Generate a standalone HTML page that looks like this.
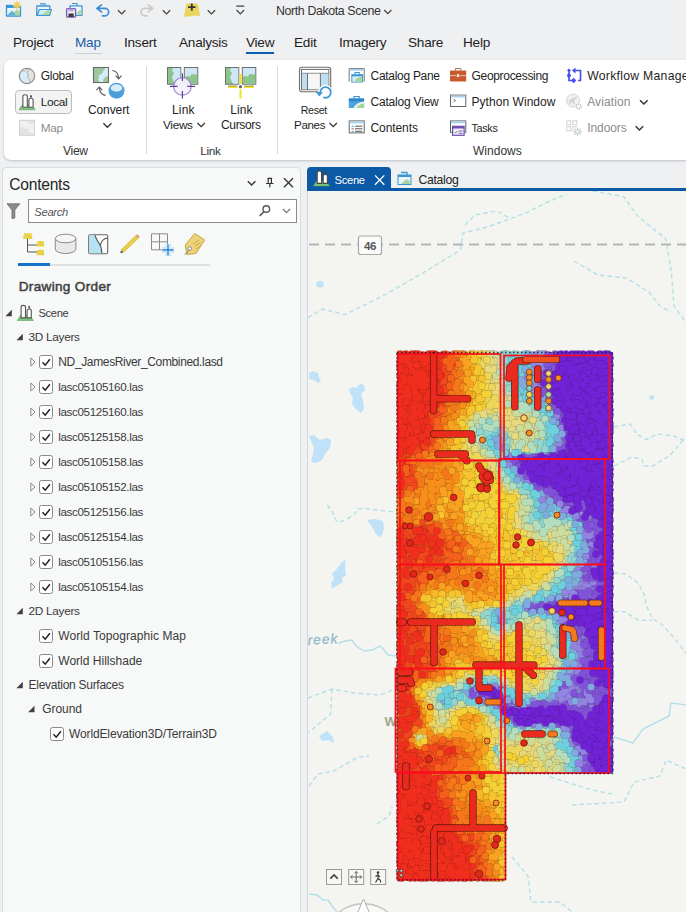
<!DOCTYPE html>
<html><head><meta charset="utf-8">
<style>
*{box-sizing:border-box;margin:0;padding:0}
html,body{width:686px;height:912px;overflow:hidden;background:#eff0f2;font-family:"Liberation Sans",sans-serif;color:#1e1e1e}
.a{position:absolute}
.t{position:absolute;white-space:nowrap;line-height:16px;font-size:12.5px;letter-spacing:-0.2px;transform-origin:0 50%}
.tab{font-size:13.6px;letter-spacing:-0.25px}
svg{position:absolute;overflow:visible}
</style></head><body>
<!-- TITLEBAR -->

<div class="t" style="left:276.0px;top:3.3px;font-size:12.4px;letter-spacing:-0.39px;color:#333;">North Dakota Scene</div>
<!--TITLEICONS-->
<svg style="left:0;top:0" width="260" height="24" viewBox="0 0 260 24">
<!-- new project -->
<g>
<path d="M6.5 5.5h5l1 1.5h8v9h-14z" fill="#e9f4fb" stroke="#3b97d3" stroke-width="1.3" stroke-linejoin="round"/>
<rect x="6" y="5" width="7" height="3" fill="#3b97d3"/>
<path d="M10 15.5l7-6 3 2.5v3.5z" fill="#a8d5a0"/>
<path d="M7 15.5l5-5 4 5z" fill="#5fb0e0"/>
<circle cx="17" cy="5.2" r="2.6" fill="#f2cf4a"/>
<g stroke="#e8b93a" stroke-width="1"><path d="M17 1v1.2M17 8.2v1.2M12.9 5.2h1.2M19.9 5.2h1.2M14.1 2.3l.9.9M19 7.2l.9.9M19.9 2.3l-.9.9M15 7.2l-.9.9"/></g>
</g>
<!-- open -->
<g>
<path d="M40 3.8h5v2" fill="none" stroke="#3b97d3" stroke-width="1.2"/>
<path d="M36.8 6h13v9.3h-13z" fill="#eef6fc" stroke="#3b97d3" stroke-width="1.3" stroke-linejoin="round"/>
<path d="M39.5 9.5h12l-2.2 5.8h-12.3z" fill="#d5ebf8" stroke="#3b97d3" stroke-width="1.2" stroke-linejoin="round"/>
<path d="M42 15l6-5 2.5 1-1.3 4z" fill="#a8d5a0"/>
</g>
<!-- save -->
<g>
<path d="M72 3.5h5v2" fill="none" stroke="#3b97d3" stroke-width="1.2"/>
<path d="M70 5.8h12v9.5h-12z" fill="#eef6fc" stroke="#3b97d3" stroke-width="1.3" stroke-linejoin="round"/>
<path d="M76 14l4-4 2 1.5v3.5z" fill="#a8d5a0"/>
<rect x="66.6" y="8.6" width="9" height="8.6" rx="1" fill="#efe9f7" stroke="#7a5bb0" stroke-width="1.3"/>
<rect x="68.5" y="13.5" width="5.2" height="3.5" fill="#3a3a3a"/>
<rect x="68.5" y="8.8" width="5" height="2.4" fill="#b9a5dc"/>
</g>
<!-- undo -->
<path d="M101.5 4.9l-4.6 3.500 4.600 3.500M97 8.400h8a3.700 3.700 0 0 1 0 7.400h-2.500" fill="none" stroke="#3a8fd8" stroke-width="1.7" stroke-linecap="round" stroke-linejoin="round"/>
<path d="M118 10.3l3.7 3.6 3.7-3.6" fill="none" stroke="#444" stroke-width="1.3"/>
<!-- redo -->
<path d="M148.200 4.900l4.600 3.500-4.600 3.500M152.700 8.400h-8a3.700 3.700 0 0 0 0 7.400h2.500" fill="none" stroke="#c9c9c9" stroke-width="1.700" stroke-linecap="round" stroke-linejoin="round"/>
<path d="M162.800 10.300l3.700 3.600 3.700-3.600" fill="none" stroke="#444" stroke-width="1.300"/>
<!-- yellow add -->
<path d="M186.300 3.600h11.600l2.100 12.400q-4-1-8 0t-8 .5z" fill="#e9d45f"/>
<path d="M191.800 3.400v7.400M188.100 7.100h7.400" stroke="#333" stroke-width="1.800"/>
<path d="M207.700 10.300l3.700 3.600 3.700-3.600" fill="none" stroke="#444" stroke-width="1.300"/>
<!-- customize -->
<path d="M236.300 6.200h8M236.500 10l3.800 3.800 3.800-3.800" fill="none" stroke="#444" stroke-width="1.200"/>
</svg>
<svg style="left:383px;top:8px" width="10" height="8" viewBox="0 0 10 8"><path d="M1.200 2l3.600 3.600 3.600-3.600" fill="none" stroke="#444" stroke-width="1.300"/></svg>

<!--/TITLEICONS-->
<!-- MENU TABS -->
<div class="t tab" style="left:13px;top:34.5px">Project</div>
<div class="t tab" style="left:75px;top:34.5px;color:#1b5fa8">Map</div>
<div class="a" style="left:75px;top:52.5px;width:27px;height:1px;background:#cfd0d4"></div>
<div class="t tab" style="left:124px;top:34.5px">Insert</div>
<div class="t tab" style="left:179px;top:34.5px">Analysis</div>
<div class="t tab" style="left:246px;top:34.5px">View</div>
<div class="a" style="left:246px;top:52px;width:28px;height:2px;background:#0b5cab"></div>
<div class="t tab" style="left:294px;top:34.5px">Edit</div>
<div class="t tab" style="left:339px;top:34.5px">Imagery</div>
<div class="t tab" style="left:408px;top:34.5px">Share</div>
<div class="t tab" style="left:463px;top:34.5px">Help</div>
<!-- RIBBON -->
<div class="a" id="ribbon" style="left:4px;top:59.5px;width:700px;height:100px;background:#fff;border-radius:7px 0 0 7px;box-shadow:0 1px 2.5px rgba(0,0,20,.2)"></div>
<div class="a" style="left:146px;top:66px;width:1px;height:88px;background:#dcdcdc"></div>
<div class="a" style="left:277px;top:66px;width:1px;height:88px;background:#dcdcdc"></div>
<!--RIBBONCONTENT-->
<!-- local button bg -->
<div class="a" style="left:15px;top:90px;width:57px;height:24px;background:#f3f3f3;border:1px solid #bcbcbc;border-radius:4px"></div>
<svg style="left:0;top:60px" width="686" height="100" viewBox="0 60 686 100">
<!-- globe -->
<g>
<circle cx="27" cy="76" r="7.700" fill="#d8ebf8" stroke="#8a8a8a" stroke-width="1.200"/>
<path d="M29.500 68.800l-2.500 4 1.500 2-1 2.500 2 2 .5 3.500 3-2.500 1.600-4-1-4.500z" fill="#e3e3e3" stroke="#9a9a9a" stroke-width=".8"/>
<path d="M22 70.500l2.500-1.800 2 .3-2 2.500z" fill="#e3e3e3" stroke="#9a9a9a" stroke-width=".6"/>
</g>
<!-- local -->
<g>
<path d="M19 109.800l3.300-5h9.600l3.300 5z" fill="#7cc47f" stroke="#58a35c" stroke-width=".6"/>
<path d="M22.900 107.200v-10.700q0-1.800 2.200-1.800t2.200 1.800v10.700z" fill="#fff" stroke="#555" stroke-width="1.100"/>
<path d="M28.900 107.200v-7.600q0-1.300 2.100-1.300t2.100 1.300v7.600zM31 98.300v-3.200M30 96.400h2" fill="#fff" stroke="#555" stroke-width="1.100"/>
</g>
<!-- map disabled -->
<g>
<rect x="19.500" y="120.300" width="15" height="15" fill="#f1f1f1" stroke="#cfcfcf" stroke-width="1"/>
<path d="M20 135v-7l3-2 2 3 3-1 1 4 4 1v2z" fill="#e2e2e2"/>
<path d="M27 121l3 3 4-1v-2z" fill="#e2e2e2"/>
</g>
<!-- convert -->
<g>
<rect x="93.500" y="67.500" width="15" height="15" fill="#9cc79a" stroke="#6a6a6a" stroke-width="1.100"/>
<path d="M108 68h-2.500l-2 2.500-1.500 3-3.500 2 .5 2.500-1 1 1.500 3h3.500l.5-3 2.500-2.500 2-.5z" fill="#d5ebf8"/>
<ellipse cx="116.500" cy="90.700" rx="8" ry="8" fill="#4c9fda"/>
<ellipse cx="116.500" cy="88" rx="5.800" ry="3.700" fill="#d9ecfa"/>
<path d="M112.300 70.500q6 .5 6.300 8m-3-2.800l3 3.200 2.900-3.200" fill="none" stroke="#5a5a5a" stroke-width="1.100"/>
<path d="M105.600 95.400q-5.800-.8-6.300-8m-2.900 2.800l2.900-3.200 3 3.200" fill="none" stroke="#5a5a5a" stroke-width="1.100"/>
<path d="M103.400 123.300l4 3.900 4-3.900" fill="none" stroke="#333" stroke-width="1.400"/>
</g>
<!-- link views -->
<g>
<rect x="167.500" y="67.500" width="13.300" height="16.700" fill="#8cc58a" stroke="#6e6e6e" stroke-width="1"/>
<path d="M173 68l-1 3 2 2-2 4 1 3 2 3.700h5.300v-15.700z" fill="#cfe6f6"/>
<rect x="184.300" y="67.500" width="13.500" height="16.700" fill="#cfe6f6" stroke="#6e6e6e" stroke-width="1"/>
<path d="M184.800 83.700v-6l2-2 3 1 2-3 3 1 2.500-1v10z" fill="#8cc58a"/>
<circle cx="182.400" cy="86.400" r="8.800" fill="#f5f3fb" fill-opacity=".92" stroke="#9f8ccd" stroke-width="1.300"/>
<path d="M182.400 73.500v7.500M182.400 91v7.600M170 86.400h7.600M187.300 86.400h7.700" stroke="#5b3fa0" stroke-width="1.200"/>
<path d="M197.500 123l3.700 3.700 3.700-3.700" fill="none" stroke="#333" stroke-width="1.300"/>
</g>
<!-- link cursors -->
<g>
<rect x="225.500" y="67.500" width="13.300" height="16.700" fill="#8cc58a" stroke="#6e6e6e" stroke-width="1"/>
<path d="M231 68l-1 3 2 2-2 4 1 3 2 3.700h5.300v-15.700z" fill="#cfe6f6"/>
<rect x="242.300" y="67.500" width="13.500" height="16.700" fill="#cfe6f6" stroke="#6e6e6e" stroke-width="1"/>
<path d="M242.800 83.700v-6l2-2 3 1 2-3 3 1 2.500-1v10z" fill="#8cc58a"/>
<path d="M240.500 74v10M240.500 89.500v9M228 87h9.300M244 87h9.800" stroke="#f2e21e" stroke-width="2"/>
<path d="M228 86h9.300M244 86h9.800" stroke="#555" stroke-width=".6"/>
<circle cx="240.500" cy="86.700" r="1.600" fill="#666"/>
</g>
<!-- reset panes -->
<g>
<rect x="299.500" y="67.300" width="31.200" height="24.500" rx="2.500" fill="#fff" stroke="#6e6e6e" stroke-width="1.100"/>
<rect x="301.500" y="69.400" width="27.300" height="20.300" fill="#fff" stroke="#6e6e6e" stroke-width="1"/>
<path d="M301.500 73.300h27.300" stroke="#6e6e6e" stroke-width=".9"/>
<rect x="302" y="73.800" width="5" height="15.400" fill="#bfddf3"/>
<rect x="320.800" y="73.800" width="7.500" height="15.400" fill="#bfddf3"/>
<rect x="308" y="73.800" width="12" height="15.400" fill="#f6f6f6"/>
<path d="M307.500 73.300v16.400M320.400 73.300v16.400" stroke="#6e6e6e" stroke-width="1"/>
<circle cx="325.300" cy="92.400" r="7.300" fill="#fff"/>
<path d="M320.200 92.600a5.300 5.300 0 1 1 3.800 4.900" fill="none" stroke="#3d9ad6" stroke-width="1.800" stroke-linecap="round"/>
<path d="M315.800 92h7.200l-3.700 4.500z" fill="#3d9ad6"/>
<path d="M329.500 123l3.700 3.700 3.700-3.700" fill="none" stroke="#333" stroke-width="1.300"/>
</g>
<!-- catalog pane -->
<g>
<path d="M349.200 81.500v-13h15v13" fill="#fff" stroke="#777" stroke-width="1"/>
<rect x="349.700" y="68.800" width="14" height="2" fill="#a9d3f0"/>
<path d="M355 74.200v-1.700h4.200v1.700" fill="none" stroke="#3b97d3" stroke-width="1.100"/>
<rect x="351.300" y="74.200" width="11.800" height="8.300" fill="#3b97d3"/>
<rect x="352.300" y="76.300" width="9.800" height="5.400" fill="#d9edf9"/>
<path d="M354.500 81.700q1.500-4.500 7.600-5v5z" fill="#a5d49c"/>
</g>
<!-- catalog view -->
<g>
<path d="M354 98.700v-2.200h5.200v2.200" fill="none" stroke="#3b97d3" stroke-width="1.200"/>
<rect x="348.800" y="98.500" width="15.300" height="9.500" fill="#4aa3df"/>
<rect x="348.800" y="98.500" width="15.300" height="2.800" fill="#2f86c6"/>
<path d="M353.500 108q2-5.500 10.600-6.500v6.500z" fill="#e6f3e2"/>
<path d="M356.500 108q2-4 7.600-4.500v4.500z" fill="#a5d49c"/>
</g>
<!-- contents -->
<g>
<rect x="349.200" y="120.900" width="15" height="12" fill="#fff" stroke="#666" stroke-width="1"/>
<rect x="349.700" y="121.400" width="14" height="2" fill="#a9d3f0"/>
<path d="M355 126.200h7.300M355 128.800h7.300M355 131.300h7.300" stroke="#555" stroke-width="1"/>
<path d="M351.600 126.200h2M351.600 131.300h2" stroke="#3b97d3" stroke-width="1.100"/>
<path d="M351.600 128.800h2" stroke="#d05a3a" stroke-width="1.100"/>
</g>
<!-- geoprocessing -->
<g>
<path d="M455.300 70.700v-2.200h5.600v2.200" fill="#fff" stroke="#9a7a70" stroke-width="1"/>
<rect x="450" y="70.500" width="16.200" height="11" rx=".8" fill="#c8592f"/>
<path d="M450 75.600h16.200" stroke="#f3cfc0" stroke-width=".9"/>
<rect x="456.700" y="73.800" width="2.800" height="3.600" fill="#fbeee8" stroke="#c8592f" stroke-width=".7"/>
</g>
<!-- python window -->
<g>
<rect x="450.500" y="95.100" width="15.300" height="11.400" fill="#fff" stroke="#666" stroke-width="1"/>
<rect x="451" y="95.600" width="14.300" height="1.900" fill="#a9d3f0"/>
<path d="M453.700 99.200l1.800 1.300-1.800 1.300" fill="none" stroke="#555" stroke-width=".9"/>
</g>
<!-- tasks -->
<g>
<rect x="450.500" y="120.900" width="15.300" height="11.400" fill="#fff" stroke="#666" stroke-width="1"/>
<rect x="451" y="121.400" width="14.300" height="1.900" fill="#a9d3f0"/>
<rect x="452.600" y="126.300" width="11.500" height="9" fill="#f5f1fb" stroke="#6a4fb0" stroke-width="1.200"/>
<rect x="452.600" y="126.300" width="11.500" height="2.200" fill="#6a4fb0"/>
<path d="M458.500 131h4M458.500 133.300h4" stroke="#6a4fb0" stroke-width=".9"/>
<path d="M454.600 132l1.100 1.100 1.800-2.200" fill="none" stroke="#3f9f4a" stroke-width="1"/>
</g>
<!-- workflow manager -->
<g fill="none" stroke="#4b4ff0" stroke-width="1.700">
<path d="M569 70.500v10h3M574.500 70.500h6v10h-2.500"/>
<g fill="#4b4ff0" stroke="none"><circle cx="569" cy="70.300" r="1.500"/><circle cx="569" cy="75.500" r="1.900"/><path d="M573.600 77.700l2.700 2.800-2.700 2.800-2.700-2.800zM575.500 67.600v5.800l-3.600-2.900z"/></g>
</g>
<!-- aviation -->
<g>
<circle cx="573" cy="100.600" r="6.500" fill="#f1f1f1" stroke="#d6d6d6" stroke-width="1"/>
<path d="M569.300 103.700l7-6.400M572.300 98.300l1.800 5.800M569.300 100.200l4.200 1.500" stroke="#cdcdcd" stroke-width="1.400" fill="none" stroke-linecap="round"/>
<circle cx="578.600" cy="106.400" r="3.300" fill="#fff"/>
<circle cx="578.600" cy="106.400" r="2.300" fill="#fff" stroke="#bdbdbd" stroke-width="1.500" stroke-dasharray="1.100 .700"/>
<path d="M640 100.300l3.800 3.800 3.800-3.800" fill="none" stroke="#333" stroke-width="1.400"/>
</g>
<!-- indoors -->
<g>
<g fill="#fff" stroke="#d2d2d2" stroke-width="1"><rect x="566.700" y="120.800" width="4" height="4"/><rect x="572.800" y="120.800" width="4" height="4"/><rect x="566.700" y="126.800" width="4" height="4"/><path d="M572.800 130.800v-4h4"/></g>
<circle cx="577.600" cy="131.600" r="3.600" fill="#fff"/>
<path d="M577.600 127.400v8.400M573.400 131.600h8.400M574.600 128.600l6 6M580.600 128.600l-6 6" stroke="#c2c2c2" stroke-width="1.100"/>
<circle cx="577.600" cy="131.600" r="1.300" fill="#fff"/>
<path d="M635.600 126.300l3.800 3.800 3.800-3.800" fill="none" stroke="#333" stroke-width="1.400"/>
</g>
</svg>
<div class="t" style="left:40.8px;top:68.0px;font-size:12.0px;letter-spacing:-0.30px;">Global</div>
<div class="t" style="left:40.8px;top:94.0px;font-size:11.8px;letter-spacing:-0.35px;">Local</div>
<div class="t" style="left:40.8px;top:120.0px;font-size:11.8px;letter-spacing:-0.38px;color:#8c8c8c;">Map</div>
<div class="t" style="left:88.0px;top:101.8px;font-size:12.0px;letter-spacing:-0.11px;">Convert</div>
<div class="t" style="left:63.0px;top:143.0px;font-size:12.0px;letter-spacing:-0.27px;color:#333;">View</div>
<div class="t" style="left:172.0px;top:102.0px;font-size:12.0px;letter-spacing:0.16px;">Link</div>
<div class="t" style="left:163.0px;top:116.8px;font-size:11.8px;letter-spacing:-0.32px;">Views</div>
<div class="t" style="left:230.3px;top:102.0px;font-size:12.0px;letter-spacing:0.06px;">Link</div>
<div class="t" style="left:221.0px;top:116.8px;font-size:12.0px;letter-spacing:-0.34px;">Cursors</div>
<div class="t" style="left:200.3px;top:142.8px;font-size:11.8px;letter-spacing:-0.32px;color:#333;">Link</div>
<div class="t" style="left:300.7px;top:102.0px;font-size:10.6px;letter-spacing:-0.27px;">Reset</div>
<div class="t" style="left:294.0px;top:116.8px;font-size:11.6px;letter-spacing:-0.34px;">Panes</div>
<div class="t" style="left:370.5px;top:67.8px;font-size:12.0px;letter-spacing:-0.29px;">Catalog Pane</div>
<div class="t" style="left:370.5px;top:94.0px;font-size:12.0px;letter-spacing:-0.20px;">Catalog View</div>
<div class="t" style="left:370.5px;top:119.8px;font-size:12.0px;letter-spacing:-0.08px;">Contents</div>
<div class="t" style="left:471.5px;top:67.8px;font-size:12.0px;letter-spacing:-0.31px;">Geoprocessing</div>
<div class="t" style="left:471.5px;top:94.0px;font-size:12.0px;letter-spacing:0.05px;">Python Window</div>
<div class="t" style="left:471.5px;top:119.8px;font-size:10.8px;letter-spacing:-0.33px;">Tasks</div>
<div class="t" style="left:473.0px;top:142.6px;font-size:12.0px;letter-spacing:0.02px;color:#333;">Windows</div>
<div class="t" style="left:587.2px;top:67.8px;font-size:12.2px;letter-spacing:0.29px;">Workflow Manager</div>
<div class="t" style="left:587.2px;top:94.0px;font-size:12.0px;letter-spacing:0.10px;color:#8c8c8c;">Aviation</div>
<div class="t" style="left:587.2px;top:119.8px;font-size:12.0px;letter-spacing:-0.07px;color:#8c8c8c;">Indoors</div>
<!--/RIBBONCONTENT-->
<!-- CONTENTS PANE -->
<div class="a" id="pane" style="left:2px;top:167px;width:299px;height:750px;background:#f7f8f8;border:1px solid #d9dbe0;border-radius:4px 4px 0 0"></div>
<!--PANECONTENT-->
<div class="a" style="left:28px;top:199px;width:269px;height:24px;background:#fff;border:1px solid #8c8c8c"></div>
<div class="a" style="left:50px;top:263.500px;width:160px;height:2px;background:#dfe0e1"></div>
<div class="a" style="left:18px;top:262.500px;width:32px;height:3px;background:#1473c8"></div>
<svg style="left:0;top:170px" width="300" height="100" viewBox="0 170 300 100">
<!-- header buttons -->
<path d="M247.800 181.200l3.800 3.800 3.800-3.800" fill="none" stroke="#333" stroke-width="1.300"/>
<path d="M267.500 178.300h4.600M268.200 178.300v5M271.400 178.300v5M266 183.500h7.500M269.800 183.500v3.800" fill="none" stroke="#333" stroke-width="1.200"/>
<path d="M284 178.300l9 9M293 178.300l-9 9" stroke="#333" stroke-width="1.300"/>
<!-- filter -->
<path d="M7 203.800h12.800l-5 6.200v8l-2.800.6v-8.600z" fill="#8a8a8a" stroke="#6a6a6a" stroke-width=".8" stroke-linejoin="round"/>
<!-- magnifier -->
<circle cx="266.300" cy="209" r="3.300" fill="none" stroke="#555" stroke-width="1.400"/><path d="M264 211.500l-4.300 4.500" stroke="#555" stroke-width="1.700"/>
<path d="M282.900 209l3.600 3.600 3.600-3.600" fill="none" stroke="#777" stroke-width="1.200"/>
<!-- tree icon -->
<g>
<path d="M27.500 239v13h10M27.500 245h10" fill="none" stroke="#555" stroke-width="1"/>
<path d="M24 233.300h7.500l1 5.700h-9.500z" fill="#e8d24a"/>
<path d="M37.500 241h6l1 5.500h-8z" fill="#e8d24a"/>
<path d="M37.500 249.800h6l1 5.500h-8z" fill="#e8d24a"/>
</g>
<!-- cylinder -->
<g>
<path d="M55.300 238.500v10.500a10.300 4.500 0 0 0 20.600 0v-10.500" fill="#e9e9e9" stroke="#8a8a8a" stroke-width="1"/>
<ellipse cx="65.600" cy="238.500" rx="10.300" ry="4.300" fill="#f6f6f6" stroke="#8a8a8a" stroke-width="1"/>
</g>
<!-- blue map -->
<g>
<rect x="88.700" y="234.800" width="19" height="19" rx="1.500" fill="#fafafa" stroke="#666" stroke-width="1.100"/>
<path d="M89.300 235.300h5.500q2 5 4.500 8.500t2.500 9.500h-12.500z" fill="#b5e3f3"/>
<path d="M94.800 235.300q2 5 4.500 8.500t2.500 9.500M107.500 238q-6 1-7 7" fill="none" stroke="#555" stroke-width="1.100"/>
</g>
<!-- pencil -->
<g>
<path d="M121 252.500l1-3.500 14-13.500 2.500 2.500-14 13.500z" fill="#e9cf45" stroke="#c9a92a" stroke-width=".6"/>
<path d="M136 235.500l1.200-1.200 2.500 2.500-1.200 1.200z" fill="#e58a7a"/>
<path d="M120.300 253.300l.8-3 2.200 2.200z" fill="#555"/>
</g>
<!-- grid plus -->
<g>
<path d="M151.500 233.800h16v16h-16zM159.500 233.800v16M151.500 241.800h16" fill="none" stroke="#8a8a8a" stroke-width="1"/>
<rect x="162" y="247" width="12" height="6" fill="#cfe8fa"/><rect x="165" y="244" width="6" height="12" fill="#cfe8fa"/>
<path d="M168 244.500v11M162.500 250h11" stroke="#2f86d0" stroke-width="1.300"/>
</g>
<!-- tag -->
<g>
<path d="M185.300 245l9.500-11.500 10 6.500-9 13.500-9 1z" fill="#ecd27a" stroke="#c9a43c" stroke-width="1" stroke-linejoin="round"/>
<path d="M193 244l6-4M194.500 246.500l6-4M196 249l5-3.300" stroke="#c9a43c" stroke-width=".9"/>
<circle cx="189.700" cy="248.500" r="1.800" fill="#fff" stroke="#8a8a8a" stroke-width="1"/>
<path d="M188.600 250.200q-1.500 4-4 4" fill="none" stroke="#8a8a8a" stroke-width="1"/>
</g>
</svg>
<div class="t" style="left:9.3px;top:176.5px;font-size:15.6px;letter-spacing:-0.25px;color:#262626;">Contents</div>
<div class="t" style="left:34.3px;top:204.0px;font-size:11.2px;letter-spacing:-0.29px;color:#555;font-style:italic;">Search</div>
<div class="t" style="left:18.7px;top:278.8px;font-size:13.6px;letter-spacing:0.31px;color:#404040;-webkit-text-stroke:.5px #404040;">Drawing Order</div>
<div class="t" style="left:38.5px;top:305.0px;font-size:11.2px;letter-spacing:-0.36px;color:#3a3a3a;">Scene</div>
<div class="t" style="left:28.5px;top:329.0px;font-size:11.8px;letter-spacing:-0.29px;color:#3a3a3a;">3D Layers</div>
<div class="t" style="left:58.3px;top:354.0px;font-size:12.0px;letter-spacing:-0.36px;color:#3a3a3a;">ND_JamesRiver_Combined.lasd</div>
<div class="t" style="left:58.3px;top:379.0px;font-size:11.6px;letter-spacing:-0.35px;color:#3a3a3a;">lasc05105160.las</div>
<div class="t" style="left:58.3px;top:404.0px;font-size:11.6px;letter-spacing:-0.35px;color:#3a3a3a;">lasc05125160.las</div>
<div class="t" style="left:58.3px;top:429.0px;font-size:11.6px;letter-spacing:-0.35px;color:#3a3a3a;">lasc05125158.las</div>
<div class="t" style="left:58.3px;top:454.0px;font-size:11.6px;letter-spacing:-0.35px;color:#3a3a3a;">lasc05105158.las</div>
<div class="t" style="left:58.3px;top:479.0px;font-size:11.6px;letter-spacing:-0.35px;color:#3a3a3a;">lasc05105152.las</div>
<div class="t" style="left:58.3px;top:504.0px;font-size:11.6px;letter-spacing:-0.35px;color:#3a3a3a;">lasc05125156.las</div>
<div class="t" style="left:58.3px;top:529.0px;font-size:11.6px;letter-spacing:-0.35px;color:#3a3a3a;">lasc05125154.las</div>
<div class="t" style="left:58.3px;top:554.0px;font-size:11.6px;letter-spacing:-0.35px;color:#3a3a3a;">lasc05105156.las</div>
<div class="t" style="left:58.3px;top:579.0px;font-size:11.6px;letter-spacing:-0.35px;color:#3a3a3a;">lasc05105154.las</div>
<div class="t" style="left:28.5px;top:603.0px;font-size:11.8px;letter-spacing:-0.29px;color:#3a3a3a;">2D Layers</div>
<div class="t" style="left:58.3px;top:628.0px;font-size:12.0px;letter-spacing:0.07px;color:#3a3a3a;">World Topographic Map</div>
<div class="t" style="left:58.3px;top:653.0px;font-size:12.0px;letter-spacing:0.01px;color:#3a3a3a;">World Hillshade</div>
<div class="t" style="left:28.5px;top:677.0px;font-size:12.0px;letter-spacing:-0.27px;color:#3a3a3a;">Elevation Surfaces</div>
<div class="t" style="left:42.3px;top:701.0px;font-size:12.0px;letter-spacing:-0.07px;color:#3a3a3a;">Ground</div>
<div class="t" style="left:69.0px;top:726.0px;font-size:12.0px;letter-spacing:-0.13px;color:#3a3a3a;">WorldElevation3D/Terrain3D</div>
<svg style="left:0;top:300px" width="300" height="450" viewBox="0 300 300 450">
<path d="M11.8 309.8v6.400h-6.400z" fill="#404040"/>
<path d="M22.8 333.8v6.400h-6.400z" fill="#404040"/>
<path d="M22.8 607.8v6.400h-6.400z" fill="#404040"/>
<path d="M22.8 681.8v6.400h-6.400z" fill="#404040"/>
<path d="M34.5 705.8v6.400h-6.400z" fill="#404040"/>
<path d="M30.8 358l4.200 4-4.200 4z" fill="none" stroke="#8a8a8a" stroke-width="1"/>
<rect x="39.5" y="355.5" width="13" height="13" rx="2" fill="#fff" stroke="#8a8a8a" stroke-width="1"/><path d="M42.5 362.3l2.700 2.900 4.700-6" fill="none" stroke="#222" stroke-width="1.500"/>
<path d="M30.8 383l4.200 4-4.200 4z" fill="none" stroke="#8a8a8a" stroke-width="1"/>
<rect x="39.5" y="380.5" width="13" height="13" rx="2" fill="#fff" stroke="#8a8a8a" stroke-width="1"/><path d="M42.5 387.3l2.700 2.900 4.700-6" fill="none" stroke="#222" stroke-width="1.500"/>
<path d="M30.8 408l4.200 4-4.200 4z" fill="none" stroke="#8a8a8a" stroke-width="1"/>
<rect x="39.5" y="405.5" width="13" height="13" rx="2" fill="#fff" stroke="#8a8a8a" stroke-width="1"/><path d="M42.5 412.3l2.700 2.900 4.700-6" fill="none" stroke="#222" stroke-width="1.500"/>
<path d="M30.8 433l4.200 4-4.200 4z" fill="none" stroke="#8a8a8a" stroke-width="1"/>
<rect x="39.5" y="430.5" width="13" height="13" rx="2" fill="#fff" stroke="#8a8a8a" stroke-width="1"/><path d="M42.5 437.3l2.700 2.900 4.700-6" fill="none" stroke="#222" stroke-width="1.500"/>
<path d="M30.8 458l4.200 4-4.200 4z" fill="none" stroke="#8a8a8a" stroke-width="1"/>
<rect x="39.5" y="455.5" width="13" height="13" rx="2" fill="#fff" stroke="#8a8a8a" stroke-width="1"/><path d="M42.5 462.3l2.700 2.900 4.700-6" fill="none" stroke="#222" stroke-width="1.500"/>
<path d="M30.8 483l4.200 4-4.200 4z" fill="none" stroke="#8a8a8a" stroke-width="1"/>
<rect x="39.5" y="480.5" width="13" height="13" rx="2" fill="#fff" stroke="#8a8a8a" stroke-width="1"/><path d="M42.5 487.3l2.700 2.900 4.700-6" fill="none" stroke="#222" stroke-width="1.500"/>
<path d="M30.8 508l4.200 4-4.200 4z" fill="none" stroke="#8a8a8a" stroke-width="1"/>
<rect x="39.5" y="505.5" width="13" height="13" rx="2" fill="#fff" stroke="#8a8a8a" stroke-width="1"/><path d="M42.5 512.3l2.700 2.900 4.700-6" fill="none" stroke="#222" stroke-width="1.500"/>
<path d="M30.8 533l4.200 4-4.200 4z" fill="none" stroke="#8a8a8a" stroke-width="1"/>
<rect x="39.5" y="530.5" width="13" height="13" rx="2" fill="#fff" stroke="#8a8a8a" stroke-width="1"/><path d="M42.5 537.3l2.700 2.900 4.700-6" fill="none" stroke="#222" stroke-width="1.500"/>
<path d="M30.8 558l4.200 4-4.200 4z" fill="none" stroke="#8a8a8a" stroke-width="1"/>
<rect x="39.5" y="555.5" width="13" height="13" rx="2" fill="#fff" stroke="#8a8a8a" stroke-width="1"/><path d="M42.5 562.3l2.700 2.900 4.700-6" fill="none" stroke="#222" stroke-width="1.500"/>
<path d="M30.8 583l4.200 4-4.200 4z" fill="none" stroke="#8a8a8a" stroke-width="1"/>
<rect x="39.5" y="580.5" width="13" height="13" rx="2" fill="#fff" stroke="#8a8a8a" stroke-width="1"/><path d="M42.5 587.3l2.700 2.900 4.700-6" fill="none" stroke="#222" stroke-width="1.500"/>
<rect x="39.5" y="629.5" width="13" height="13" rx="2" fill="#fff" stroke="#8a8a8a" stroke-width="1"/><path d="M42.5 636.3l2.700 2.900 4.700-6" fill="none" stroke="#222" stroke-width="1.500"/>
<rect x="39.5" y="654.5" width="13" height="13" rx="2" fill="#fff" stroke="#8a8a8a" stroke-width="1"/><path d="M42.5 661.3l2.700 2.900 4.700-6" fill="none" stroke="#222" stroke-width="1.500"/>
<rect x="50.5" y="727.5" width="13" height="13" rx="2" fill="#fff" stroke="#8a8a8a" stroke-width="1"/><path d="M53.5 734.3l2.700 2.900 4.700-6" fill="none" stroke="#222" stroke-width="1.500"/>
<g transform="translate(-1.800,210.700)"><path d="M19 109.800l3.300-5h9.600l3.300 5z" fill="#7cc47f" stroke="#58a35c" stroke-width=".6"/><path d="M22.900 107.200v-10.700q0-1.800 2.200-1.800t2.200 1.800v10.700z" fill="#fff" stroke="#555" stroke-width="1.100"/><path d="M28.900 107.200v-7.600q0-1.300 2.100-1.300t2.100 1.300v7.600zM31 98.300v-3.200M30 96.400h2" fill="#fff" stroke="#555" stroke-width="1.100"/></g>
</svg>
<!--/PANECONTENT-->
<!-- MAP VIEW -->
<div class="a" id="mapwrap" style="left:307px;top:190px;width:380px;height:730px;background:#d3d6dd"></div>
<div class="a" id="map" style="left:308px;top:191px;width:378px;height:721px;background:#f4f5f0;overflow:hidden">
<!--MAPCONTENT-->
<svg style="left:-308px;top:-191px" width="686" height="912" viewBox="0 0 686 912">
<g id="basemap">
<!-- lakes -->
<g fill="#bfe2f8">
<path d="M309 373l4-2 5 2 1 5 2 3-3 2-4-3-5-1z"/>
<path d="M349 389l4-2 3 1 4-4 4 1 1 5-4 4 2 6 1 9-3 4-5-4-4-5 1-6-3-5z"/>
<path d="M309 436l5-1 6 5 7-2 4 2-1 8-5 6-3 6-6 3-5-1 2-8 1-6z"/>
<path d="M367 520l8-1 8 2 1 8-3 9-5-4-4-7z"/>
<path d="M343 561l3-1-1 8 1 7-4 3 1 4-5 3-6 4-1-6 3-4-2-6 4-3z"/>
<path d="M319 736l8-5 6 6 1 6-6-3-6 1z"/>
<ellipse cx="320" cy="284.500" rx="3.800" ry="3.200"/>
<path d="M650 395l5 1-2 4-4-1z"/>
</g>
<!-- streams dashed -->
<g fill="none" stroke="#b4dfe9" stroke-width="1.400" stroke-dasharray="4.500 3">
<path d="M327 505q6 6 8 13t12 1 10-9 20 0 18 0"/>
<path d="M308 698l24-9 22 4 26 2 15-6M332 689l-1.500 25-22.500 19"/>
<path d="M309 786l9-12 16-3 24-14 11-1"/>
<path d="M377 824l12-8 3-9"/>
<path d="M308 317.600l14.500-8.600 22.500 5.700 39.400-19.700 39.400-22.500 36.600-22.500 2.600-17 22.700-5.500 39.300-14 22.600-11.500 19.400-8"/>
<path d="M465 225l10-10 22-4 14 8"/>
<path d="M592.600 191l31 5.600 14 19.400 28.200 22.800 5.600 33.700 2.600 33.500 12 17"/>
<path d="M574 261l24 14 28 3 23 14 11 14 11 6"/>
<path d="M614 427l16-3 7 10 8.600 5.600 12.400-5.600 15.700 2 12.300 5"/>
<path d="M614 466l17.600-9 10.400 2 2 7 8.600 0 17.400-10.600 9-10.400 5-7"/>
<path d="M614 573l12 1 12.600 9.500 7 14 0 7 7 14 10.400 7 12.400 14 10.600 14"/>
<path d="M614 611.600l10.600 0 14 8.800 14 0"/>
<path d="M572 805l52-3 10-20 26-6 6-16 20 9"/>
<path d="M550 777l42 13 20 4"/>
<path d="M512 857l16 19 3 26 29 0 12 10"/>
</g>
<g fill="none" stroke="#b4dfe9" stroke-width="1.400">
<path d="M338 643.500l7-2.500 7-1 4 6 8 5 8-1 8-4 4 4 4 5 8 1"/>
<path d="M614 737l19 6 10-14 26-13 2-13 16 2"/>
<path d="M309 894l8 1 6 5 5 0 4 6 5 6"/>
</g>
<!-- road -->
<path d="M309 244.500h378" stroke="#b4b4b4" stroke-width="1.800" stroke-dasharray="10 6" fill="none"/>
<rect x="358.500" y="236" width="23" height="18.500" rx="2" fill="#fbfbfb" stroke="#a8a8a8" stroke-width="1.200"/>
<text x="370" y="250" font-family="Liberation Sans, sans-serif" font-size="11.500" font-weight="bold" fill="#555" text-anchor="middle" letter-spacing="-.5">46</text>
<text x="308" y="645" font-family="Liberation Sans, sans-serif" font-size="13.500" font-style="italic" fill="#8fb7ca" stroke="#8fb7ca" stroke-width=".3" letter-spacing="1.100" transform="rotate(-4 308 645)">reek</text>
<text x="384.500" y="726" font-family="Liberation Sans, sans-serif" font-size="13" font-weight="bold" fill="#9aa58e">W</text>
</g>

<g shape-rendering="crispEdges" fill="none" stroke-width="4.4">
<path stroke="#f02e1e" d="M397 354h4M405 354h32M397 358h4M405 358h32M397 362h40M397 366h4M405 366h40M397 370h44M397 374h48M397 378h8M409 378h20M437 378h8M397 382h8M409 382h20M437 382h8M397 386h8M413 386h20M437 386h8M397 390h8M409 390h20M437 390h4M397 394h8M413 394h16M437 394h4M397 398h8M413 398h16M437 398h4M397 402h32M397 406h36M397 410h40M401 414h36M397 418h40M397 422h36M401 426h32M397 430h36M397 434h36M401 438h16M421 438h8M397 442h24M397 446h16M421 446h4M397 450h16M397 454h8M397 458h4M397 462h4M397 474h4M429 530h8M405 534h4M429 534h8M405 538h8M421 538h4M429 538h8M405 542h8M417 542h4M429 542h8M405 546h16M425 546h12M397 550h4M405 550h8M421 550h16M413 554h8M397 558h8M421 558h4M397 562h8M397 566h8M397 570h8M401 574h4M397 578h8M397 582h8M397 590h8M405 598h4M405 602h4M405 606h4M405 610h8M405 614h8M405 618h8M405 622h12M405 626h4M397 630h8M413 630h4M397 634h8M397 638h8M397 642h8M397 646h8M397 650h8M397 654h8M397 658h8M397 662h8M409 662h12M405 666h4M405 670h16M405 674h8M405 678h4M405 682h4M405 686h4M401 690h8M401 694h8M401 698h4M397 702h4M397 706h4M397 710h4M405 710h4M397 714h4M405 714h4M397 718h4M405 718h4M397 722h4M405 722h4M397 726h4M405 726h4M397 730h4M405 730h4M397 734h4M397 742h4M397 746h8M397 750h8M397 754h8M413 754h8M397 758h8M421 758h4M397 762h8M413 762h8M397 766h8M413 766h12M397 770h8M409 770h8M421 770h4M397 774h24M425 774h8M397 778h40M397 782h4M405 782h32M397 786h4M405 786h32M397 790h40M397 794h4M405 794h32M397 798h40M397 802h4M405 802h32M397 806h4M405 806h40M397 810h44M397 814h52M397 818h8M409 818h20M433 818h12M397 822h8M409 822h20M437 822h12M397 826h8M413 826h20M437 826h12M397 830h8M409 830h20M437 830h12M397 834h8M413 834h20M437 834h16M457 834h4M397 838h8M413 838h16M437 838h28M397 842h28M433 842h32M397 846h16M417 846h52M397 850h44M445 850h16M401 854h56M461 854h4M397 858h60M397 862h64M401 866h56M461 866h8M397 870h64M397 874h60M461 874h8M401 878h56M461 878h8"/>
<path stroke="#f2471c" d="M401 354h4M437 354h12M401 358h4M437 358h12M437 362h12M401 366h4M445 366h4M441 370h8M445 374h8M405 378h4M429 378h8M445 378h4M405 382h4M429 382h8M445 382h4M405 386h8M433 386h4M445 386h4M405 390h4M429 390h8M441 390h4M405 394h8M429 394h8M441 394h4M405 398h8M429 398h8M441 398h4M429 402h12M433 406h12M397 414h4M433 422h4M397 426h4M433 426h4M433 430h4M433 434h4M397 438h4M417 438h4M429 438h4M421 442h8M413 446h8M425 446h4M413 450h8M405 454h12M401 458h8M401 462h4M397 466h8M397 470h8M401 474h8M397 478h12M397 482h20M397 486h16M401 490h4M397 526h4M405 526h4M421 526h16M397 530h32M397 534h8M409 534h20M437 534h4M397 538h8M413 538h8M425 538h4M437 538h4M397 542h8M413 542h4M421 542h8M437 542h8M397 546h8M421 546h4M437 546h8M453 546h4M401 550h4M413 550h8M437 550h8M397 554h16M421 554h24M405 558h16M425 558h16M405 562h28M437 562h4M405 566h28M437 566h4M405 570h24M437 570h4M397 574h4M405 574h16M405 578h12M405 582h8M397 586h12M405 590h8M397 594h16M397 598h8M409 598h4M397 602h8M409 602h4M397 606h8M409 606h4M397 610h8M413 610h4M397 614h8M413 614h8M397 618h8M413 618h8M397 622h8M417 622h8M397 626h8M409 626h20M405 630h8M417 630h8M405 634h20M405 638h20M405 642h20M405 646h24M405 650h20M405 654h20M405 658h24M405 662h4M421 662h4M397 666h8M409 666h24M397 670h8M421 670h8M397 674h8M413 674h20M397 678h8M409 678h8M397 682h8M409 682h4M397 686h8M409 686h4M397 690h4M397 694h4M409 694h4M397 698h4M405 698h8M401 702h20M401 706h16M401 710h4M409 710h12M401 714h4M409 714h12M401 718h4M409 718h8M401 722h4M409 722h12M401 726h4M409 726h8M401 730h4M409 730h4M401 734h8M397 738h12M401 742h8M405 746h8M437 746h16M405 750h24M437 750h16M405 754h8M421 754h12M437 754h16M405 758h16M425 758h4M437 758h12M405 762h8M421 762h12M437 762h4M405 766h8M425 766h8M437 766h4M405 770h4M417 770h4M425 770h12M421 774h4M433 774h8M401 782h4M437 782h4M401 786h4M437 786h8M437 790h4M401 794h4M437 794h8M437 798h8M401 802h4M437 802h12M401 806h4M445 806h4M441 810h8M449 814h4M405 818h4M429 818h4M445 818h8M405 822h4M429 822h8M449 822h4M405 826h8M433 826h4M449 826h8M405 830h4M429 830h8M449 830h12M405 834h8M433 834h4M453 834h4M461 834h4M405 838h8M429 838h8M465 838h4M425 842h8M465 842h12M413 846h4M469 846h4M441 850h4M461 850h20M397 854h4M457 854h4M465 854h8M457 858h20M461 862h16M397 866h4M457 866h4M469 866h8M461 870h16M457 874h4M469 874h8M397 878h4M457 878h4M469 878h8"/>
<path stroke="#f5601a" d="M449 354h8M449 358h8M449 362h8M449 366h8M449 370h4M453 374h4M449 378h4M449 382h4M449 386h4M445 390h8M445 394h8M445 398h4M441 402h8M445 406h4M437 410h4M437 414h8M437 418h4M437 422h4M437 426h4M437 430h4M437 434h4M433 438h4M429 442h8M429 446h4M421 450h4M417 454h8M409 458h4M405 462h8M405 466h8M405 470h8M409 474h8M409 478h4M413 486h4M397 490h4M405 490h12M397 494h8M409 494h4M397 518h4M397 522h4M405 522h8M417 522h4M425 522h8M401 526h4M409 526h12M437 530h4M441 534h4M453 534h4M441 538h16M445 542h12M445 546h8M457 546h4M445 550h16M445 554h20M441 558h12M457 558h8M433 562h4M441 562h12M457 562h8M433 566h4M441 566h8M429 570h8M441 570h8M421 574h12M437 574h8M417 578h8M437 578h4M413 582h12M409 586h12M413 590h4M413 594h4M413 598h4M413 602h4M413 606h4M417 610h4M421 614h4M421 618h8M425 622h12M429 626h8M425 630h8M425 634h8M437 634h8M425 638h8M425 642h8M429 646h4M441 646h4M425 650h8M425 654h8M429 658h4M425 662h12M433 666h4M429 670h8M433 674h4M417 678h8M413 682h4M409 690h4M417 706h4M417 718h8M417 726h4M409 734h4M409 742h4M437 742h20M425 746h12M453 746h8M429 750h8M453 750h12M433 754h4M453 754h12M429 758h8M449 758h4M457 758h4M433 762h4M441 762h12M433 766h4M441 766h12M437 770h16M441 774h12M437 778h16M441 782h16M445 786h4M441 790h8M445 794h4M445 798h4M449 802h4M449 806h8M449 810h4M453 814h4M453 818h8M453 822h8M457 826h8M461 830h8M465 834h12M469 838h16M477 842h8M473 846h8M481 850h4M473 854h8M477 858h4M477 862h4M477 866h4M477 870h4M477 874h4M477 878h4"/>
<path stroke="#f88e1a" d="M457 354h4M457 358h4M457 362h4M457 366h8M461 370h4M461 374h4M461 378h4M461 382h4M461 386h4M461 390h4M461 394h8M465 398h4M453 402h4M461 402h8M457 406h12M449 410h8M453 414h4M449 418h4M445 422h8M449 426h4M445 430h8M445 434h8M445 438h8M441 442h4M441 446h4M433 450h8M433 454h12M429 458h20M421 462h28M425 466h16M445 466h12M421 470h40M421 474h40M417 478h4M429 478h12M449 478h4M421 482h32M417 486h4M429 486h24M421 490h4M429 490h12M445 490h8M421 494h20M449 494h4M417 498h4M429 498h12M449 498h4M405 502h8M417 502h24M449 502h12M405 506h32M449 506h4M457 506h4M405 510h16M425 510h12M449 510h4M457 510h4M405 514h8M421 514h12M449 514h12M413 518h8M433 518h4M445 518h16M437 522h16M457 522h4M449 526h4M457 526h4M457 530h8M461 534h4M465 538h4M465 542h12M469 546h12M473 550h8M469 554h12M469 558h16M469 562h16M469 566h20M453 570h4M469 570h12M485 570h4M453 574h4M469 574h16M453 578h4M469 578h12M429 582h8M449 582h8M469 582h12M489 582h4M425 586h4M441 586h20M469 586h16M489 586h4M421 590h4M469 590h28M489 594h4M417 598h4M489 598h4M417 602h4M421 606h4M425 610h4M429 614h4M441 622h12M453 626h4M445 630h20M453 634h4M465 634h4M449 638h8M465 638h4M449 642h8M465 642h4M453 646h4M465 646h8M449 650h8M461 650h16M445 654h4M457 654h20M465 658h8M441 662h4M469 662h20M441 670h4M445 674h8M433 678h8M417 682h4M413 686h4M413 690h4M417 698h4M421 706h4M421 710h4M425 726h4M417 730h12M425 734h4M453 734h12M425 738h8M461 738h4M465 742h4M473 742h4M413 746h12M469 746h12M477 750h4M477 754h4M477 758h4M477 762h4M469 766h8M453 770h4M465 770h12M457 774h20M461 778h12M461 782h12M457 786h16M457 790h16M457 794h16M457 798h16M457 802h20M457 806h20M461 810h8M473 810h20M469 814h20M473 822h4M489 822h4M489 826h4M489 830h4M489 834h4M489 842h4M489 846h4M489 850h8M485 854h4M493 854h4M485 858h4M493 858h4M485 862h4M493 862h4M493 866h4M493 870h4M493 874h4M493 878h4"/>
<path stroke="#f8a220" d="M461 354h8M461 358h8M461 362h8M465 366h4M465 370h4M465 374h4M465 378h4M465 382h4M465 386h4M465 390h4M469 402h4M457 410h8M457 414h4M453 418h4M453 422h4M453 426h4M453 430h4M453 434h4M445 442h4M445 446h4M441 450h4M445 454h4M449 458h4M449 462h12M457 466h4M453 478h8M453 482h4M453 486h4M441 490h4M453 490h4M441 494h8M453 494h8M445 498h4M453 498h8M445 502h4M461 502h4M437 506h4M445 506h4M453 506h4M461 506h4M437 510h4M445 510h4M453 510h4M461 510h4M433 514h4M445 514h4M461 514h4M437 518h8M461 518h4M461 522h4M461 526h4M465 530h4M465 534h4M469 538h12M477 542h8M481 546h4M481 550h8M481 554h4M485 558h4M485 562h4M489 570h8M489 574h12M489 578h12M493 582h8M429 586h8M493 586h8M425 590h24M457 590h12M497 590h4M421 594h8M465 594h24M493 594h8M469 598h20M493 598h8M425 606h4M433 614h4M437 618h8M453 622h8M457 626h12M465 630h4M469 634h4M469 638h8M469 642h12M473 646h8M477 650h4M449 654h8M477 654h8M445 658h20M473 658h16M461 662h8M489 662h12M445 666h8M445 670h8M453 674h4M441 678h8M421 682h8M417 694h4M425 714h4M465 714h4M473 714h4M425 718h4M461 718h16M425 722h4M461 722h16M461 726h12M457 730h16M429 734h4M449 734h4M465 734h4M473 734h4M465 738h8M469 742h4M477 742h4M481 746h4M481 750h4M481 754h4M481 758h4M481 762h4M477 766h8M477 770h4M477 774h4M473 778h8M473 782h8M473 786h4M473 790h4M473 794h4M473 798h4M477 802h4M489 802h4M477 806h16M489 814h4M489 818h8M493 822h8M493 826h8M493 830h8M493 834h4M489 838h8M493 842h4M493 846h4M497 870h4"/>
<path stroke="#f9b626" d="M469 354h4M469 358h4M469 362h4M469 366h4M469 370h4M469 374h4M469 378h4M469 382h4M469 386h4M469 390h4M469 394h4M469 398h4M473 402h4M469 406h4M465 410h4M461 414h4M457 418h4M457 422h4M453 438h4M449 442h8M449 446h4M445 450h4M449 454h4M453 458h8M461 462h4M461 466h4M461 470h4M461 474h4M461 478h4M457 482h4M457 486h4M457 490h4M461 494h4M441 498h4M461 498h4M441 502h4M441 506h4M441 510h4M437 514h8M465 522h4M465 526h4M469 530h4M469 534h16M481 538h12M485 542h8M485 546h8M489 550h4M485 554h4M489 566h12M497 570h4M501 578h4M501 582h4M501 586h4M449 590h8M501 590h4M429 594h20M421 598h4M421 602h4M469 602h16M489 602h4M429 606h4M429 610h4M445 618h8M461 622h4M469 626h4M469 630h8M473 634h8M477 638h4M481 642h4M481 646h4M481 650h8M485 654h4M489 658h12M453 662h8M501 662h4M453 666h4M465 666h8M481 666h12M453 670h4M449 678h4M429 682h8M417 686h4M421 698h4M421 702h4M425 710h4M461 714h4M469 714h4M457 718h4M457 722h4M477 722h4M457 726h4M473 726h4M453 730h4M473 730h4M433 734h16M469 734h4M477 734h4M473 738h8M481 742h4M485 746h4M485 750h4M485 754h4M485 758h4M485 762h4M485 766h4M481 770h8M481 774h4M481 778h4M481 782h4M477 786h4M477 790h4M477 794h4M477 798h4M489 798h4M481 802h8M493 802h4M493 806h4M493 810h8M493 814h8M497 818h8M501 822h4M501 826h4M501 830h4M497 834h8M497 838h8M497 842h8M497 850h8M497 854h4M497 858h4M497 862h4M497 866h4M497 874h4M497 878h4"/>
<path stroke="#f6c42e" d="M473 354h4M473 358h4M473 362h4M473 366h4M473 370h8M473 374h4M473 378h8M473 382h8M473 386h4M473 390h8M473 394h8M473 398h8M477 402h8M473 406h4M469 410h4M465 414h4M461 418h4M457 426h4M457 430h4M457 434h4M457 438h4M457 442h4M453 446h4M449 450h4M453 454h8M461 458h4M465 462h4M465 466h8M465 470h8M465 474h4M465 478h8M461 482h4M473 482h4M461 486h12M461 490h4M473 494h4M469 498h4M473 502h4M505 506h4M465 510h4M505 510h4M497 514h8M465 518h8M469 522h8M497 522h4M469 526h16M489 526h8M473 530h28M485 534h20M493 538h20M493 542h24M493 546h24M493 550h28M489 554h16M509 554h8M521 554h4M533 554h16M489 558h12M505 558h4M541 558h8M489 562h20M521 562h4M541 562h8M501 566h8M521 566h4M541 566h4M501 570h12M521 570h12M541 570h4M501 574h12M521 574h4M505 578h8M521 578h4M505 582h8M505 586h8M505 590h4M449 594h8M461 594h4M501 594h4M425 598h12M465 598h4M501 598h4M425 602h12M485 602h4M493 602h8M433 606h4M433 610h4M437 614h8M453 618h4M465 622h8M473 626h4M477 630h4M481 634h4M481 638h4M485 642h4M485 646h4M501 650h8M489 654h20M501 658h12M525 658h4M445 662h8M505 662h4M513 662h12M457 666h8M473 666h8M493 666h28M525 666h8M457 670h4M501 670h20M457 674h4M505 674h16M437 682h4M421 686h4M457 714h4M477 714h4M477 718h4M453 722h4M453 726h4M477 726h8M477 730h8M413 734h8M481 734h4M481 738h4M413 742h8M485 742h4M485 774h8M485 778h12M489 782h8M481 786h4M489 786h8M481 790h4M489 790h8M481 794h4M489 794h8M481 798h8M493 798h8M497 802h8M497 806h8M501 810h4M501 814h4M497 846h8M501 854h4M501 858h4M501 862h4M501 866h4M501 870h4M501 874h4M501 878h4"/>
<path stroke="#f4d236" d="M477 354h4M477 358h4M477 362h4M477 366h4M481 370h4M477 374h8M481 378h8M481 382h8M477 386h12M481 390h8M481 394h8M481 398h8M485 402h4M477 406h12M473 410h4M461 422h4M461 426h4M461 430h4M461 434h4M461 438h4M457 446h8M453 450h8M461 454h8M465 458h8M469 462h16M473 466h12M473 470h12M469 474h16M473 478h16M465 482h8M477 482h12M473 486h24M465 490h36M465 494h8M477 494h32M465 498h4M473 498h40M465 502h8M477 502h36M465 506h40M509 506h4M469 510h8M485 510h20M509 510h4M465 514h12M485 514h12M505 514h8M485 518h28M477 522h20M501 522h4M485 526h4M497 526h8M501 530h12M505 534h12M513 538h8M517 542h12M537 542h4M517 546h24M521 550h28M505 554h4M517 554h4M525 554h8M549 554h4M501 558h4M509 558h32M549 558h8M509 562h12M525 562h16M549 562h4M509 566h12M525 566h16M545 566h8M513 570h8M533 570h8M545 570h4M513 574h8M525 574h12M541 574h8M513 578h8M525 578h8M513 582h16M513 586h12M509 590h8M457 594h4M505 594h8M437 598h12M465 602h4M437 606h8M469 606h8M437 610h4M445 614h8M457 618h8M473 622h4M481 630h4M485 634h4M485 638h4M505 642h4M489 646h4M501 646h16M521 646h12M489 650h12M509 650h24M509 654h24M513 658h12M529 658h8M541 658h4M509 662h4M525 662h8M537 662h8M521 666h4M533 666h8M461 670h8M473 670h28M521 670h16M501 674h4M521 674h16M453 678h4M505 678h20M441 682h4M425 686h8M417 690h4M421 694h4M425 706h4M461 710h8M429 714h4M453 714h4M429 718h4M453 718h4M481 718h4M429 722h4M481 722h4M429 730h4M449 730h4M485 730h8M485 734h8M485 738h8M421 742h4M489 746h4M489 750h4M521 754h4M505 758h4M521 758h4M489 770h4M493 774h12M497 778h8M485 782h4M497 782h8M485 786h4M497 786h8M485 790h4M497 790h8M485 794h4M497 794h8M501 798h4"/>
<path stroke="#edd659" d="M481 354h4M489 354h4M481 358h4M489 358h4M481 362h4M489 362h4M481 366h4M489 366h4M485 370h8M485 374h4M489 398h4M489 402h12M489 406h4M477 410h8M489 410h12M469 414h4M509 414h4M465 418h4M509 418h8M513 422h8M465 426h4M461 442h4M465 446h4M461 450h8M469 454h4M473 458h12M485 462h4M485 466h4M485 470h8M485 474h8M489 478h4M489 482h12M497 486h4M501 490h4M509 494h8M513 498h4M513 502h4M513 506h4M477 510h8M513 510h4M477 514h8M513 514h4M473 518h12M513 518h4M505 522h8M505 526h8M513 530h4M517 534h8M521 538h20M529 542h8M541 546h12M549 550h8M553 554h8M553 562h4M553 566h4M549 570h4M537 574h4M533 578h16M529 582h8M541 582h4M525 586h8M517 590h4M513 594h4M449 598h16M505 598h8M437 602h16M501 602h4M445 606h8M465 606h4M477 606h8M489 606h4M441 610h12M453 614h4M465 618h12M477 622h4M477 626h4M529 626h4M505 634h12M521 634h8M501 638h32M489 642h4M501 642h4M509 642h24M541 642h4M493 646h8M517 646h4M533 646h16M533 650h16M533 654h16M537 658h4M545 658h8M533 662h4M545 662h8M541 666h12M469 670h4M537 670h8M461 674h8M489 674h12M537 674h4M457 678h4M525 678h16M445 682h8M509 682h28M433 686h4M529 686h8M421 690h4M425 698h4M425 702h4M429 710h4M453 710h8M469 710h8M481 714h4M449 718h4M485 718h4M449 722h4M485 722h4M429 726h4M449 726h4M485 726h8M433 730h16M493 730h4M421 734h4M493 734h8M493 738h4M489 742h4M505 750h8M521 750h4M489 754h4M505 754h16M525 754h8M489 758h4M509 758h12M525 758h12M489 762h4M505 762h28M489 766h4M521 766h12M493 770h8"/>
<path stroke="#e6da7c" d="M485 354h4M485 358h4M493 358h4M485 362h4M493 362h4M485 366h4M493 366h4M493 370h4M489 374h4M489 378h8M489 382h8M489 386h8M489 390h12M489 394h12M493 398h8M501 402h4M493 406h20M485 410h4M501 410h16M473 414h8M489 414h20M513 414h8M469 418h4M497 418h12M517 418h8M533 418h4M465 422h4M501 422h12M521 422h4M529 422h8M509 426h28M465 430h4M509 430h12M533 430h4M465 434h4M513 434h8M533 434h8M465 438h4M533 438h4M465 442h4M469 446h4M469 450h12M473 454h12M485 458h4M489 462h4M489 466h4M493 470h4M493 474h4M493 478h4M501 482h4M501 486h8M505 490h8M517 494h4M517 498h4M517 502h4M517 506h4M517 510h4M517 514h4M513 522h4M513 526h8M517 530h4M525 530h4M525 534h16M541 542h16M553 546h8M557 550h8M561 554h4M557 558h8M557 562h4M557 566h4M553 570h4M549 574h4M549 578h4M537 582h4M545 582h4M533 586h12M521 590h8M517 594h8M513 598h4M453 602h12M505 602h8M453 606h12M485 606h4M493 606h4M453 610h4M469 610h8M457 614h20M477 618h4M481 622h4M529 622h12M481 626h4M521 626h8M533 626h8M485 630h4M513 630h20M537 630h8M489 634h4M501 634h4M517 634h4M529 634h20M489 638h4M497 638h4M533 638h20M493 642h8M533 642h8M545 642h4M549 646h4M549 650h4M549 654h4M553 658h4M553 662h8M553 666h4M545 670h4M469 674h20M541 674h8M461 678h4M501 678h4M541 678h4M453 682h4M505 682h4M537 682h8M437 686h4M513 686h16M537 686h4M425 690h4M521 690h16M425 694h4M429 706h4M457 706h12M477 710h4M433 714h4M449 714h4M485 714h4M433 718h4M441 718h8M489 718h4M433 722h12M489 722h4M433 726h4M441 726h8M493 726h4M497 730h4M421 738h4M497 738h4M525 738h8M493 742h12M517 742h8M541 742h4M501 746h36M541 746h8M501 750h4M513 750h8M525 750h12M541 750h8M501 754h4M533 754h16M501 758h4M537 758h12M533 762h20M493 766h8M505 766h16M533 766h20M505 770h52"/>
<path stroke="#ccdc9d" d="M493 354h4M497 366h4M497 370h4M493 374h8M497 378h4M497 382h4M497 386h8M501 390h4M501 394h4M501 398h8M505 402h4M513 406h4M517 410h4M481 414h8M521 414h16M473 418h8M489 418h8M525 418h8M537 418h4M469 422h8M493 422h8M525 422h4M537 422h4M469 426h4M505 426h4M537 426h4M469 430h4M505 430h4M521 430h12M537 430h4M469 434h4M509 434h4M521 434h12M469 438h4M509 438h24M537 438h4M469 442h12M517 442h8M537 442h4M473 446h4M525 446h12M481 450h4M485 454h4M489 458h4M493 462h4M493 466h4M497 474h4M497 478h4M509 486h4M513 490h4M521 494h4M521 498h4M521 502h4M521 506h4M521 510h4M521 514h4M517 518h4M525 518h4M517 522h12M521 526h12M549 526h8M521 530h4M529 530h12M545 530h12M541 534h24M541 538h28M557 542h12M561 546h8M565 550h4M565 554h4M565 558h4M561 562h8M561 566h4M557 570h4M553 574h4M553 578h4M549 582h4M545 586h4M529 590h8M525 594h8M517 598h4M513 602h4M497 606h12M457 610h12M477 610h8M477 614h4M529 618h12M517 622h12M541 622h4M485 626h4M509 626h12M541 626h8M489 630h4M501 630h12M533 630h4M545 630h4M549 634h4M493 638h4M549 642h4M553 646h4M553 650h4M553 654h4M557 658h4M549 670h4M549 674h4M465 678h4M489 678h12M545 678h4M457 682h4M545 682h4M441 686h8M509 686h4M541 686h8M429 690h8M517 690h4M537 690h8M429 694h8M429 698h4M429 702h4M433 706h4M453 706h4M469 706h4M433 710h4M449 710h4M481 710h4M437 714h12M437 718h4M445 722h4M493 722h4M437 726h4M497 726h4M501 734h4M513 734h36M413 738h8M501 738h24M533 738h24M505 742h12M525 742h16M545 742h8M537 746h4M549 746h4M537 750h4M549 750h4M549 754h12M549 758h16M493 762h4M501 762h4M553 762h12M501 766h4M553 766h12M501 770h4M557 770h4"/>
<path stroke="#b2debe" d="M497 354h4M497 358h4M497 362h4M501 366h4M501 370h4M501 374h4M501 378h4M501 382h8M505 386h4M505 390h4M505 394h4M509 398h4M509 402h8M517 406h12M521 410h8M537 414h4M481 418h8M477 422h8M489 422h4M473 426h4M493 426h4M501 426h4M541 426h4M473 430h4M541 430h4M473 434h4M505 434h4M541 434h4M473 438h4M541 438h4M481 442h4M509 442h8M525 442h12M541 442h4M477 446h8M509 446h16M537 446h8M485 450h4M517 450h16M537 450h4M489 454h4M493 458h4M497 462h4M497 466h4M497 470h4M501 474h4M501 478h4M505 482h4M513 486h4M517 490h8M525 498h8M525 502h4M525 506h4M525 510h8M525 514h4M521 518h4M529 518h4M549 518h8M529 522h12M545 522h20M533 526h16M557 526h12M541 530h4M557 530h12M565 534h8M569 538h4M569 542h4M569 546h4M569 550h4M569 554h4M569 558h4M569 562h4M565 566h4M561 570h4M557 574h4M557 578h4M553 582h4M549 586h4M537 590h8M533 594h8M521 598h4M517 602h4M509 606h4M485 610h12M505 610h4M481 614h4M481 618h4M513 618h16M541 618h4M485 622h4M513 622h4M545 622h4M489 626h4M505 626h4M549 626h4M493 630h8M549 630h4M493 634h8M553 634h4M553 638h4M553 642h4M557 650h4M557 654h8M561 658h4M561 662h4M557 666h4M553 670h8M553 674h4M469 678h20M549 678h4M461 682h4M501 682h4M449 686h4M505 686h4M437 690h4M509 690h8M545 690h4M437 694h4M517 694h24M433 698h4M433 702h4M453 702h12M441 706h4M449 706h4M473 706h4M437 710h12M485 710h4M489 714h4M493 718h4M497 722h8M501 726h4M501 730h4M509 734h4M549 734h12M553 742h4M493 746h8M553 746h4M553 750h8M493 754h8M561 754h4M493 758h8M565 758h4M497 762h4M565 762h4M565 766h4M561 770h8"/>
<path stroke="#8fd7ce" d="M501 354h16M501 358h16M501 362h16M505 366h12M505 370h4M505 374h8M505 378h4M509 386h4M509 394h4M513 398h4M521 398h4M517 402h12M529 406h8M529 410h12M541 418h4M485 422h4M541 422h4M477 426h16M497 426h4M545 426h4M477 430h8M489 430h16M545 430h4M477 434h4M545 434h4M477 438h4M505 438h4M545 438h4M485 442h4M505 442h4M485 446h4M505 446h4M545 446h4M509 450h8M533 450h4M541 450h4M493 454h4M497 458h4M505 478h4M509 482h4M517 486h4M525 494h8M533 498h4M529 502h4M529 506h8M533 510h4M549 510h4M529 514h8M549 514h4M533 518h4M545 518h4M541 522h4M565 522h4M569 526h4M569 530h8M573 534h4M573 538h4M573 542h4M573 546h4M573 550h4M569 566h4M565 570h4M561 574h8M561 578h8M557 582h8M553 586h4M545 590h8M541 594h4M525 598h12M513 606h4M497 610h8M509 610h8M485 614h8M505 614h28M485 618h8M509 618h4M545 618h4M489 622h4M505 622h8M549 622h4M553 626h4M553 630h4M557 634h4M557 638h4M557 642h8M557 646h8M561 650h4M565 654h4M565 662h4M561 666h4M553 678h4M465 682h4M473 682h4M493 682h8M549 682h4M453 686h8M549 686h4M441 690h4M505 690h4M513 694h4M541 694h4M437 698h8M449 698h4M457 698h4M521 698h12M437 702h4M465 702h4M437 706h4M445 706h4M477 706h8M489 710h4M493 714h4M505 726h4M505 730h52M505 734h4M557 742h4M557 746h4M493 750h8M561 750h4M565 754h4M569 758h4M569 762h4M569 766h4"/>
<path stroke="#6cd0de" d="M517 354h8M517 358h4M517 362h4M517 366h8M509 370h12M513 374h4M521 374h4M509 378h8M521 378h4M509 382h8M521 382h4M513 386h4M521 386h4M509 390h4M513 394h16M517 398h4M525 398h8M529 402h4M537 406h4M541 410h4M541 414h8M545 418h4M545 422h8M549 426h4M485 430h4M549 430h4M481 434h16M501 434h4M549 434h4M481 438h16M549 438h8M489 442h16M545 442h4M489 446h4M549 446h4M489 450h8M505 450h4M545 450h8M497 454h4M525 454h4M501 462h4M501 466h4M501 470h8M505 474h4M509 478h4M513 482h8M521 486h4M525 490h8M533 494h4M533 502h4M549 506h4M553 510h4M537 514h12M553 514h12M537 518h8M557 518h12M569 522h8M573 526h4M577 538h4M577 542h4M577 546h4M577 550h4M573 554h4M573 558h8M573 562h4M569 570h4M569 574h4M569 578h4M565 582h8M557 586h12M553 590h8M545 594h8M537 598h4M521 602h8M517 606h4M517 610h4M493 614h4M501 614h4M533 614h8M493 618h4M505 618h4M549 618h4M493 622h4M553 622h4M493 626h4M501 626h4M557 630h8M561 634h4M561 638h8M565 642h4M565 646h8M565 650h8M569 654h4M565 658h8M569 662h4M561 670h4M557 674h4M557 678h4M469 682h4M477 682h16M553 682h8M461 686h4M501 686h4M553 686h4M445 690h8M549 690h4M441 694h20M505 694h8M545 694h4M445 698h4M453 698h4M461 698h8M513 698h8M533 698h12M441 702h4M449 702h4M469 702h8M485 706h4M497 718h4M505 722h4M509 726h4M557 730h4M561 734h4M557 738h8M561 742h4M561 746h8M565 750h8M569 754h4M569 770h4"/>
<path stroke="#7faae0" d="M525 354h16M521 358h20M521 362h20M525 366h16M521 370h8M517 374h4M525 374h4M517 378h4M525 378h4M517 382h4M525 382h4M517 386h4M525 386h8M513 390h16M529 394h4M533 398h4M541 398h4M533 402h12M541 406h8M545 410h4M549 414h4M549 418h8M553 422h4M553 426h4M553 430h4M497 434h4M553 434h8M497 438h8M549 442h12M493 446h4M553 446h4M497 450h8M553 450h4M501 454h4M509 454h16M529 454h20M505 466h4M509 474h4M513 478h4M521 482h4M525 486h8M533 490h4M537 494h8M537 498h8M537 502h16M537 506h12M553 506h4M537 510h12M557 510h4M565 514h4M569 518h8M577 522h4M577 526h4M577 530h4M577 534h8M581 538h4M581 542h4M581 546h4M581 550h4M577 554h8M581 558h4M577 562h8M573 566h8M573 570h8M573 574h4M573 578h8M573 582h8M569 586h4M561 590h8M553 594h8M541 598h8M529 602h12M521 606h4M521 610h4M497 614h4M541 614h8M497 618h8M553 618h4M497 622h8M557 622h4M497 626h4M557 626h4M565 630h4M565 634h8M569 638h4M569 642h4M573 650h4M573 654h4M573 658h4M573 662h4M565 666h8M565 670h4M561 674h4M561 678h4M561 682h4M465 686h12M557 686h4M453 690h8M553 690h4M461 694h4M549 694h4M581 694h4M469 698h4M505 698h8M545 698h12M445 702h4M477 702h4M517 702h12M489 706h4M493 710h4M497 714h4M501 718h8M509 722h4M513 726h8M525 726h4M537 726h4M549 726h8M561 730h4M565 734h4M565 738h4M565 742h8M569 746h4M573 754h4M573 758h8M573 762h8M573 766h8M573 770h8"/>
<path stroke="#9284e2" d="M541 354h4M541 358h4M541 362h4M529 370h16M529 374h16M529 378h8M541 378h4M529 382h8M541 382h4M533 386h4M541 386h4M529 390h8M541 390h4M533 394h16M537 398h4M545 398h4M545 402h4M549 406h4M549 410h4M553 414h4M557 418h4M557 422h4M557 426h4M557 430h4M557 438h4M561 442h4M497 446h8M557 446h4M557 450h8M505 454h4M549 454h8M501 458h4M505 462h4M509 466h4M509 470h8M513 474h8M517 478h12M525 482h4M533 486h4M537 490h8M545 494h4M545 498h12M553 502h8M557 506h4M561 510h8M569 514h16M577 518h4M581 522h8M581 526h8M581 530h8M585 534h4M585 538h4M585 542h4M585 546h4M585 550h8M585 554h4M585 558h8M585 562h8M581 566h12M581 570h4M577 574h12M581 578h12M581 582h12M573 586h20M569 590h24M561 594h4M573 594h4M549 598h12M541 602h4M525 606h12M525 610h16M549 614h8M557 618h4M561 622h4M561 626h8M569 630h4M573 634h4M573 638h4M573 642h12M573 646h8M577 650h12M577 654h12M577 658h4M577 662h12M573 666h8M569 670h16M565 674h16M565 678h16M565 682h20M477 686h24M561 686h8M573 686h12M589 686h8M461 690h4M501 690h4M557 690h8M573 690h24M465 694h12M501 694h4M553 694h28M585 694h12M473 698h8M565 698h20M589 698h8M481 702h8M509 702h8M529 702h16M557 702h32M493 706h4M525 706h8M569 706h8M497 710h4M501 714h4M509 718h4M513 722h4M521 726h4M529 726h8M541 726h8M557 726h8M565 730h4M569 738h4M573 746h4M573 750h8M577 754h8M581 758h4M581 762h4M581 766h4M581 770h4"/>
<path stroke="#8153dc" d="M545 354h16M545 358h16M573 358h4M545 362h12M573 362h4M541 366h16M545 370h4M545 374h8M537 378h4M545 378h4M565 378h8M537 382h4M545 382h4M565 382h8M537 386h4M545 386h8M569 386h4M537 390h4M545 390h4M565 390h8M549 394h4M569 394h4M549 398h8M569 398h4M549 402h8M565 402h4M553 406h4M553 410h12M577 410h4M601 410h4M557 414h4M593 414h8M593 418h8M561 422h4M577 422h4M597 422h8M561 426h4M593 426h4M561 430h4M597 430h8M561 434h4M593 434h12M561 438h4M593 438h4M565 442h4M577 442h12M561 446h8M609 446h4M565 450h8M557 454h12M505 458h8M525 458h4M549 458h4M509 462h8M561 462h4M513 466h8M517 470h12M521 474h8M561 474h4M529 478h4M549 478h8M609 478h4M529 482h4M537 482h4M557 482h4M581 482h4M537 486h20M545 490h8M549 494h4M589 498h4M561 502h12M577 502h8M589 502h4M561 506h32M569 510h24M585 514h8M605 514h4M581 518h16M589 522h12M589 526h12M589 530h12M589 534h12M589 538h12M589 542h12M589 546h12M593 550h12M589 554h12M605 554h4M593 558h4M593 562h4M593 566h4M585 570h8M589 574h4M593 578h4M593 582h4M593 586h8M605 586h4M593 590h12M565 594h8M577 594h28M561 598h8M573 598h32M545 602h20M573 602h12M593 602h12M537 606h4M573 606h4M593 606h8M541 610h8M553 610h4M573 610h4M597 610h8M557 614h4M593 614h8M561 618h4M573 618h4M593 618h8M565 622h4M573 622h8M601 622h4M569 626h8M573 630h16M577 634h12M577 638h16M585 642h8M581 646h12M589 650h4M589 654h4M581 658h12M589 662h4M581 666h16M609 666h4M585 670h20M581 674h24M581 678h24M585 682h24M569 686h4M585 686h4M597 686h12M465 690h12M565 690h8M597 690h12M477 694h12M493 694h8M597 694h12M481 698h12M501 698h4M557 698h8M585 698h4M597 698h8M609 698h4M489 702h20M545 702h12M589 702h20M497 706h28M533 706h36M577 706h24M609 706h4M501 710h4M525 710h4M537 710h4M549 710h4M557 710h40M569 714h20M513 718h4M573 718h4M565 726h4M569 730h8M569 734h4M573 738h4M609 738h4M573 742h12M605 742h4M577 746h4M589 746h4M605 746h8M581 750h4M589 750h4M605 750h8M585 754h8M605 754h4M585 758h8M585 762h8M605 762h4M585 766h8M585 770h8"/>
<path stroke="#7022d6" d="M561 354h52M561 358h12M577 358h36M557 362h16M577 362h36M557 366h56M549 370h64M553 374h60M549 378h16M573 378h40M549 382h16M573 382h40M553 386h16M573 386h40M549 390h16M573 390h40M553 394h16M573 394h40M557 398h12M573 398h40M557 402h8M569 402h44M557 406h56M565 410h12M581 410h20M605 410h8M561 414h32M601 414h12M561 418h32M601 418h12M565 422h12M581 422h16M605 422h8M565 426h28M597 426h16M565 430h32M605 430h8M565 434h28M605 434h8M565 438h28M597 438h16M569 442h8M589 442h24M569 446h40M573 450h40M569 454h44M513 458h12M529 458h20M553 458h60M517 462h44M565 462h48M521 466h92M529 470h84M529 474h32M565 474h48M533 478h16M557 478h52M533 482h4M541 482h16M561 482h20M585 482h28M557 486h56M553 490h60M553 494h60M557 498h32M593 498h20M573 502h4M585 502h4M593 502h20M593 506h20M593 510h20M593 514h12M609 514h4M597 518h16M601 522h12M601 526h12M601 530h12M601 534h12M601 538h12M601 542h12M601 546h12M605 550h8M601 554h4M609 554h4M597 558h16M597 562h16M597 566h16M593 570h20M593 574h20M597 578h16M597 582h16M601 586h4M609 586h4M605 590h8M605 594h8M569 598h4M605 598h8M565 602h8M585 602h8M605 602h8M541 606h32M577 606h16M601 606h12M549 610h4M557 610h16M577 610h20M605 610h8M561 614h32M601 614h12M565 618h8M577 618h16M601 618h12M569 622h4M581 622h20M605 622h8M577 626h36M589 630h24M589 634h24M593 638h20M593 642h20M593 646h20M593 650h20M593 654h20M593 658h20M593 662h20M597 666h12M605 670h8M605 674h8M605 678h8M609 682h4M609 686h4M477 690h24M609 690h4M489 694h4M609 694h4M493 698h8M605 698h4M609 702h4M601 706h8M505 710h20M529 710h8M541 710h8M553 710h4M597 710h16M505 714h64M589 714h24M517 718h56M577 718h36M517 722h96M569 726h44M577 730h36M573 734h40M577 738h32M585 742h20M609 742h4M581 746h8M593 746h12M585 750h4M593 750h12M593 754h12M609 754h4M593 758h20M593 762h12M609 762h4M593 766h20M593 770h20"/>
<path stroke="#f6771a" d="M453 370h8M457 374h4M453 378h8M453 382h8M453 386h8M453 390h8M453 394h8M449 398h16M449 402h4M457 402h4M449 406h8M441 410h8M445 414h8M441 418h8M441 422h4M441 426h8M441 430h4M441 434h4M437 438h8M437 442h4M433 446h8M425 450h8M425 454h8M413 458h16M413 462h8M413 466h12M441 466h4M413 470h8M417 474h4M413 478h4M421 478h8M441 478h8M417 482h4M421 486h8M417 490h4M425 490h4M405 494h4M413 494h8M397 498h20M421 498h8M397 502h8M413 502h4M397 506h8M397 510h8M421 510h4M397 514h8M413 514h8M401 518h12M421 518h12M401 522h4M413 522h4M421 522h4M433 522h4M453 522h4M437 526h12M453 526h4M441 530h16M445 534h8M457 534h4M457 538h8M457 542h8M461 546h8M461 550h12M465 554h4M453 558h4M465 558h4M453 562h4M465 562h4M449 566h20M449 570h4M457 570h12M481 570h4M433 574h4M445 574h8M457 574h12M485 574h4M425 578h12M441 578h12M457 578h12M481 578h8M425 582h4M437 582h12M457 582h12M481 582h8M421 586h4M437 586h4M461 586h8M485 586h4M417 590h4M417 594h4M417 606h4M421 610h4M425 614h4M429 618h8M437 622h4M437 626h16M433 630h12M433 634h4M445 634h8M457 634h8M433 638h16M457 638h8M433 642h16M457 642h8M433 646h8M445 646h8M457 646h8M433 650h16M457 650h4M433 654h12M433 658h12M437 662h4M437 666h8M437 670h4M437 674h8M425 678h8M413 694h4M413 698h4M421 714h4M421 722h4M421 726h4M413 730h4M409 738h4M433 738h28M425 742h12M457 742h8M461 746h8M465 750h12M465 754h12M453 758h4M461 758h16M453 762h24M453 766h16M457 770h8M453 774h4M453 778h8M457 782h4M449 786h8M449 790h8M449 794h8M449 798h8M453 802h4M453 810h8M469 810h4M457 814h12M461 818h28M461 822h12M477 822h12M465 826h24M469 830h20M477 834h12M485 838h4M485 842h4M481 846h8M485 850h4M481 854h4M489 854h4M481 858h4M489 858h4M481 862h4M489 862h4M481 866h12M481 870h12M481 874h12M481 878h12"/>
</g>
<defs>
<path id="d2c" d="M445 354h0m2 2h0m9 2h0m-4 11h0m-1 3h0m2 4h0m-7 11h0m5 13h0m-7 5h0m1 12h0m-10 7h0m3-2h0m3-1h0m-2 11h0m5 1h0m-11 8h0m-10 4h0m1 4h0m10-2h0m-4 5h0m-20 12h0m3 3h0m2-3h0m-1 9h0m0 1h0m-10 17h0m7-5h0m2 5h0m-12 6h0m2-3h0m13 1h0m5 25h0m-9 3h0m20 0h0m-18 5h0m31 11h0m9 1h0m0 5h0m-10 11h0m12-2h0m6-2h0m1 5h0m-22 4h0m12-1h0m9 1h0m4 0h0m-22 8h0m-21 2h0m19 1h0m1 3h0m16-4h0m-47 31h0m10 10h0m3 6h0m2 1h0m5 9h0m-5 13h0m8-4h0m-4 13h0m-2 8h0m4-1h0m2 0h0m-3 7h0m9 0h0m-29 29h0m8 8h0m-1 3h0m1 13h0m1 4h0m2 6h0m24 16h0m3 0h0m-4 2h0m-14 7h0m35 0h0m-22 5h0m20-1h0m-23 9h0m-1 3h0m1 3h0m5 1h0m5-1h0m-6 11h0m1 4h0m3 11h0m-6 1h0m3 10h0m7 1h0m2 7h0m15 15h0m6 3h0m3 2h0m-8 8h0m10-2h0m0 30h0"/>
<path id="d3c" d="M458 360h0m4 0h0m-7 13h0m-1 16h0m-4 17h0m6-4h0m-4 10h0m-10 13h0m6-1h0m0 4h0m-9 11h0m-4 5h0m-18 17h0m4 0h0m2-3h0m4-1h0m7 3h0m2-3h0m-17 8h0m7 11h0m11 2h0m-10 6h0m-6 7h0m-16 6h0m15-3h0m17-1h0m16 0h0m-53 8h0m20 1h0m9 2h0m-29 8h0m4-1h0m-2 6h0m9-1h0m3 4h0m4 1h0m34 7h0m-4 7h0m8 7h0m5 3h0m1-5h0m5 18h0m-29 10h0m28 1h0m13-1h0m-50 7h0m12 0h0m21-1h0m3 0h0m4 1h0m3-3h0m4 0h0m-45 6h0m3 0h0m25 1h0m4 1h0m6-1h0m2 0h0m-43 3h0m33 1h0m-44 5h0m72 0h0m-54 36h0m11 11h0m5-4h0m-11 15h0m2 0h0m4-4h0m-5 7h0m-7 11h0m-12 51h0m2 14h0m0-1h0m-16 14h0m20 1h0m17-1h0m9 0h0m6 3h0m-41 7h0m8-2h0m33-2h0m11 9h0m1 2h0m1-4h0m-14 5h0m2 3h0m14 0h0m-18 7h0m-9 12h0m4-3h0m-2 6h0m18-1h0m-14 9h0m3 0h0m4 1h0m8 5h0m-15 11h0m5-2h0m4 5h0m-6 3h0m6 3h0m4 0h0m24 12h0m-14 1h0m3 3h0m-10 3h0m19 5h0m1 20h0m-2 19h0"/>
<path id="d15c" d="M533 355h0m2 3h0m-1 3h0m-6 12h0m2 22h0m6-4h0m-3 6h0m6 4h0m5 1h0m9 15h0m-52 17h0m57 1h0m-62 8h0m59-1h0m8 1h0m-73 2h0m13 4h0m53-4h0m-22 8h0m-19 22h0m9 3h0m23 21h0m0 2h0m0 4h0m-4 8h0m23 2h0m12 20h0m3 16h0m-13 21h0m5-1h0m8 0h0m-18 15h0m14 1h0m3-5h0m-24 11h0m35-3h0m-66 15h0m17-3h0m-20 8h0m-32 6h0m7-1h0m22-3h0m-17 10h0m57-1h0m0 1h0m9 15h0m3 5h0m-1 22h0m-2 3h0m4 0h0m4 3h0m-10 3h0m-78 10h0m-34 6h0m16-3h0m3 0h0m85 1h0m-99 3h0m94 4h0m-76 7h0m33-3h0m18 5h0m-34 5h0m19 15h0m18 3h0m13 1h0m4 0h0m16 16h0m6-5h0m0 4h0m2 6h0"/>
<path id="d12c" d="M494 354h0m10 37h0m0 4h0m7-4h0m2 10h0m19 9h0m0 3h0m4-4h0m-60 16h0m3-2h0m0 5h0m15-1h0m8 1h0m-31 7h0m3 1h0m1-4h0m4 9h0m4 1h0m27-2h0m4-2h0m26 1h0m-57 10h0m27-3h0m-15 10h0m16 27h0m14 26h0m3-4h0m4 4h0m-2 4h0m-4 4h0m31 3h0m-13 7h0m8 0h0m11-3h0m-21 7h0m13-2h0m13 1h0m-21 4h0m20 4h0m5 5h0m-2 3h0m-2 11h0m-13 25h0m-15 9h0m-19 7h0m8-1h0m-11 5h0m-24 6h0m56 12h0m-60 7h0m12 4h0m47 1h0m7 6h0m8 6h0m-5 4h0m-97 35h0m20-4h0m67 6h0m-108 8h0m83 2h0m13-2h0m10-2h0m-111 9h0m30 4h0m14 3h0m-34 2h0m2 0h0m5 0h0m59 22h0m29 0h0m3 1h0m2 3h0m7 3h0m4 11h0m-57 10h0"/>
<path id="d16a" d="M538 354h0m7 3h0m4 1h0m-9 2h0m-3 7h0m10 2h0m-21 6h0m7 1h0m7-4h0m-14 8h0m14-2h0m-8 10h0m13 2h0m1 4h0m-1 3h0m2 3h0m5 9h0m3 5h0m5 10h0m-1 19h0m2 3h0m-51 8h0m38 0h0m5 0h0m-46 2h0m4 4h0m12 15h0m13 16h0m7-2h0m3 4h0m4 4h0m3 4h0m3-3h0m0 7h0m11-1h0m1 8h0m19 3h0m-5 17h0m6-3h0m5 10h0m-7 24h0m2-5h0m-7 27h0m3-1h0m4 0h0m-13 5h0m3 2h0m-25 7h0m8 0h0m8-4h0m15 0h0m8 5h0m-47 5h0m2-2h0m7 11h0m-57 10h0m68 8h0m10 2h0m-2 5h0m8 0h0m3 1h0m-5 17h0m-1 4h0m4 8h0m-6 6h0m8 5h0m5 4h0m-101 3h0m90 3h0m2 1h0m12 4h0m-106 6h0m18-4h0m41 4h0m20-3h0m21-1h0m10 4h0m-106 5h0m40 0h0m16 1h0m12-4h0m30 0h0m-89 6h0m4 4h0m76-4h0m-76 9h0m34 7h0m44 31h0m6 4h0m-8 9h0"/>
<path id="d10c" d="M488 358h0m4-1h0m8 24h0m-9 3h0m-5 28h0m8-2h0m5 3h0m13-1h0m-41 7h0m8-3h0m19 0h0m8 1h0m5-1h0m0 3h0m3-4h0m11 4h0m-9 1h0m14 1h0m1 2h0m-15 3h0m-49 15h0m4 1h0m9 10h0m12 6h0m21 33h0m4 0h0m2 3h0m-4 26h0m15 11h0m2-1h0m4 0h0m-9 6h0m20 5h0m10 2h0m12-2h0m-8 12h0m2 4h0m-47 40h0m-65 5h0m3-1h0m-2 9h0m3-2h0m19 3h0m-14 2h0m4-1h0m5 4h0m71 9h0m-38 8h0m2-2h0m11-1h0m14 5h0m1-3h0m-28 6h0m37 1h0m2 2h0m-41 1h0m39 2h0m7 6h0m9 13h0m1-3h0m-5 9h0m-78 6h0m73-3h0m-7 17h0m-111 4h0m2-3h0m0 8h0m45 9h0m-23 4h0m2 2h0m10-5h0m-30 11h0m1-4h0m4 4h0m48-3h0m-41 8h0m-12 3h0m64 11h0m39 1h0m10 2h0m-40 3h0m9 1h0m16 2h0m13 0h0m3 2h0m-25 1h0m-14 10h0m31-4h0m10 3h0m-49 5h0m42-1h0m9 0h0m-45 7h0m2 0h0m22 0h0m1-1h0m19-1h0m9 2h0"/>
<path id="d16b" d="M543 363h0m-2 4h0m-13 7h0m8 2h0m6-3h0m-5 10h0m5-1h0m-8 4h0m11 9h0m5 10h0m8 16h0m0 8h0m5 21h0m-57 10h0m6-4h0m3 7h0m-2 8h0m26 20h0m6-4h0m-2 10h0m18 12h0m19 4h0m-2 3h0m0 3h0m13 0h0m-10 9h0m16 2h0m-9 24h0m0 8h0m-6 16h0m3 9h0m4-1h0m1 7h0m-50 8h0m13 3h0m11 13h0m-66 2h0m64 7h0m4 1h0m11 10h0m-1 10h0m3-5h0m1 4h0m-5 3h0m5 4h0m4-5h0m-8 6h0m6 2h0m-9 18h0m-3 4h0m-89 8h0m10-1h0m80 1h0m5 0h0m2-1h0m-111 5h0m3 2h0m7 3h0m27-2h0m62 0h0m2-3h0m2 4h0m28-3h0m-120 7h0m62 3h0m11-1h0m3 0h0m3-4h0m4 0h0m6 5h0m1-3h0m6 0h0m7 0h0m-89 8h0m17-1h0m10-2h0m17-1h0m36 4h0m8-1h0m5 1h0m12-2h0m-72 4h0m29 16h0m2 3h0m15 14h0m3 3h0m10 17h0m1 4h0m-5 5h0"/>
<path id="d12a" d="M501 355h0m1 1h0m4 1h0m0 8h0m-4 3h0m2 8h0m2 10h0m3 5h0m0 3h0m6 4h0m-2 8h0m2 0h0m-23 13h0m33-5h0m13 2h0m-46 9h0m49-5h0m-70 6h0m7 9h0m30-1h0m14 3h0m23-1h0m-34 7h0m19 0h0m-49 4h0m35 2h0m10 0h0m14-4h0m-54 5h0m27 0h0m-8 30h0m8 4h0m17 9h0m-4 18h0m2 11h0m5 0h0m3 6h0m23 4h0m11-1h0m-3 29h0m2 3h0m-7 4h0m3-3h0m-5 16h0m-11 2h0m-13 10h0m-23 9h0m10-1h0m-26 9h0m8-1h0m-25 7h0m51 2h0m-18 2h0m40 16h0m3-3h0m3 22h0m2 6h0m-1 7h0m-93 13h0m6-2h0m4 1h0m23 0h0m53 1h0m-104 7h0m5-1h0m3 1h0m56 2h0m7 4h0m21 0h0m-83 7h0m72-4h0m-19 38h0m44 12h0m-60 7h0m1 3h0m68 9h0"/>
<path id="d11b" d="M496 358h0m2 7h0m0-4h0m2 4h0m-4 18h0m4 5h0m3 9h0m6 2h0m-14 13h0m19-4h0m5 1h0m-18 6h0m2 4h0m16-2h0m-46 4h0m5-1h0m23 3h0m25 2h0m-21 5h0m4 1h0m16-1h0m7-4h0m4 5h0m3 0h0m-9 7h0m4 3h0m9-2h0m-65 9h0m37-2h0m7 0h0m-26 14h0m3 12h0m20 33h0m0 11h0m-2 8h0m3-2h0m5 0h0m25 16h0m7 0h0m6 1h0m1-4h0m-15 10h0m5-5h0m6 3h0m-3 3h0m11 3h0m-13 22h0m-3 8h0m-14 8h0m-84 18h0m58-1h0m-29 5h0m6-2h0m-18 6h0m42 14h0m12-1h0m-35 5h0m10 4h0m45 0h0m7 9h0m2 11h0m-69 21h0m68-4h0m-42 13h0m5 1h0m28 3h0m-90 16h0m-19 4h0m4 2h0m49 2h0m-39 2h0m46 9h0m36 11h0m8 0h0m3 2h0m11-1h0m-51 5h0m7-3h0m16 0h0m-31 10h0m1-3h0m4-1h0m43 2h0m8 2h0m-7 2h0m8 5h0m-39 12h0m49-2h0m-57 3h0m43 2h0m16 0h0"/>
<path id="d8c" d="M480 375h0m2 1h0m1-4h0m-1 17h0m2-3h0m0-2h0m3 7h0m-1 10h0m4-2h0m-3 6h0m-20 12h0m-1 4h0m-3 11h0m-1 16h0m12 10h0m1 10h0m13 0h0m-14 11h0m20 0h0m-15 5h0m5 3h0m3 0h0m11 3h0m5-4h0m-30 11h0m5-4h0m2-1h0m9 7h0m9 2h0m9-3h0m-32 10h0m13-4h0m4 5h0m17 0h0m5-4h0m-41 6h0m3 0h0m11 4h0m9-1h0m2 5h0m6-2h0m-18 7h0m3 2h0m2-2h0m4 0h0m3 2h0m1-2h0m-5 8h0m12-4h0m1 3h0m-11 4h0m18 1h0m7 2h0m-20 11h0m18 1h0m9-1h0m3-1h0m-14 6h0m2 3h0m10-5h0m20 0h0m6 1h0m-22 7h0m12 4h0m1 4h0m-23 4h0m8-2h0m14 6h0m-37 14h0m9 0h0m-86 8h0m74-3h0m2 4h0m-76 3h0m9 2h0m25-2h0m-31 5h0m38 0h0m8 20h0m40 13h0m-33 2h0m5 2h0m8 0h0m-8 5h0m26 4h0m7-4h0m-18 8h0m21-3h0m10 2h0m-14 9h0m16-2h0m-75 7h0m28-1h0m10 1h0m6-3h0m3 4h0m9-1h0m9 4h0m5 1h0m-11 5h0m-101 9h0m12-5h0m-10 16h0m42 11h0m8 1h0m-43 5h0m50-2h0m4 4h0m-5 3h0m4 2h0m-52 7h0m-16 4h0m73-3h0m-3 6h0m2 4h0m-1 6h0m19 8h0m9 4h0m11-4h0m3 4h0m-33 12h0m-7 4h0m6 0h0m1 9h0m2-2h0m-11 3h0m2 5h0m6 5h0"/>
<path id="d2b" d="M457 379h0m-9 15h0m1-3h0m-5 9h0m-7 17h0m5-2h0m-8 24h0m-6 10h0m-7 5h0m-9 4h0m4 0h0m2 11h0m-3 9h0m2 6h0m-17 39h0m5 3h0m14-1h0m8 3h0m11 0h0m15 4h0m-6 9h0m11 0h0m8 4h0m-27 5h0m8 6h0m6-3h0m-18 10h0m3-2h0m-3 14h0m0-2h0m-2 4h0m-17 6h0m0 7h0m2 0h0m-6 7h0m0 7h0m2 2h0m2 1h0m11 17h0m-3 10h0m16 1h0m-10 2h0m8 0h0m3 4h0m-10 2h0m-2 9h0m0 9h0m8 2h0m-4 4h0m-6 5h0m10 1h0m-25 13h0m1-2h0m8 24h0m-4 11h0m1 9h0m22 13h0m-2 7h0m2-2h0m9-1h0m5-1h0m3 8h0m4-1h0m-27 5h0m7 4h0m9 1h0m4-5h0m13 2h0m-20 5h0m4 1h0m3 2h0m-22 2h0m12 7h0m8 4h0m7-1h0m-15 9h0m2 2h0m2-1h0m3 20h0m1 7h0m2-4h0m2 9h0m9 8h0m3 3h0m7 2h0m0 9h0m4 0h0m5 2h0m-7 4h0m-4 8h0m4-4h0m1 3h0m-3 5h0m7 5h0m3 2h0m-7 11h0"/>
<path id="d0a" d="M401 358h0m5-4h0m7 4h0m2-4h0m16 4h0m4-4h0m-35 11h0m11-4h0m7 1h0m14-1h0m3 0h0m-32 5h0m0 2h0m5 3h0m3-4h0m2-1h0m3 2h0m2 0h0m6 1h0m6-3h0m3 5h0m11-4h0m-44 8h0m1-2h0m5 3h0m6-1h0m15-2h0m0 2h0m3-2h0m7 4h0m4-5h0m5 5h0m-44 3h0m2 2h0m25 1h0m4-5h0m6 1h0m0 4h0m-15 1h0m7 0h0m4 1h0m-35 8h0m2-2h0m2 4h0m8 0h0m6-5h0m5 4h0m1-3h0m3 3h0m0-4h0m8 5h0m2-1h0m-26 4h0m1 3h0m4 0h0m16-3h0m5-1h0m-37 5h0m7 2h0m3-2h0m11 0h0m2 3h0m5-1h0m2-2h0m-22 11h0m2-3h0m7-2h0m8 0h0m2 4h0m-9 5h0m7-1h0m-22 5h0m3 2h0m3 1h0m11-4h0m6 3h0m-12 4h0m9 4h0m1-3h0m-24 6h0m9-2h0m3 3h0m11 1h0m-23 2h0m3 5h0m2-4h0m14 4h0m4-1h0m-22 5h0m20 2h0m-15 9h0m23 73h0m-22 7h0m-6 7h0m13 0h0m13 0h0m-23 4h0m-4 5h0m2 2h0m4-2h0m2 3h0m6-4h0m2 7h0m-16 7h0m1-3h0m3 1h0m20 3h0m-22 7h0m-2 16h0m2 2h0m1-2h0m2 11h0m-5 4h0m8 17h0m4 0h0m-12 8h0m12 4h0m6-5h0m-6 16h0m5-4h0m-13 7h0m20 8h0m-10 7h0m-10 7h0m6 3h0m-10 5h0m3 1h0m-3 6h0m2-1h0m7 5h0m7 22h0m-16 12h0m2 3h0m0 3h0m-2 8h0m5 11h0m37 0h0m-35 4h0m4-1h0m43 0h0m-46 8h0m17 0h0m-25 2h0m8 3h0m10-1h0m7-1h0m-13 5h0m1 3h0m5-3h0m4 4h0m-13 7h0m14-3h0m3 1h0m4 2h0m-30 4h0m0-3h0m4 0h0m8 3h0m2 3h0m7 1h0m2 3h0m2-4h0m6 1h0m-31 8h0m2 2h0m2-5h0m16 1h0m16 4h0m-26 3h0m7 1h0m20 0h0m3-3h0m-28 7h0m14 2h0m4 0h0m10 0h0m3 2h0m-36 4h0m8-1h0m8 0h0m6-1h0m2 0h0m4 0h0m4 1h0m-33 7h0m5 1h0m6-3h0m15 2h0m7-3h0m2 2h0m-41 4h0m3 4h0m12 0h0m5 0h0m11 1h0m6-4h0m0 4h0m7-2h0m4 2h0m-47 4h0m10-3h0m26 5h0m8 0h0m-45 1h0m1 5h0m5-1h0m5-4h0m10 4h0m17-2h0m8 2h0m-26 3h0m1 3h0m8-4h0m9 5h0m11-5h0m2 4h0m-39 5h0m4-1h0m6 1h0m20 0h0m7-1h0m5 0h0m6 1h0m3 2h0m-57 6h0m15-5h0m8 0h0m6 0h0m9 4h0m4 1h0m8-1h0m14 1h0m-63 6h0m2-3h0m4-1h0m7 0h0m5 0h0m6 2h0m14 2h0m5-3h0m9-1h0m7 4h0m1-2h0m-66 7h0m9 0h0m5-4h0m4 0h0m5 0h0m4 0h0m2 3h0m3-3h0m2 1h0m21 3h0m8-1h0m-59 7h0m7 1h0m4-5h0m1 5h0m2-5h0m4 1h0m5 0h0m9-1h0m0 5h0m9-3h0m17-2h0m-36 8h0m11 0h0m11 0h0m14 0h0"/>
<path id="d6c" d="M468 356h0m4 0h0m-2 4h0m0 9h0m3 6h0m2 3h0m-5 11h0m-10 34h0m-1 8h0m-6 4h0m2 5h0m-5 10h0m16 80h0m7 2h0m3 4h0m4-2h0m2 3h0m6-3h0m15 3h0m-14 4h0m36 13h0m-36 10h0m11 4h0m1 2h0m5 9h0m4 1h0m-8 7h0m-54 6h0m6-2h0m-10 6h0m54-3h0m3 0h0m-79 7h0m21 15h0m7 1h0m0 2h0m27 27h0m-21 11h0m34 0h0m6 2h0m5 0h0m-52 5h0m3 0h0m7-3h0m16 4h0m4 0h0m-60 28h0m41 26h0m9 5h0m7 3h0m-42 7h0m52 12h0m-3 34h0m4 3h0m-4 3h0m11 22h0m1-3h0m3 3h0m4 13h0m-5 10h0m1 6h0m0-2h0m4 1h0"/>
<path id="d4a" d="M464 354h0m-1 17h0m-3 10h0m1 1h0m5 2h0m-5 6h0m2 4h0m3 4h0m1 3h0m-14 4h0m6-2h0m7 2h0m-16 14h0m2-4h0m-1 16h0m-6 12h0m-3 11h0m-15 18h0m2-4h0m3 4h0m3-3h0m15 2h0m5-2h0m-34 7h0m12 3h0m11 0h0m-2 1h0m4 2h0m-28 9h0m28-2h0m4 0h0m-18 4h0m6 4h0m-4 1h0m1 2h0m-23 4h0m6 2h0m5-1h0m3 1h0m9 0h0m1 2h0m16 0h0m2-4h0m-38 11h0m32 0h0m-40 1h0m12 0h0m26 4h0m5 1h0m5-1h0m-39 3h0m24 1h0m16 0h0m16 26h0m3-1h0m-5 12h0m-3 4h0m1 2h0m-13 7h0m32-2h0m-37 8h0m35-4h0m3 4h0m-59 7h0m16-2h0m4-2h0m15 2h0m15 2h0m2-5h0m4 5h0m2-4h0m-50 7h0m32-1h0m3 4h0m5-4h0m4 2h0m14-1h0m-74 4h0m54 0h0m19 4h0m-62 20h0m8 0h0m5 5h0m-1 4h0m9-1h0m0-1h0m-5 9h0m16 0h0m4 1h0m-13 2h0m-6 5h0m14 5h0m4-2h0m3 1h0m-27 6h0m15 0h0m4 1h0m-17 1h0m23 2h0m4-1h0m12 4h0m-12 1h0m-28 11h0m5 3h0m-35 18h0m6 11h0m42 26h0m-50 4h0m14 1h0m23 3h0m12 1h0m13 7h0m-10 38h0m9-2h0m-15 20h0m9 0h0m5 0h0m7 1h0m-14 2h0m19 3h0m-5 8h0m6-2h0m-21 5h0m29 2h0m-15 3h0m13 6h0m2 4h0m0 27h0m3 0h0m-1 18h0"/>
<path id="d7a" d="M480 356h0m-4 8h0m6 5h0m-9 21h0m1 8h0m4 7h0m-20 31h0m2 3h0m1 3h0m-6 4h0m1 8h0m8 6h0m-2 25h0m9-5h0m0 15h0m6 8h0m7-2h0m16 8h0m-32 4h0m26-3h0m8 3h0m-31 3h0m2 9h0m4 4h0m6 3h0m4-2h0m17 1h0m5 5h0m3 3h0m-13 6h0m6-4h0m5 1h0m5 0h0m-21 9h0m0-4h0m12 2h0m5 0h0m15 7h0m7-2h0m-39 7h0m15 1h0m2 1h0m1-2h0m19-3h0m7 2h0m-35 8h0m36 4h0m-31 10h0m3 0h0m2 5h0m-77 11h0m28-4h0m2 4h0m44-4h0m-83 8h0m2 2h0m7 9h0m38 14h0m6 3h0m2 11h0m23 5h0m4 1h0m-22 2h0m17 3h0m1 5h0m-2 7h0m12-1h0m10-2h0m-10 10h0m8-3h0m-10 7h0m6-1h0m-61 41h0m22 5h0m3 18h0m4 21h0m3 13h0m3-1h0m-3 12h0m6 0h0m-13 7h0m2 2h0m5 2h0m6 0h0m5 3h0m-15 3h0m16 12h0m0 22h0m0 7h0m0 18h0m0 14h0m0-2h0"/>
<path id="d9c" d="M483 354h0m3 0h0m-3 8h0m5 10h0m3 4h0m-6 3h0m1 3h0m2-2h0m6 14h0m-38 56h0m19 10h0m10 2h0m1 11h0m4-2h0m-6 4h0m3 3h0m9-1h0m-6 9h0m4 9h0m15-1h0m6 17h0m-8 9h0m7 7h0m6 5h0m8 7h0m6 0h0m2-1h0m-13 5h0m3 0h0m10-1h0m3 0h0m-17 6h0m23-2h0m3 2h0m-12 9h0m19 3h0m-2 7h0m-21 13h0m5 4h0m-81 13h0m5 0h0m50 0h0m-63 8h0m9-1h0m34 0h0m-48 5h0m2 2h0m26 5h0m11 10h0m31 8h0m-25 4h0m3 3h0m2-2h0m38 0h0m7 2h0m-4 4h0m-38 3h0m43 4h0m1 3h0m4 2h0m-15 6h0m6-3h0m16 3h0m-12 4h0m-56 5h0m7 1h0m8 2h0m43-3h0m-24 9h0m10 1h0m13-2h0m-113 7h0m10-2h0m92 0h0m-96 25h0m49 2h0m-45 19h0m14-3h0m39-1h0m4 10h0m-80 1h0m76 1h0m22 14h0m19 5h0m1 1h0m2-3h0m-23 7h0m7 0h0m3 3h0m1-3h0m16 4h0m-21 2h0m18 1h0"/>
<path id="d11a" d="M510 402h0m-5 8h0m11 3h0m4 0h0m-32 3h0m5-1h0m31 1h0m6 1h0m4 1h0m-36 3h0m38 4h0m1-4h0m-64 7h0m36-2h0m10 5h0m-8 3h0m3-2h0m10 4h0m6-2h0m2 1h0m-57 8h0m42-1h0m3-3h0m6 0h0m9 0h0m-62 7h0m4 1h0m49-2h0m8 1h0m-49 10h0m36 53h0m-2 3h0m3 0h0m6 4h0m-5 10h0m42 1h0m-17 4h0m6-1h0m-1 11h0m14 11h0m4 0h0m-17 23h0m-17 15h0m-54 21h0m-8 4h0m5-2h0m40 7h0m5 1h0m22 0h0m-29 3h0m-9 7h0m34-1h0m4 8h0m-67 37h0m-26 9h0m54 1h0m14 4h0m-91 4h0m4-2h0m83-1h0m-84 7h0m-2 5h0m2 3h0m29-1h0m-17 9h0m44 3h0m-43 4h0m55 8h0m0 7h0m11-1h0m5 0h0m5 0h0m13 1h0m-23 8h0m10-1h0m4 0h0m11 0h0m5-1h0m3-2h0m4-1h0m3 3h0m-8 11h0m5 1h0m-56 3h0m9 4h0m52 0h0m-59 4h0m9-1h0m51 0h0m7 4h0m-16 1h0"/>
<path id="d9b" d="M485 357h0m-5 6h0m4 2h0m7 4h0m-3 18h0m4 5h0m-5 6h0m3 3h0m-13 9h0m8 0h0m6 1h0m18-3h0m-42 16h0m1 6h0m-1 10h0m-1 9h0m-2 3h0m6-1h0m1 3h0m13 14h0m10 3h0m-5 5h0m14 14h0m-30 4h0m40 1h0m2 0h0m3 3h0m-8 6h0m-28 13h0m41 18h0m10 10h0m21 0h0m-3 3h0m1 15h0m-21 1h0m5 0h0m13 5h0m6-4h0m3 2h0m-8 4h0m-31 5h0m19 4h0m-16 6h0m6 0h0m5-2h0m-18 9h0m-67 10h0m0 8h0m39-5h0m-12 14h0m51 9h0m1-5h0m-39 9h0m21 3h0m4 3h0m9-1h0m11 3h0m1-2h0m-40 3h0m30 1h0m6 2h0m0 3h0m6 4h0m6-2h0m5 4h0m1 5h0m-2 4h0m-4 4h0m-78 9h0m74-1h0m-92 8h0m15-4h0m48-1h0m1 4h0m18-2h0m4-1h0m-2 5h0m-105 14h0m37 12h0m-10 9h0m1-4h0m35 5h0m-43 10h0m47 14h0m15 8h0m14 1h0m7 0h0m-8 3h0m1 0h0m6 7h0m4 2h0m10 4h0m1 1h0"/>
<path id="d3b" d="M458 356h0m-10 6h0m10 5h0m-1 8h0m6 4h0m-9 5h0m6 4h0m-9 6h0m4 0h0m-2 4h0m-5 4h0m9 3h0m-14 8h0m4-3h0m1 2h0m-4 25h0m0-5h0m-19 22h0m12-3h0m-12 10h0m-1 25h0m2 3h0m-14 7h0m6 1h0m11 5h0m-25 3h0m14 4h0m9-1h0m-13 5h0m-14 3h0m25 4h0m0-3h0m-19 5h0m36 6h0m3 3h0m12-1h0m-8 7h0m2-2h0m8-1h0m3 2h0m-3 13h0m-16 14h0m14 4h0m2-2h0m2 2h0m-31 5h0m54 0h0m-44 8h0m7-2h0m-2 4h0m29 1h0m-60 11h0m5 11h0m5 11h0m15 11h0m-4 5h0m2-1h0m6 0h0m0 7h0m9 0h0m8 1h0m-13 6h0m10-2h0m3 1h0m-15 5h0m-8 19h0m5 7h0m-22 3h0m-7 11h0m2-3h0m1 14h0m7 9h0m0 8h0m-11 22h0m18 2h0m4 0h0m22-3h0m0 4h0m-32 4h0m7-1h0m28 0h0m4 3h0m13 0h0m-20 13h0m13 0h0m-4 4h0m-9 6h0m7-1h0m-7 15h0m3-3h0m7 7h0m-13 7h0m4 0h0m1-2h0m7 4h0m-4 15h0m8 6h0m-7 3h0m10 0h0m-8 12h0m16 11h0m5-3h0m2 8h0m3-2h0m-4 4h0m1 12h0m-2 10h0m7 1h0m0 3h0"/>
<path id="d1c" d="M442 369h0m5 3h0m-4 11h0m4-5h0m-6 9h0m7-3h0m-4 9h0m0 6h0m-3 5h0m-1 8h0m-9 5h0m3 0h0m1-3h0m-4 26h0m-15 5h0m9 1h0m6 1h0m-26 7h0m4-1h0m-5 8h0m-4 1h0m0 10h0m10 1h0m-10 5h0m8-2h0m-1 4h0m6 3h0m-13 12h0m2 30h0m21-2h0m-21 9h0m4 0h0m-6 7h0m6-5h0m4 2h0m1 3h0m4-4h0m7 1h0m9-2h0m11 3h0m-14 3h0m3 3h0m25 2h0m-31 1h0m23 4h0m2 0h0m-40 2h0m25 1h0m3 4h0m-38 4h0m18 2h0m13-5h0m-23 11h0m4-1h0m7 0h0m9-1h0m5 0h0m-16 3h0m8 2h0m-24 6h0m7 0h0m3-2h0m6 3h0m-17 4h0m12 3h0m-6 5h0m6 0h0m-8 16h0m2 4h0m-6 2h0m11-1h0m7 4h0m4-1h0m-2 3h0m10 5h0m-1 5h0m-22 7h0m14-5h0m12 5h0m-23 3h0m-10 7h0m6-2h0m25 3h0m-15 3h0m7-1h0m-18 11h0m7-3h0m11 9h0m4-1h0m-21 12h0m8-1h0m-10 14h0m1 8h0m7 1h0m1 6h0m-7 7h0m2-3h0m1 5h0m1-4h0m1 15h0m2 2h0m-13 6h0m9 3h0m-8 7h0m21 7h0m14-3h0m-11 8h0m27 1h0m-25 4h0m9 2h0m6-3h0m2 2h0m-5 29h0m7 16h0m2-1h0m14 31h0m5 9h0m2-2h0m4 7h0m-5 4h0m15 3h0m-5 9h0m0 7h0m-7 6h0m13 0h0"/>
<path id="d13b" d="M504 354h0m7 3h0m0-2h0m-7 6h0m3 0h0m6 7h0m5 32h0m4 1h0m6 2h0m0 4h0m12 5h0m-54 7h0m56-3h0m7 5h0m-5 10h0m3-3h0m-66 7h0m56 7h0m-51 4h0m59 1h0m-46 10h0m1 11h0m34 36h0m-4 16h0m2-4h0m2 3h0m6-1h0m9-1h0m11 2h0m-14 4h0m28 8h0m2-3h0m-1 18h0m-3 11h0m2-5h0m-3 8h0m-5 9h0m-9 17h0m1-4h0m-12 8h0m4 1h0m-35 14h0m-24 6h0m9-1h0m11 6h0m3 1h0m8-1h0m-32 3h0m61 4h0m-44 1h0m51 9h0m7 23h0m-93 27h0m32 2h0m-56 8h0m67 2h0m14 0h0m-88 5h0m14-1h0m-12 4h0m28 0h0m27 16h0m5 4h0m58 12h0m0 4h0m2 13h0m7 8h0m-1 5h0"/>
<path id="d15a" d="M530 357h0m-8 15h0m-5 16h0m5 6h0m7-3h0m7 3h0m1 5h0m5-1h0m14 24h0m-65 13h0m68 4h0m-7 8h0m-46 4h0m15 4h0m18-1h0m5 0h0m-38 13h0m3 0h0m11 12h0m2 4h0m12 4h0m8 7h0m4 16h0m15 3h0m9 3h0m3 3h0m10 5h0m-1 12h0m2 6h0m-6 14h0m3 1h0m3 4h0m-9 6h0m3 5h0m-12 18h0m6-2h0m-26 11h0m14-5h0m7 4h0m-29 15h0m-43 6h0m62 4h0m13 12h0m0 17h0m0-2h0m3 2h0m2 4h0m-3 4h0m-7 16h0m-85 7h0m-2 3h0m20-1h0m-34 6h0m2 3h0m112 0h0m-134 7h0m7-4h0m18 0h0m80 1h0m-65 6h0m31 0h0m-6 15h0m4 7h0m4 1h0m9-1h0m10 2h0m25 0h0m1 2h0m16 25h0m2 4h0m-4 7h0"/>
<path id="d10a" d="M489 365h0m3 0h0m2-4h0m5 11h0m-5 8h0m4 3h0m1 8h0m2 4h0m4 6h0m-4 5h0m-27 7h0m14-3h0m9-1h0m11 3h0m-2 7h0m0 4h0m13 0h0m14-3h0m-21 8h0m-41 12h0m-3 5h0m8 8h0m7 4h0m10 4h0m-6 4h0m15 19h0m8 6h0m13 30h0m7 15h0m12 3h0m14 11h0m7 1h0m-12 24h0m-3 4h0m-3 5h0m-86 17h0m6 4h0m-7 5h0m3-3h0m16 2h0m-23 4h0m28 9h0m50-1h0m3 3h0m6-3h0m-12 7h0m5 0h0m6 2h0m-49 6h0m32 0h0m11-5h0m3 5h0m5-2h0m-46 3h0m3 1h0m46 1h0m0 9h0m-66 25h0m10 3h0m5 0h0m54-1h0m3-2h0m-36 11h0m23 0h0m-96 3h0m78-1h0m12 2h0m9 0h0m-114 13h0m32 7h0m11 1h0m16 4h0m-40 4h0m-9 8h0m54-1h0m-52 4h0m4-1h0m-19 11h0m74 3h0m21 1h0m-8 3h0m17 1h0m8 3h0m-13 5h0m8-3h0m3 3h0m19 0h0m-16 8h0m4-1h0m6-4h0m-8 8h0m-43 4h0m2 1h0m21 1h0m4-2h0m7 0h0m8 2h0m13 0h0"/>
<path id="d6b" d="M471 354h0m0 9h0m2 5h0m3 25h0m-22 37h0m0 11h0m-10 9h0m8 3h0m1 3h0m9 8h0m-18 33h0m-5 15h0m24 0h0m1 3h0m-1 4h0m4 4h0m1 5h0m2 3h0m16 8h0m10 0h0m-11 2h0m11 9h0m-6 7h0m2-4h0m21 1h0m-11 24h0m3 7h0m-61 6h0m59 0h0m-74 3h0m56 8h0m9 0h0m2-1h0m-58 15h0m19 4h0m13 7h0m-1 4h0m8 1h0m2 16h0m4 0h0m2 5h0m5-1h0m-2 5h0m-36 3h0m11 1h0m29 2h0m-34 8h0m32-4h0m-69 15h0m-1 3h0m9 38h0m0 4h0m30 3h0m-38 2h0m58 5h0m9 17h0m-7 18h0m1 2h0m0 23h0m17 23h0m1 7h0m2 21h0m-2 20h0"/>
<path id="d14a" d="M518 357h0m-3 4h0m2 3h0m6-3h0m7 2h0m-13 4h0m-1 22h0m9 2h0m2 4h0m-2 3h0m13 7h0m8 0h0m-60 32h0m62 0h0m-56 2h0m13 3h0m-10 6h0m4 0h0m7-1h0m42 0h0m2 2h0m-22 4h0m4 0h0m-17 18h0m-5 4h0m3 3h0m19 12h0m6 8h0m0 10h0m14-2h0m6 3h0m-19 4h0m2 3h0m28 4h0m7 23h0m4 2h0m0-2h0m-15 35h0m7 1h0m-2 3h0m-17 11h0m5-3h0m4 0h0m-21 8h0m-9 3h0m-38 15h0m0 6h0m12-2h0m47 6h0m8 5h0m0 6h0m5 0h0m2 4h0m-3 19h0m-2 11h0m-62 12h0m-49 12h0m8-1h0m59 4h0m5 3h0m-76 4h0m2-1h0m41 4h0m3 4h0m16 15h0m-13 22h0m68 0h0m3 6h0m3 12h0m2 3h0"/>
<path id="d13a" d="M515 354h0m-7 15h0m0 2h0m5 3h0m1-2h0m-7 11h0m3-3h0m2 4h0m3 10h0m-32 31h0m62-1h0m-61 2h0m10 5h0m4-1h0m2-2h0m-15 4h0m2 4h0m3-4h0m15 3h0m2 6h0m34 2h0m1 5h0m-4 3h0m-22 34h0m4 1h0m4 7h0m2 5h0m10 2h0m-1 12h0m17 1h0m3 0h0m2 4h0m0 63h0m-25 19h0m-19 12h0m-29 4h0m4-2h0m18 1h0m1 1h0m27 0h0m5 0h0m-26 7h0m2-1h0m43 20h0m-2 3h0m-70 35h0m5 1h0m3-1h0m4 3h0m60-4h0m-5 9h0m-6 6h0m1 1h0m-109 3h0m21 3h0m2-4h0m4 4h0m59-1h0m14-2h0m-43 18h0m8 5h0m4 9h0m16 1h0m5 0h0m24 0h0m-48 4h0m54 5h0m1 2h0m7 26h0"/>
<path id="d10b" d="M490 354h0m1 7h0m-3 8h0m7 0h0m-3 3h0m4 7h0m1 8h0m-2 4h0m1 2h0m4 4h0m1 4h0m-4 1h0m-14 10h0m18-2h0m3 2h0m-26 2h0m6 2h0m24 8h0m7-1h0m6-3h0m0 4h0m3 4h0m-9 8h0m7-4h0m-47 17h0m52 0h0m-39 12h0m4 2h0m2 3h0m0 2h0m5 12h0m21 22h0m-5 13h0m3 6h0m0 6h0m33 8h0m9 15h0m1-3h0m-2 5h0m3 10h0m-37 27h0m4 0h0m4 2h0m-12 4h0m-18 9h0m3-4h0m4 0h0m-48 9h0m18 0h0m1 13h0m57-2h0m-51 7h0m44-3h0m10 4h0m3 13h0m7 1h0m-1 8h0m0 6h0m3 5h0m-4 7h0m-81 7h0m8-1h0m-24 9h0m85-3h0m6 3h0m2-5h0m4 1h0m-12 6h0m-11 5h0m10 0h0m-107 13h0m6 10h0m5 9h0m58 3h0m-50 1h0m46 1h0m6 3h0m20 7h0m8-1h0m-21 7h0m4-2h0m18-2h0m5 2h0m-31 4h0m2 3h0m15-2h0m5 1h0m3 1h0m10-2h0m-1 8h0m-42 6h0m50-1h0m14 0h0m-66 3h0m22 3h0m38 1h0m-44 2h0m-7 6h0"/>
<path id="d1a" d="M443 358h0m5-3h0m-7 5h0m6 4h0m-4 2h0m5 9h0m-4 6h0m-5 19h0m-7 12h0m0 7h0m-1 5h0m1 3h0m3 7h0m-19 15h0m-4 3h0m6 0h0m-16 4h0m1 7h0m0 15h0m4 7h0m-7 5h0m9 38h0m1 3h0m13-2h0m-20 10h0m11-2h0m19 4h0m9 2h0m-13 7h0m-24 6h0m13 1h0m2-3h0m3-1h0m11 4h0m10-5h0m-42 9h0m10-2h0m0 4h0m32-1h0m-28 7h0m11-5h0m10 1h0m-37 9h0m8-2h0m6 0h0m-12 11h0m0 3h0m4-3h0m4 10h0m-8 9h0m0 1h0m6 6h0m5 0h0m2 2h0m-2 5h0m-13 4h0m16 1h0m-16 7h0m14 0h0m6-4h0m7 6h0m-22 7h0m8 2h0m10 0h0m-19 4h0m1 4h0m11-1h0m4-3h0m2-1h0m5 4h0m-17 7h0m3 0h0m14-5h0m-11 10h0m-15 3h0m11 3h0m-3 3h0m3 4h0m6 0h0m0-5h0m2 1h0m-20 9h0m9 6h0m-8 6h0m-1 6h0m0 7h0m16 7h0m-4 9h0m-4 5h0m-4 5h0m-3 11h0m3 5h0m4-2h0m1 7h0m37 1h0m-28 3h0m8 3h0m2-4h0m17 1h0m-43 7h0m8-3h0m23 5h0m-30 5h0m19-2h0m2 2h0m7-1h0m-13 6h0m12 0h0m4 0h0m6 4h0m-3 6h0m-1 7h0m3 6h0m12 29h0m3 3h0m2 0h0m-2 7h0m0-4h0m4 5h0m1 3h0m12 0h0m-8 4h0m10 11h0m2 11h0m1 4h0m-1 4h0"/>
<path id="d13c" d="M507 354h0m8 4h0m5-3h0m-14 16h0m0 3h0m-1 4h0m5 10h0m9 10h0m14 8h0m11 7h0m-54 9h0m56 8h0m-66 2h0m70 2h0m-63 8h0m60 1h0m-2 6h0m-54 1h0m14 21h0m0 5h0m14 8h0m3 7h0m5 0h0m3 7h0m3 3h0m-3 3h0m14 17h0m10-5h0m10 4h0m-23 5h0m25-1h0m8 9h0m1 27h0m-5 8h0m3-3h0m-11 11h0m-10 10h0m-9 7h0m4 1h0m-28 10h0m-9 3h0m9 8h0m-31 7h0m0-3h0m23 4h0m51 18h0m1 24h0m7-4h0m-12 10h0m-89 11h0m84 1h0m3-1h0m-112 13h0m13-1h0m65 3h0m13 0h0m-81 5h0m-13 6h0m46 2h0m18 16h0m15 3h0m17 1h0m12 1h0m9 0h0m-1 3h0m-58 18h0m67 0h0m3 18h0"/>
<path id="d5a" d="M462 363h0m10 8h0m1 30h0m-4 5h0m-10 6h0m1-4h0m-1 8h0m-7 22h0m-5 7h0m1 11h0m2 5h0m6 0h0m6 6h0m-9 11h0m7-2h0m-4 5h0m-3 5h0m6 4h0m-55 12h0m38 3h0m20 2h0m1-1h0m-16 6h0m21 23h0m12 7h0m2 8h0m2-1h0m6 1h0m-4 4h0m6 10h0m-1 12h0m5 2h0m-44 9h0m44-2h0m4-3h0m-75 11h0m3-2h0m4-1h0m16-1h0m15 2h0m25 3h0m4 2h0m-19 4h0m4 2h0m3-1h0m-26 20h0m5 4h0m1 1h0m5 0h0m6 11h0m2 3h0m4 2h0m3 4h0m-9 6h0m6 1h0m3 0h0m-17 3h0m14 1h0m5 1h0m11 3h0m-46 5h0m-21 16h0m-8 15h0m7 14h0m48 8h0m-9 1h0m-36 11h0m12 4h0m2 0h0m8 0h0m26 6h0m3 0h0m3 18h0m0-3h0m-6 39h0m14 13h0m5 3h0m2 4h0m-5 18h0m10-3h0m-8 22h0m5 26h0"/>
<path id="d4b" d="M462 369h0m3 6h0m-2 12h0m0 11h0m-12 12h0m11-2h0m-10 12h0m-4 10h0m-1 8h0m-9 14h0m-6 5h0m-11 10h0m22-5h0m-18 7h0m0 2h0m12 2h0m1-5h0m3 4h0m7-3h0m-9 8h0m3-1h0m6 3h0m3-3h0m-27 4h0m27 2h0m-31 5h0m7 1h0m6 0h0m4 0h0m3-1h0m6 1h0m-22 5h0m5 2h0m11-2h0m10 4h0m-27 4h0m0-2h0m3-1h0m34 3h0m-50 7h0m7 0h0m6-1h0m0 5h0m7 1h0m2-3h0m18 2h0m11 0h0m-28 6h0m23-2h0m-11 8h0m1 2h0m7-3h0m2 4h0m11 11h0m3 5h0m2 13h0m4 0h0m0 11h0m1-2h0m9-1h0m-17 7h0m-14 9h0m24-4h0m3 3h0m2-3h0m-56 11h0m9-4h0m5 1h0m18 3h0m6-3h0m3 3h0m26-4h0m-27 6h0m7 0h0m20 4h0m-74 6h0m8 13h0m7 6h0m11 2h0m8 14h0m4 1h0m4 6h0m7-2h0m-17 8h0m3-2h0m1 5h0m0 2h0m5-2h0m6 1h0m1 2h0m-27 3h0m9 1h0m-26 23h0m9-2h0m4 0h0m-11 42h0m39 17h0m8 5h0m-58 4h0m65 3h0m-4 9h0m2 1h0m-2 5h0m1 8h0m2-4h0m-20 6h0m19 2h0m-11 10h0m8 0h0m-19 8h0m6 2h0m2-3h0m7-1h0m2 17h0m5-4h0m-1 10h0m7-4h0m-14 14h0m3 2h0m12-5h0m9 2h0m2 2h0m-19 5h0m11 0h0m-1 4h0m4 8h0m3 19h0m-3 9h0m5 3h0"/>
<path id="d9a" d="M487 360h0m1 16h0m4 11h0m3 11h0m-5 8h0m2-3h0m4 2h0m6 0h0m-31 11h0m-7 31h0m4 7h0m3 4h0m6-2h0m4 4h0m-8 4h0m10 15h0m9-3h0m-8 7h0m14-1h0m7 8h0m10 12h0m-29 5h0m30 1h0m-35 4h0m-4 7h0m2-3h0m6 3h0m21-3h0m6 8h0m12 8h0m-6 3h0m27 8h0m11 13h0m4 1h0m-1 3h0m-15 18h0m-14 8h0m5 1h0m5-5h0m-21 11h0m2-2h0m-71 8h0m4-2h0m-11 4h0m55 3h0m-50 4h0m10 3h0m11-2h0m8 10h0m41 13h0m1 1h0m4-1h0m9 1h0m-6 6h0m3 2h0m4 8h0m10 3h0m-15 3h0m8 10h0m-39 4h0m29-2h0m10 3h0m-38 2h0m3 3h0m27 1h0m14 0h0m-99 7h0m15-3h0m62-1h0m3 2h0m-97 8h0m6-2h0m94 0h0m6 3h0m-90 25h0m-10 8h0m17 1h0m-8 6h0m-18 5h0m70-1h0m2-2h0m3 3h0m-81 6h0m75 0h0m18 8h0m9-1h0m-14 5h0m8-3h0m3 3h0m-26 6h0m22 1h0m23 4h0m-8 6h0"/>
<path id="d5c" d="M463 358h0m2 4h0m4 1h0m-3 6h0m3 7h0m-2 13h0m0-1h0m-4 13h0m6-4h0m-13 27h0m2-3h0m-16 24h0m6 8h0m-4 4h0m6 10h0m0-3h0m8 9h0m-11 24h0m2-3h0m-33 7h0m32 2h0m5-1h0m-14 3h0m6 3h0m2-4h0m-2 11h0m11-2h0m-18 6h0m23-3h0m0 15h0m12 5h0m5 1h0m0 8h0m8 0h0m-5 1h0m-2 8h0m1 3h0m6-1h0m-4 5h0m14 13h0m2-2h0m-6 7h0m-53 11h0m17 0h0m16-2h0m2 10h0m4 0h0m6-3h0m-25 35h0m7 13h0m9 7h0m-22 5h0m2 4h0m11-1h0m-22 5h0m51 0h0m-51 15h0m17 38h0m4 0h0m-3 8h0m5-4h0m7 3h0m-50 8h0m45-1h0m4 9h0m9 7h0m3 3h0m-3 4h0m-2 25h0m-6 13h0m2 11h0m-1 2h0m7 1h0m8-1h0m-16 8h0m18 0h0m0 8h0m9 2h0m-8 15h0m1 11h0m5 17h0"/>
<path id="d6a" d="M472 395h0m1 11h0m-5 3h0m-2 5h0m-15 31h0m6 12h0m5 15h0m-2 6h0m4-4h0m-4 8h0m-2 4h0m11 11h0m-29 11h0m2 3h0m31 15h0m19 36h0m4 5h0m-62 26h0m3 1h0m53 8h0m-59 7h0m4 7h0m37 8h0m-1 6h0m6 9h0m19 16h0m-25 10h0m38-5h0m-55 10h0m2-2h0m0 7h0m-3 4h0m-31 18h0m3 8h0m4 14h0m0-4h0m50 2h0m-22 6h0m-3 8h0m4-3h0m5 0h0m2 3h0m6-4h0m-25 7h0m22 0h0m7-2h0m4 4h0m7 22h0m-5 5h0m5 7h0m-3 13h0m-4 6h0m0 7h0m1-3h0m7 5h0m2 2h0m11 8h0m2 7h0m-5 29h0m2-4h0m-1 9h0m3 5h0m-1 17h0"/>
<path id="d8b" d="M477 360h0m3 12h0m2 35h0m-16 20h0m-1 7h0m-3 5h0m-2 15h0m6 4h0m9 14h0m6-1h0m1-3h0m-6 6h0m5 2h0m-13 8h0m25-2h0m-18 4h0m2 0h0m21 1h0m-15 6h0m5 1h0m3 1h0m3 2h0m6-3h0m4 1h0m-37 6h0m8 1h0m30 1h0m3-1h0m-33 2h0m10 1h0m11 0h0m9 3h0m-21 6h0m10 1h0m12-4h0m-25 8h0m8 2h0m3-2h0m19 0h0m-32 3h0m4 2h0m19 2h0m6-1h0m4 7h0m-15 9h0m16 4h0m2-1h0m3-2h0m22 3h0m-10 2h0m13 3h0m-48 4h0m16 3h0m25-4h0m-15 8h0m3 0h0m18 0h0m-24 4h0m2 3h0m2-3h0m15 3h0m-1 5h0m-19 5h0m6 0h0m4 2h0m7-4h0m2 4h0m4-4h0m-15 6h0m-14 8h0m-69 8h0m63-1h0m-71 5h0m3 2h0m9 0h0m32 1h0m18-1h0m-25 2h0m-31 6h0m15 4h0m15 3h0m5 3h0m8 10h0m24 7h0m6 2h0m-24 4h0m15-2h0m9 2h0m-13 5h0m23 3h0m15-3h0m-21 6h0m5-1h0m8-1h0m2 4h0m12 1h0m-32 4h0m5-2h0m-46 10h0m2-2h0m1 2h0m6-2h0m50-2h0m4 2h0m-47 3h0m18 3h0m19-1h0m-84 9h0m71-4h0m-88 15h0m36 19h0m5-2h0m20 17h0m3 2h0m-2 3h0m3 2h0m1 22h0m24 0h0m12 2h0m-35 5h0m10 8h0m0 7h0m1-4h0m1 8h0m-16 7h0m15 1h0m1-3h0m0 6h0"/>
<path id="d17c" d="M553 357h0m2-3h0m-4 7h0m-2 6h0m-7 8h0m3 3h0m6 24h0m3 5h0m2 3h0m7 3h0m-4 4h0m4 6h0m4 11h0m0 16h0m2 2h0m-53 5h0m6 4h0m-2 4h0m6 6h0m11 16h0m17 8h0m3-2h0m0 9h0m3-4h0m2 2h0m2 5h0m16-1h0m4 2h0m3 2h0m-1 13h0m0 3h0m3 14h0m1 3h0m3 1h0m5 15h0m3-3h0m-10 5h0m4-1h0m-2 9h0m5-2h0m-9 10h0m1 0h0m-4 3h0m11 4h0m6 4h0m-27 7h0m21-2h0m6 2h0m-25 4h0m-40 8h0m3 0h0m29-5h0m3 2h0m13-2h0m-47 9h0m4 1h0m8-4h0m10 9h0m1-2h0m4-1h0m-1 10h0m6-2h0m-1 6h0m15 7h0m-7 3h0m13 3h0m-7 3h0m9 10h0m-4 5h0m3-1h0m1 3h0m-10 13h0m5 6h0m8 0h0m4 2h0m1 3h0m-105 6h0m65 0h0m35-3h0m8 1h0m3 2h0m-106 1h0m95 4h0m4 0h0m10-3h0m-105 13h0m56 1h0m8-1h0m24 1h0m-78 4h0m22-1h0m29 0h0m17 0h0m5 1h0m-80 6h0m5 4h0m64 0h0m14-1h0m-20 13h0m8 14h0m6 4h0m-4 1h0m6 2h0m0 15h0m4 0h0m-7 1h0m2 2h0m3 0h0"/>
<path id="d17a" d="M547 364h0m6 1h0m1-5h0m3 5h0m-6 8h0m-9 13h0m7-2h0m1 14h0m4 0h0m7 12h0m3 7h0m-3 15h0m4 0h0m0 6h0m2 3h0m-62 16h0m10 3h0m9-3h0m13 0h0m14-1h0m-38 8h0m10 4h0m4 9h0m2 1h0m1 6h0m5-2h0m7 4h0m7 0h0m7 5h0m10 11h0m13 0h0m5 0h0m-14 6h0m2-3h0m11 3h0m-7 5h0m4 6h0m14 1h0m3-2h0m-10 8h0m7 1h0m1-5h0m-6 9h0m3-1h0m3 9h0m-1 12h0m3-2h0m-2 11h0m-5 4h0m4 0h0m-11 10h0m8-3h0m0 9h0m4 5h0m2 1h0m3-3h0m4-1h0m-5 11h0m-5 1h0m-33 10h0m33-3h0m-35 12h0m17 10h0m3 3h0m3 0h0m0 5h0m5 11h0m2 4h0m-1 5h0m7-3h0m-12 17h0m6 1h0m8 3h0m-12 7h0m8-2h0m-1 6h0m8 5h0m-127 6h0m11 0h0m99 3h0m9-4h0m13 3h0m-124 5h0m2-2h0m14 2h0m5 1h0m74-3h0m18 1h0m3 1h0m5-1h0m8 1h0m-66 6h0m8 2h0m3-2h0m14 3h0m22-2h0m9-3h0m-93 6h0m13 1h0m24 0h0m34 3h0m2 0h0m6-1h0m-2 7h0m-25 6h0m9 4h0m42 13h0m-30 11h0"/>
<path id="d4c" d="M461 354h0m1 23h0m1 28h0m-8 11h0m-9 12h0m3 6h0m-9 8h0m0 6h0m-7 4h0m-4 8h0m11-2h0m7 3h0m-12 4h0m6 0h0m3-2h0m8 2h0m-32 5h0m23-1h0m-8 7h0m21-1h0m-28 5h0m3 3h0m3 0h0m5 1h0m3-2h0m14-2h0m-25 9h0m2 1h0m6 0h0m10-3h0m-40 10h0m2-3h0m20 2h0m24 0h0m-48 4h0m4 2h0m22-1h0m-30 6h0m47 2h0m-25 3h0m10 2h0m7 6h0m17 0h0m1 3h0m4 5h0m10 11h0m0 15h0m-1 9h0m8 1h0m2 3h0m3 0h0m-35 6h0m4-2h0m8 1h0m13 8h0m-44 2h0m3 4h0m18-3h0m3 3h0m15-2h0m8-2h0m11 1h0m4 3h0m-71 3h0m65 2h0m-5 6h0m-62 11h0m3-2h0m3 4h0m25 13h0m-3 5h0m9 0h0m-4 2h0m19 3h0m-19 8h0m7-5h0m10 5h0m-18 8h0m18 0h0m-26 7h0m32 4h0m4 1h0m5 2h0m-38 12h0m-29 8h0m10-4h0m44 38h0m-43 17h0m2 3h0m9 0h0m-29 4h0m57 1h0m-48 4h0m47 3h0m2-3h0m2 2h0m7-3h0m-1 9h0m-20 16h0m10 0h0m3-1h0m1 3h0m3-4h0m-2 7h0m3 3h0m-6 6h0m1 1h0m-6 2h0m5 4h0m9-5h0m-17 15h0m8-3h0m4 0h0m-15 9h0m10-2h0m7 4h0m3-2h0m-8 6h0m7-1h0m8 3h0m-3 5h0m5-4h0m-13 7h0m12 4h0m-1 4h0m3 21h0m2 11h0m3 3h0m2 6h0"/>
<path id="d11c" d="M500 368h0m-4 8h0m4-1h0m11 24h0m17 13h0m-51 5h0m18 2h0m31-4h0m-55 9h0m49 4h0m8-2h0m2 4h0m8-3h0m-16 8h0m16 0h0m-13 6h0m-4 8h0m-37 3h0m15 16h0m7 15h0m3 4h0m15 11h0m-1 8h0m4 2h0m0 19h0m41-1h0m-38 2h0m30 5h0m1-5h0m2 4h0m-28 4h0m4 0h0m6 2h0m10-4h0m14 0h0m-5 8h0m3 5h0m-6 18h0m-16 20h0m2 2h0m-21 8h0m3-1h0m-21 10h0m-24 18h0m37 0h0m7-2h0m-7 6h0m16 1h0m6-3h0m3 2h0m4 9h0m0 3h0m3 3h0m-5 6h0m4 5h0m6 12h0m-7 11h0m-91 6h0m10-3h0m33 1h0m3 3h0m41-1h0m-103 6h0m102 0h0m-111 7h0m99-2h0m-73 12h0m-19 9h0m50 6h0m-49 1h0m60 11h0m-1 6h0m41-2h0m-123 3h0m97 0h0m14 4h0m1-4h0m-31 10h0m50-1h0m-11 3h0m1 4h0m-39 2h0m41 1h0m14-1h0m4 0h0m1 3h0m-13 4h0m-35 7h0m8 0h0m34 0h0m2-2h0"/>
<path id="d1b" d="M455 363h0m-10 26h0m-15 42h0m3 0h0m0 3h0m-33 24h0m0 6h0m9 3h0m-8 1h0m2 3h0m1 4h0m7 4h0m-5 2h0m4 1h0m-6 4h0m11 0h0m15 41h0m-14 1h0m16 2h0m3-2h0m-18 6h0m17 0h0m-34 9h0m8 0h0m2 3h0m11 0h0m5 4h0m13-4h0m5 0h0m-22 10h0m4-1h0m1-2h0m-7 8h0m3 1h0m7 1h0m2-1h0m-29 5h0m38 1h0m-40 4h0m18 3h0m-14 5h0m7 0h0m3-4h0m-9 9h0m5-1h0m10-1h0m-17 10h0m3 12h0m2-3h0m-9 15h0m6 0h0m4-2h0m-8 6h0m5 0h0m3-2h0m2 9h0m7-4h0m2 3h0m3-1h0m-20 6h0m5-2h0m5 1h0m-13 6h0m9 7h0m13 3h0m-13 2h0m9 0h0m-19 5h0m18 3h0m4 2h0m4-5h0m-18 10h0m-2 5h0m20-2h0m4 1h0m2 3h0m-32 1h0m23 0h0m3 3h0m-22 8h0m7-4h0m-4 14h0m0 7h0m4 0h0m-9 2h0m1 8h0m-3 6h0m4-1h0m1 4h0m1-4h0m10 7h0m3 1h0m-9 8h0m-4 4h0m-6 9h0m1 5h0m28-1h0m6 0h0m1 6h0m19-4h0m-54 7h0m16-1h0m4 1h0m18-1h0m-6 7h0m6 1h0m-30 6h0m7-2h0m11 1h0m10 6h0m5 3h0m-5 7h0m4 15h0m6 1h0m4 1h0m-2 9h0m-1 8h0m6 0h0m13 19h0m-2 3h0m12 5h0m3 14h0m-11 12h0m4 5h0m3-1h0"/>
<path id="d14c" d="M524 359h0m4-3h0m-15 8h0m8 1h0m5-2h0m-16 3h0m7 7h0m4 2h0m-3 4h0m3 8h0m-1 4h0m18 17h0m4 1h0m6 6h0m5 9h0m-2 2h0m-61 13h0m10 0h0m49 4h0m2-3h0m-57 7h0m11 6h0m13-1h0m-16 8h0m28 27h0m5 10h0m3 7h0m15 3h0m-4 5h0m24 15h0m2 10h0m2 27h0m-13 6h0m5 6h0m7 4h0m-21 9h0m-15 5h0m-4 6h0m-23 9h0m6 0h0m6 4h0m4 0h0m19 4h0m3 0h0m2 3h0m-59 6h0m8 0h0m61 9h0m-2 11h0m7-2h0m-5 5h0m2 4h0m1-4h0m6 7h0m-96 26h0m18 1h0m-44 6h0m16-2h0m-24 4h0m5-1h0m66 5h0m-67 2h0m14 0h0m68 4h0m-48 3h0m22 14h0m68 35h0m3 3h0m2 3h0m-3 5h0"/>
<path id="d7c" d="M482 379h0m-10 9h0m3-4h0m4 9h0m1 8h0m-4 1h0m-16 19h0m2 6h0m-8 22h0m5-4h0m9 16h0m3 1h0m-5 10h0m4 0h0m3-4h0m-5 9h0m3-2h0m-5 5h0m0 6h0m-1 11h0m-20 3h0m26 2h0m17-2h0m8 1h0m-28 4h0m41 9h0m-7 7h0m-32 2h0m11 4h0m12 0h0m-1 11h0m7 1h0m6-5h0m2 3h0m-7 5h0m14 8h0m25-1h0m-34 7h0m2-3h0m-8 8h0m4 0h0m14 0h0m-19 4h0m14 3h0m1-3h0m13 3h0m1-1h0m-20 6h0m7-1h0m1 3h0m-2 4h0m-9 3h0m15 0h0m-64 11h0m-31 5h0m4 0h0m14-4h0m16 0h0m-25 10h0m34-2h0m36-2h0m-55 17h0m36 17h0m0 10h0m8 8h0m19 0h0m9-4h0m-20 9h0m11 0h0m-53 6h0m4 2h0m46-2h0m-39 4h0m6 1h0m31-1h0m13 1h0m-60 7h0m-30 9h0m-11 7h0m10 17h0m27 20h0m21 5h0m9 30h0m3 4h0m-1 9h0m9 1h0m-3 3h0m7 21h0m2 3h0m0 52h0m0 7h0"/>
<path id="d16c" d="M539 357h0m6-3h0m-11 9h0m2-1h0m4 1h0m5-3h0m-11 8h0m1 4h0m-4 7h0m3 4h0m4 5h0m-4 2h0m23 26h0m4 12h0m-61 19h0m9 18h0m10 12h0m8 6h0m15 17h0m18 4h0m7 5h0m-4 3h0m29 3h0m-16 1h0m6 21h0m2-2h0m5 1h0m5-2h0m-3 11h0m-2 2h0m-6 7h0m3 2h0m-7 13h0m16-2h0m-11 4h0m9 11h0m-28 10h0m6-2h0m11 0h0m-10 7h0m2-3h0m-42 11h0m-4 4h0m17 4h0m16 7h0m6-1h0m2 12h0m5 9h0m0 6h0m5 2h0m0 16h0m6-3h0m-9 7h0m-8 7h0m10-3h0m-14 9h0m9 2h0m-96 6h0m18-3h0m69 0h0m16-2h0m7 2h0m-29 8h0m5-1h0m2-2h0m7-1h0m15 3h0m0-2h0m-115 6h0m10 3h0m51 1h0m29-1h0m17 1h0m10-4h0m2 3h0m-95 5h0m75-3h0m7 2h0m6-2h0m8 6h0m-58 16h0m-11 2h0m41 2h0m4 3h0m3 14h0m7 4h0m6 3h0m-6 11h0m2 1h0"/>
<path id="d0c" d="M403 355h0m15 3h0m0-4h0m5 1h0m9-1h0m2 3h0m-32 4h0m14-1h0m6 4h0m-22 4h0m8 2h0m19-3h0m5 1h0m4 0h0m-32 5h0m11 3h0m17-2h0m6-2h0m2 4h0m-34 6h0m29 1h0m-35 1h0m4 2h0m5 1h0m9-1h0m12 1h0m7 0h0m-37 3h0m6 2h0m3 2h0m3-3h0m6 3h0m-18 4h0m3 0h0m5 0h0m16-1h0m2 4h0m16-4h0m-42 8h0m3 1h0m9-2h0m21 2h0m-29 2h0m18 0h0m2 4h0m6-4h0m5 0h0m-34 9h0m4-2h0m5 2h0m2-3h0m-11 11h0m5-5h0m11 0h0m6 2h0m2-2h0m-24 11h0m5-1h0m0-2h0m6 1h0m1 1h0m5-2h0m9 3h0m-21 4h0m8-1h0m6 1h0m-10 8h0m8-5h0m8 0h0m-22 11h0m5-2h0m-2 3h0m-1 15h0m-5 18h0m-1 3h0m22 44h0m-3 8h0m6-4h0m-17 11h0m7-4h0m3 0h0m5 0h0m2 0h0m-16 8h0m5 1h0m3 1h0m5-2h0m13-1h0m1-2h0m-22 10h0m-7 5h0m22-2h0m-19 5h0m-5 7h0m2 4h0m-7 22h0m0 12h0m2 18h0m16 7h0m-14 18h0m2-3h0m0 8h0m4 2h0m4 0h0m-14 5h0m2-1h0m14 7h0m-9 2h0m-7 11h0m0 21h0m4 1h0m-4 3h0m8 11h0m5-1h0m3-3h0m-16 20h0m2 18h0m11-3h0m2 3h0m37-3h0m-52 10h0m19 0h0m-19 8h0m4 2h0m21 0h0m-25 6h0m3-2h0m3 0h0m6 1h0m2 2h0m25 2h0m-37 2h0m6 1h0m1 3h0m6-3h0m9 1h0m9 0h0m-33 6h0m0-2h0m16-1h0m12 3h0m-28 7h0m10-2h0m1 2h0m5-2h0m4 3h0m11-4h0m2 1h0m-33 6h0m23-2h0m2 3h0m2-3h0m4 0h0m3 3h0m-34 4h0m1 4h0m5-3h0m9-2h0m5 0h0m1 4h0m4-3h0m2 1h0m6-2h0m4 0h0m-37 8h0m5 2h0m4 1h0m13 0h0m8-1h0m12 0h0m-39 4h0m22 1h0m1-3h0m2 4h0m9-1h0m-31 7h0m6-3h0m6 1h0m7 2h0m1-2h0m5-1h0m4 0h0m5 4h0m3-4h0m-26 8h0m3-1h0m6 0h0m5 0h0m8 3h0m2-2h0m6 0h0m5-1h0m-49 5h0m3-1h0m2 4h0m6 1h0m2-4h0m3 2h0m3-3h0m3 4h0m6 1h0m2-5h0m0 4h0m10 0h0m13 0h0m-56 6h0m10-4h0m15 5h0m4 0h0m8-5h0m4 2h0m2 3h0m14-3h0m-57 8h0m19-2h0m14 0h0m15-2h0m12 5h0m3-5h0m7 2h0m-69 5h0m3 4h0m6-3h0m10 2h0m4 1h0m2-4h0m1 4h0m5 0h0m6-1h0m3-4h0m10 1h0m3 2h0m11 0h0m-65 8h0m6-3h0m10 1h0m19-2h0m11 1h0m7 3h0m16 0h0m-65 1h0m10 2h0m6 3h0m6-2h0m7 1h0m6-3h0m0 3h0m3-1h0m4 1h0m2-3h0m24 1h0m-72 9h0m0-3h0m6-1h0m3 4h0m3-4h0m20 0h0m9 0h0m5 4h0m9 0h0m11-5h0m5 5h0m-71 3h0m2 0h0m13 0h0m5 0h0m21 0h0m3 0h0"/>
<path id="d17b" d="M548 355h0m11 0h0m-2 5h0m-2 8h0m-10 6h0m3 6h0m-7 14h0m1-3h0m16 20h0m5 8h0m5 11h0m-3 17h0m-8 7h0m2-4h0m-41 9h0m11-1h0m4-1h0m-15 10h0m29 24h0m6-1h0m-2 3h0m19 9h0m20 10h0m3 1h0m-2 12h0m6 2h0m3 5h0m1-4h0m-4 6h0m0 8h0m2 3h0m-10 5h0m4 3h0m8 3h0m-2 5h0m-15 8h0m2-1h0m7 10h0m6 0h0m-17 15h0m7-2h0m15 0h0m-21 7h0m3-1h0m9 0h0m-43 4h0m5-1h0m3 0h0m5 1h0m16 1h0m-50 5h0m5 3h0m38 16h0m-1 6h0m5 0h0m7-1h0m-1 14h0m2 8h0m2-1h0m3-2h0m-8 11h0m5 3h0m2-4h0m-4 9h0m1 2h0m7-3h0m-12 7h0m8 0h0m-15 3h0m2 4h0m9 1h0m8-2h0m-29 4h0m18 1h0m19 3h0m-129 6h0m10-2h0m91 0h0m15-3h0m19 3h0m-120 3h0m5 2h0m10 3h0m10 0h0m-12 3h0m33 1h0m5-1h0m26 1h0m-32 3h0m36 5h0m5-2h0m1-2h0m16 2h0m4 0h0m3 2h0m-87 2h0m72 2h0m3-3h0m-69 9h0m25 0h0m31 4h0m-1 7h0m4 7h0m4-2h0m29 5h0m-23 14h0m5 5h0m2 7h0"/>
<path id="d12b" d="M500 372h0m3 10h0m5 22h0m13 1h0m4 1h0m-3 4h0m6-1h0m8 5h0m9 5h0m-63 2h0m14 3h0m43 0h0m-66 6h0m13-3h0m5 1h0m50-1h0m1 7h0m-66 5h0m6-1h0m40 5h0m-3 3h0m12-1h0m-42 9h0m3 0h0m41-4h0m-33 14h0m2 10h0m5 6h0m6 6h0m12 16h0m5 0h0m-4 17h0m21 2h0m4-1h0m-15 4h0m2 3h0m10-1h0m2-1h0m4-3h0m4 1h0m13 1h0m-28 9h0m1-2h0m27 7h0m2 11h0m-15 25h0m3-2h0m-38 27h0m2 16h0m24 7h0m-42 5h0m8 0h0m35 0h0m-56 3h0m4 2h0m55-1h0m1 19h0m2 2h0m1 3h0m-1 14h0m0 7h0m-96 10h0m-21 5h0m0 15h0m36-1h0m8 4h0m16 15h0m16 7h0m-3 6h0m20-5h0m24 9h0m5 8h0m-2 4h0m5 3h0m3 4h0"/>
<path id="d14b" d="M525 354h0m-13 6h0m9 1h0m1 8h0m6-1h0m-12 7h0m-3 5h0m4 3h0m2-1h0m-4 4h0m2 8h0m12 4h0m3 3h0m4 0h0m14 12h0m-1 11h0m-48 7h0m49 0h0m4-3h0m2 3h0m-61 5h0m9 1h0m50-3h0m-63 9h0m6 9h0m4 3h0m14-2h0m-12 11h0m5 7h0m18 15h0m8 7h0m3 2h0m0 20h0m42 10h0m0 12h0m-1 13h0m-10 25h0m-7 11h0m3-2h0m2-1h0m-28 15h0m-36 13h0m-6 2h0m19-1h0m28 4h0m-45 11h0m61 1h0m4 28h0m2 11h0m-81 15h0m75 1h0m-4 6h0m-50 2h0m2 1h0m4-1h0m42-1h0m-112 7h0m7 4h0m66-4h0m29-1h0m-74 6h0m6 0h0m21 10h0m4 4h0m8 6h0m57 16h0m-6 7h0m4 2h0m3-3h0m4 6h0"/>
<path id="d2a" d="M451 357h0m3-3h0m-8 7h0m4 4h0m4-5h0m-4 8h0m1 10h0m-1 8h0m-11 22h0m4 2h0m-6 11h0m0 6h0m3 1h0m-8 21h0m-23 12h0m10-5h0m-13 17h0m0-5h0m4 21h0m-10 32h0m1 6h0m27-5h0m10 3h0m1 6h0m0 4h0m4 1h0m13-1h0m-6 10h0m2-2h0m12-1h0m-21 9h0m21-3h0m-16 6h0m4 2h0m3 0h0m3 1h0m-38 6h0m27 0h0m1-1h0m9-2h0m-33 15h0m15-3h0m9-2h0m32 1h0m-59 7h0m6 0h0m-3 5h0m-16 13h0m8 4h0m3 12h0m10 17h0m8-2h0m-9 7h0m-1 5h0m10-3h0m10 2h0m-14 15h0m3-5h0m3 5h0m-15 7h0m15 0h0m-24 7h0m2 7h0m14 1h0m-16 4h0m28 61h0m-32 6h0m14 2h0m15 5h0m19-3h0m-28 8h0m23 2h0m-16 7h0m12 0h0m4-4h0m-16 9h0m7-4h0m-12 8h0m17-1h0m-10 8h0m16-3h0m-13 15h0m4-2h0m8 29h0m5 9h0m3-2h0m2 9h0m12-1h0m4-3h0m1 15h0m-2 3h0m-7 8h0m10-1h0m-2 9h0m0 6h0m5-2h0"/>
<path id="d3a" d="M457 354h0m2 10h0m1 9h0m-2 9h0m-2 5h0m1 3h0m2 5h0m-10 3h0m9-1h0m-4 11h0m-10 12h0m-4 15h0m-3 11h0m-24 15h0m26 0h0m-16 4h0m5-2h0m3 2h0m14 7h0m-27 3h0m12 1h0m18 0h0m-27 8h0m0-4h0m-13 13h0m-8 16h0m2-5h0m7 2h0m-3 4h0m2 2h0m8 0h0m-10 7h0m3 2h0m19-5h0m1 5h0m4-5h0m17 7h0m-2 9h0m10 7h0m-2 10h0m11 0h0m2-2h0m-4 7h0m-1 9h0m9-3h0m-25 9h0m4-4h0m1 4h0m3-5h0m-2 11h0m20-1h0m-32 5h0m8-3h0m35 3h0m-62 8h0m14-2h0m21-3h0m19 3h0m-63 13h0m4-4h0m21 29h0m3-1h0m5 10h0m-13 14h0m3-4h0m12 7h0m-6 12h0m0 7h0m-9 7h0m6 0h0m1-2h0m-26 56h0m20 10h0m29 3h0m2 3h0m0 16h0m-6 6h0m0-4h0m7 0h0m4 0h0m-6 6h0m-4 6h0m2 3h0m2-2h0m5-2h0m-17 7h0m10 0h0m-13 5h0m8 1h0m-6 8h0m4 7h0m6 3h0m7 3h0m-9 6h0m5-2h0m6 3h0m-9 4h0m11 1h0m5 0h0m9-1h0m-28 5h0m8-2h0m15 4h0m6-3h0m-27 5h0m24 9h0m4 9h0m-4 10h0m5 11h0m-1 6h0"/>
<path id="d18b" d="M560 357h0m1-3h0m5 0h0m3 4h0m7-4h0m3 0h0m2 2h0m2-2h0m5 5h0m7-2h0m10-3h0m-43 6h0m5 1h0m5 0h0m4 2h0m6 2h0m14-5h0m9 0h0m-39 9h0m18-1h0m6-1h0m0 4h0m1-5h0m18 4h0m-62 3h0m6 2h0m9-1h0m8 2h0m5 0h0m3-1h0m4-2h0m4 0h0m2 2h0m7 0h0m6 0h0m5 0h0m-49 5h0m4-1h0m8-1h0m2 4h0m2-4h0m5 5h0m3-4h0m5 4h0m8-4h0m3 3h0m0-4h0m-44 8h0m2 3h0m19-2h0m7 0h0m13-1h0m9 0h0m6 0h0m-57 7h0m4 1h0m27-4h0m2 3h0m4 0h0m16 1h0m-50 7h0m4-3h0m12 1h0m13-1h0m0 3h0m9 0h0m7-2h0m4 0h0m6 2h0m-49 1h0m1 4h0m27-1h0m7 0h0m1-3h0m8 4h0m-35 7h0m0-5h0m5 4h0m1-3h0m3 3h0m3-3h0m2 4h0m4 0h0m4-1h0m5-4h0m3 3h0m10-1h0m-33 7h0m12-1h0m-24 4h0m3 3h0m8 1h0m12-3h0m5-1h0m4 1h0m10 4h0m-40 2h0m13 1h0m14 2h0m1-1h0m4 1h0m-28 3h0m3 2h0m6 0h0m1-3h0m4 0h0m2 1h0m5 2h0m9 1h0m-29 3h0m17-1h0m7 4h0m5-1h0m0-2h0m5 0h0m-37 7h0m2 3h0m7-3h0m2 1h0m8 0h0m18 2h0m-21 1h0m8 4h0m4-3h0m3 0h0m-72 10h0m13-5h0m11 5h0m15-3h0m4-1h0m8 1h0m14-2h0m2 5h0m1-4h0m11 4h0m1-4h0m-79 7h0m14 1h0m1 0h0m26 2h0m4-3h0m6 3h0m7-5h0m8 2h0m6 2h0m-59 2h0m2 4h0m5 1h0m9 0h0m3-4h0m0 1h0m7 2h0m18-4h0m2 4h0m22-3h0m-70 7h0m4 0h0m5 2h0m20-2h0m8 0h0m25-1h0m8 0h0m-38 5h0m14 3h0m-26 6h0m3 2h0m4-4h0m2-1h0m5 1h0m4 1h0m12 2h0m2-3h0m8-1h0m-29 10h0m3-3h0m6 4h0m8 0h0m0-2h0m17-2h0m4 0h0m-43 6h0m20-1h0m8 0h0m11 4h0m5-2h0m-35 9h0m14-4h0m9-1h0m7 5h0m5-4h0m-23 8h0m9-3h0m6 9h0m3-3h0m-4 8h0m3-1h0m-5 15h0m3-3h0m2 4h0m2-4h0m4 0h0m-3 7h0m-2 5h0m5 4h0m-6 2h0m0 8h0m-2 4h0m6 2h0m-9 4h0m11 1h0m-9 6h0m0-2h0m9 2h0m-3 8h0m3 1h0m-3 2h0m-1 5h0m3 5h0m-33 5h0m22-3h0m5 0h0m3 0h0m3-1h0m-48 8h0m13 1h0m1 2h0m10-2h0m9 0h0m7-1h0m4 3h0m3-4h0m-32 9h0m8 0h0m13 1h0m3-4h0m8-1h0m-35 11h0m3-4h0m4 0h0m5 4h0m4-1h0m12-4h0m4 1h0m5 3h0m-18 6h0m9 0h0m6-4h0m-18 8h0m11 2h0m-7 5h0m10-1h0m2 3h0m5 0h0m-16 5h0m3 0h0m3 3h0m0 7h0m5 0h0m-13 8h0m11 12h0m7-4h0m-12 11h0m11 2h0m-128 6h0m8 0h0m6 3h0m111 6h0m0 7h0m3-2h0m-97 5h0m5 2h0m19-1h0m3 1h0m15-3h0m3 0h0m43-1h0m1 4h0m9 0h0m-93 5h0m0 2h0m8-3h0m1 2h0m3-2h0m4 0h0m3-1h0m10 2h0m19-1h0m8 3h0m22 0h0m10-3h0m-83 4h0m3 3h0m10-3h0m11 3h0m5-3h0m0 3h0m5-3h0m6 2h0m27 0h0m2 1h0m4 0h0m-19 8h0m11-2h0m4-3h0m3 0h0m2 5h0m3-4h0m6 3h0m4 1h0m1-4h0m-15 8h0m8 0h0m5 2h0m2-4h0m-35 5h0m13 1h0m7 1h0m1-1h0m10 4h0m-13 2h0m9 4h0m-3 10h0m0-3h0m10 5h0m-15 2h0m5 4h0m0 3h0m10-2h0m1 2h0"/>
<path id="d7b" d="M474 354h0m2 2h0m-2 4h0m4 8h0m-1 4h0m-4 7h0m3 9h0m3-4h0m-1 6h0m1 9h0m3-1h0m-12 14h0m2-3h0m-9 7h0m-1 18h0m-5 7h0m4 18h0m0-3h0m7 12h0m9 16h0m-13 5h0m7-3h0m5 11h0m-6 10h0m-29 8h0m57 0h0m-30 5h0m10 10h0m8 3h0m7 1h0m7 0h0m-7 7h0m10 3h0m33 6h0m-42 6h0m4-1h0m3 1h0m14 1h0m27-3h0m0 2h0m6 0h0m2 1h0m-49 6h0m22-5h0m16 0h0m-32 10h0m-5 7h0m7 0h0m4 0h0m5-4h0m5 4h0m-13 12h0m7-1h0m-65 8h0m23 11h0m-13 13h0m2 2h0m5 3h0m11 10h0m1 6h0m27 2h0m0 9h0m3 0h0m4 3h0m-17 1h0m8 5h0m19-1h0m-59 7h0m48-4h0m7 3h0m1-4h0m-64 7h0m5-1h0m52 3h0m8 4h0m-93 39h0m48 10h0m-29 9h0m30 0h0m2-3h0m0 2h0m-61 13h0m73 51h0m-1 7h0m0-3h0m5 2h0m5-2h0m-4 6h0m0 7h0m4 33h0m-3 12h0m3 22h0"/>
<path id="d18c" d="M571 357h0m7-1h0m8 1h0m3-3h0m1 3h0m2-3h0m5 1h0m-32 10h0m3-1h0m4 0h0m6-4h0m6 4h0m10 0h0m4-1h0m1-3h0m4 3h0m3 1h0m4 1h0m-51 2h0m2-1h0m5 5h0m3-3h0m0 3h0m4 0h0m3-2h0m3-1h0m10-1h0m6 0h0m5 2h0m3-1h0m6 3h0m-59 5h0m7-3h0m0 4h0m9-1h0m10-4h0m16 5h0m5-5h0m5 1h0m7 2h0m-65 8h0m9-4h0m2 4h0m23-5h0m11 2h0m4 2h0m7 0h0m6-3h0m4 1h0m-61 7h0m12 0h0m8 0h0m13-3h0m3 2h0m6 1h0m7-1h0m5-2h0m2 1h0m3-1h0m-58 7h0m8 1h0m2 2h0m7-3h0m4 4h0m7 0h0m4-1h0m9-3h0m5 1h0m7 3h0m-41 4h0m14-2h0m4 0h0m7 0h0m5 0h0m3 2h0m-30 4h0m4 0h0m4-1h0m3 4h0m7-3h0m8-1h0m1 5h0m15-5h0m1 4h0m-44 3h0m10 1h0m12 0h0m4-1h0m17 0h0m-31 10h0m9-2h0m24-3h0m-40 6h0m4 4h0m9 1h0m4-2h0m5 0h0m4 2h0m5-4h0m7-1h0m-37 7h0m6 4h0m7-4h0m4-1h0m23 2h0m-27 8h0m13-1h0m9 0h0m5-3h0m-40 11h0m6-2h0m2 1h0m3-4h0m12 5h0m10-1h0m6 1h0m0-4h0m-30 10h0m18-4h0m9 2h0m4-2h0m-46 8h0m8 0h0m13 0h0m5 0h0m19 0h0m-88 5h0m14 2h0m14 0h0m9-2h0m5 0h0m6 2h0m6-2h0m2 2h0m13 0h0m13-3h0m0 4h0m-45 3h0m20 3h0m4-5h0m7 2h0m1 2h0m0 1h0m8 0h0m4 0h0m1-1h0m5-3h0m-78 10h0m2 0h0m21-1h0m11-4h0m11 3h0m16 0h0m14-2h0m0 3h0m-73 3h0m1 4h0m3-3h0m1 3h0m3 0h0m6 0h0m9-3h0m5 1h0m7 1h0m13 1h0m5-2h0m12-3h0m8 1h0m4 4h0m-64 5h0m2-1h0m5-1h0m5 1h0m19 1h0m18-1h0m1-3h0m7 3h0m6 1h0m-53 2h0m7 2h0m19 1h0m4 0h0m1-2h0m7 4h0m3-5h0m8 4h0m5-3h0m1 3h0m-44 3h0m3 1h0m9-1h0m6 0h0m11 1h0m4 3h0m2-2h0m2 2h0m-27 3h0m17 1h0m7-1h0m10-1h0m-16 6h0m-3 5h0m6 2h0m9 1h0m2 2h0m2-4h0m-25 6h0m23 8h0m-2 7h0m0-4h0m4 0h0m-13 17h0m4-4h0m1 9h0m-6 4h0m12 7h0m-8 7h0m8-3h0m-14 6h0m2 5h0m11 2h0m-7 11h0m-25 9h0m-9 7h0m12-3h0m9 2h0m4 1h0m5 0h0m3 0h0m-43 4h0m2-3h0m20 3h0m2-1h0m3-2h0m27 4h0m-41 5h0m12 1h0m6-4h0m3 3h0m5 1h0m1-4h0m6 3h0m8 2h0m-40 6h0m26-4h0m9 7h0m1 3h0m-8 2h0m11 4h0m-17 6h0m6-2h0m-2 3h0m8 8h0m6 3h0m-13 1h0m2 5h0m-2 4h0m4 1h0m2-4h0m5 5h0m2-5h0m-15 10h0m5 1h0m3-2h0m4 5h0m3 2h0m-7 3h0m-118 13h0m5 1h0m6 7h0m114 0h0m-7 4h0m-89 8h0m15-2h0m3 1h0m9-2h0m18 2h0m-38 4h0m21 4h0m1-2h0m8-2h0m3 0h0m3 1h0m4 2h0m1-3h0m8-1h0m4 0h0m17 1h0m6 0h0m1 4h0m-67 1h0m7 0h0m29 3h0m9 0h0m4 1h0m23-1h0m7-3h0m-33 7h0m23 3h0m5-2h0m-27 4h0m4 3h0m4-2h0m-6 7h0m5 2h0m7-4h0m6 4h0m3-1h0m-13 4h0m6 3h0m11-3h0m-13 6h0m4 1h0m3 0h0m0-2h0m6 1h0m4 2h0m1-3h0m-18 9h0m3-3h0m1 3h0m8-2h0m1 3h0m5-4h0m-8 7h0m6 0h0m2 0h0m-3 7h0"/>
<path id="d18a" d="M556 357h0m7 1h0m9-4h0m26 3h0m2-3h0m2 3h0m5 0h0m1-3h0m2 4h0m-35 3h0m7-1h0m10 2h0m16-2h0m-45 9h0m32 2h0m-35 2h0m23 3h0m22-4h0m-42 10h0m2-3h0m2 3h0m8 1h0m12-3h0m16-1h0m-48 7h0m3-2h0m5 2h0m13-1h0m27 4h0m-41 2h0m2 3h0m5 1h0m2-3h0m4-2h0m3 2h0m11-2h0m4 4h0m4 1h0m3-5h0m8 0h0m2 4h0m-43 4h0m36 3h0m5-2h0m-49 5h0m9 0h0m3 1h0m6-2h0m3 2h0m2 1h0m18 1h0m-7 2h0m2 2h0m7-2h0m2 4h0m-37 1h0m2 2h0m4 0h0m8 1h0m13-1h0m3 1h0m5 0h0m5 0h0m3-2h0m-30 5h0m4 1h0m15 2h0m2 0h0m2-3h0m7 4h0m-38 7h0m3-3h0m14 3h0m2-4h0m9 1h0m1 3h0m4-2h0m2 2h0m1 3h0m-39 4h0m8 0h0m7 5h0m1-3h0m2 3h0m6-4h0m6-1h0m-27 7h0m13 0h0m3 4h0m3 0h0m3-3h0m8-1h0m-41 9h0m14-4h0m2 4h0m5 0h0m15-1h0m4 1h0m6-3h0m1 2h0m-68 8h0m5-3h0m0 1h0m8-3h0m2 4h0m4 0h0m7 1h0m18-4h0m3 0h0m12 3h0m1-3h0m10 4h0m-86 4h0m3 2h0m4-5h0m1 3h0m4-1h0m12 2h0m5-3h0m10 2h0m4-2h0m4 2h0m3-3h0m4 4h0m6-2h0m-63 7h0m9-3h0m6 1h0m1 3h0m2-3h0m3 4h0m6-4h0m3 0h0m6 0h0m13 2h0m2-2h0m7 3h0m4 1h0m11-5h0m3 4h0m3 0h0m7 1h0m-59 1h0m5 0h0m0 5h0m5 0h0m3 0h0m5-5h0m8 5h0m0-4h0m7-1h0m6 5h0m1-4h0m2 3h0m4-3h0m5 3h0m-59 4h0m20 0h0m5 1h0m3 1h0m5-2h0m9-2h0m0 3h0m6 0h0m11-1h0m6-2h0m5 3h0m-51 4h0m10 4h0m5-1h0m3-1h0m8-2h0m13 4h0m5-5h0m2 4h0m-43 3h0m30 1h0m-22 5h0m7-1h0m11 3h0m8 2h0m11-4h0m-29 5h0m1 4h0m20 1h0m2-3h0m5 0h0m4 3h0m-38 2h0m23 4h0m6-2h0m-2 3h0m8 3h0m3 1h0m-2 11h0m0 8h0m2 2h0m-3 9h0m0-3h0m0 10h0m3-3h0m0 4h0m-5 11h0m5-4h0m-8 5h0m4 5h0m0-4h0m4 3h0m-2 9h0m-7 15h0m3-1h0m6-2h0m-39 10h0m9 0h0m10-3h0m14 3h0m5 0h0m-62 2h0m4 2h0m14-1h0m3 1h0m23 0h0m7 1h0m-28 2h0m2 4h0m7-4h0m4 0h0m9 0h0m13 3h0m-25 8h0m4-5h0m3 2h0m3-1h0m9 3h0m4 0h0m5-1h0m-20 5h0m7 0h0m0-2h0m14 2h0m-21 8h0m3 0h0m3-4h0m2 3h0m7-2h0m7 0h0m-11 10h0m7-5h0m0 2h0m4 0h0m-7 8h0m3 0h0m3 1h0m-8 6h0m4-1h0m4-3h0m-12 8h0m11-2h0m-4 9h0m3-4h0m-1 8h0m4-1h0m-17 6h0m6 1h0m6-2h0m-25 8h0m28-2h0m2 3h0m-4 3h0m-113 6h0m6 4h0m-7 7h0m8 0h0m106-3h0m-1 7h0m2 2h0m-103 2h0m1 3h0m4 1h0m14-2h0m5 1h0m16 1h0m4-1h0m2-3h0m0 2h0m6 2h0m7-5h0m1 5h0m32-4h0m10 3h0m-40 6h0m12-2h0m2 2h0m21-1h0m2 1h0m6-2h0m-89 6h0m9 1h0m20-3h0m20 0h0m2 2h0m11 0h0m18 2h0m7-1h0m1-2h0m-26 5h0m1 4h0m2-2h0m7 3h0m11-5h0m-27 8h0m9 3h0m3-4h0m10 1h0m3 3h0m5-3h0m-16 8h0m14-3h0m-20 7h0m5 3h0m7-4h0m5 0h0m6 5h0m-16 8h0m15-1h0m-9 10h0m1-4h0m4 7h0m3-2h0"/>
<path id="d8a" d="M480 354h0m2 32h0m3 8h0m3 0h0m-9 14h0m-17 16h0m5 42h0m3-1h0m8 0h0m6 0h0m-5 7h0m-14 10h0m7 2h0m7-4h0m9 2h0m2-2h0m-22 10h0m4 1h0m5 0h0m8-1h0m2-1h0m5 2h0m4-4h0m-29 8h0m15 2h0m4-1h0m10 1h0m6-1h0m-10 5h0m17-3h0m3 2h0m1-2h0m-47 10h0m6-3h0m7 3h0m2-3h0m0 2h0m13-2h0m9 0h0m3 0h0m-31 10h0m14-4h0m1 4h0m2-2h0m20-3h0m-40 11h0m39-5h0m-26 11h0m18-5h0m6 5h0m-18 4h0m9 0h0m17 1h0m-1 5h0m-9 8h0m18-1h0m0-4h0m5 1h0m-11 5h0m17 0h0m-37 7h0m3 0h0m18 1h0m25-2h0m-18 11h0m1-3h0m19 0h0m3 0h0m-45 5h0m12 3h0m15-1h0m7-3h0m1 4h0m6-3h0m-36 7h0m16-1h0m2 4h0m10 0h0m4-4h0m5-1h0m-32 12h0m13 0h0m-88 18h0m41 4h0m-48 7h0m6-3h0m21 7h0m5 2h0m50 18h0m-30 2h0m25 2h0m6 2h0m1-4h0m-19 9h0m19-2h0m4 1h0m6 0h0m-25 8h0m2-3h0m12-1h0m14 10h0m4 4h0m4-2h0m-52 6h0m9 4h0m8-3h0m5 3h0m25-1h0m-72 3h0m48 2h0m21-3h0m-81 7h0m66 0h0m20 3h0m-110 4h0m47 25h0m-17 8h0m-1 3h0m-30 19h0m62 0h0m5 13h0m18 2h0m12 5h0m-29 6h0m-4 13h0m5 5h0m3 4h0m6-2h0"/>
<path id="d0b" d="M400 354h0m4 4h0m4-1h0m4-3h0m9 4h0m4 0h0m4-4h0m8 4h0m5-3h0m-42 6h0m7 0h0m3 4h0m7 0h0m7-4h0m1 2h0m4-3h0m5 4h0m5 1h0m-27 6h0m-9 6h0m13-4h0m3 3h0m3-3h0m2 3h0m-20 5h0m6-2h0m1 4h0m2-4h0m3 4h0m2-4h0m5-1h0m4 2h0m4-1h0m-31 7h0m14 1h0m6-3h0m1 2h0m4 0h0m-10 6h0m14 1h0m3-2h0m5 0h0m3-1h0m-24 8h0m3-1h0m8 1h0m-21 4h0m9 3h0m6 1h0m14-4h0m1 3h0m-36 5h0m3 2h0m10-4h0m3 4h0m4 0h0m-20 2h0m11 5h0m3-2h0m7-2h0m-21 6h0m15 3h0m2 0h0m10-3h0m-27 6h0m4 1h0m13 3h0m12-3h0m-27 6h0m20 3h0m5-3h0m-27 8h0m8 1h0m2-3h0m3-1h0m3 3h0m11 0h0m-23 3h0m9 2h0m-13 3h0m0 4h0m10-3h0m-9 24h0m-1 56h0m16 0h0m4 0h0m17 0h0m-37 5h0m23 2h0m10 0h0m2 0h0m-35 6h0m5-2h0m27 2h0m8-1h0m-40 6h0m3 5h0m29-2h0m8 0h0m-32 35h0m-6 10h0m2 17h0m-4 10h0m6 0h0m0 4h0m-2 7h0m12 0h0m-16 1h0m10 5h0m9-3h0m-19 5h0m0 6h0m21 3h0m-21 3h0m2 3h0m15 1h0m1-5h0m0 10h0m-18 4h0m22 7h0m-15 5h0m0 7h0m-5 7h0m0 3h0m6 1h0m1 6h0m-7 7h0m12 0h0m-12 9h0m1 4h0m3 5h0m3-3h0m-8 20h0m5-2h0m-6 8h0m48 0h0m-43 4h0m6 4h0m2-4h0m1 5h0m-8 2h0m8 2h0m-14 6h0m8-3h0m8 8h0m2 2h0m1-3h0m9 0h0m7 4h0m-16 4h0m3-3h0m5 1h0m7 4h0m-31 6h0m1-4h0m4 4h0m4-2h0m2 2h0m5-1h0m14-1h0m-25 8h0m4-5h0m13 0h0m-21 9h0m9-2h0m1-1h0m7 3h0m8 0h0m-25 3h0m0 5h0m6 0h0m2 0h0m6-2h0m16 1h0m6-4h0m-37 9h0m7-2h0m2 4h0m8-5h0m26 2h0m-46 5h0m0 3h0m16-1h0m4 0h0m15-2h0m9 1h0m3-1h0m-47 9h0m6-3h0m2-1h0m13 1h0m25-1h0m-40 7h0m3 0h0m4 1h0m7 3h0m7 0h0m2-5h0m5 3h0m4-2h0m10 6h0m4 2h0m-52 6h0m3-1h0m1 2h0m4-3h0m0 3h0m4 1h0m4-3h0m1 3h0m7-5h0m7 1h0m3 4h0m11-5h0m9 0h0m-50 9h0m4-2h0m6 4h0m13-1h0m10-2h0m9 1h0m10-3h0m1 2h0m2-2h0m8 4h0m-67 6h0m6-4h0m4 4h0m7-1h0m0-3h0m20 1h0m3 4h0m8-3h0m8-2h0m6 4h0m-62 4h0m12 3h0m26-3h0m4-1h0m14 1h0m2 3h0m4-2h0m0 1h0m-58 5h0m12 2h0m35-2h0m10 2h0m6-3h0m-65 6h0m19 2h0m4 0h0m4 0h0m5 1h0m8 0h0m7-3h0m1 1h0m2-1h0m6 0h0m2 2h0m2 1h0m5-2h0m-60 4h0m3 1h0m13 0h0m10 0h0m20 0h0m5 0h0m8 0h0"/>
<path id="d5b" d="M468 373h0m-1 7h0m3 4h0m-1 10h0m-6 18h0m-12 12h0m1 3h0m5 1h0m-7 14h0m6 22h0m-4 7h0m8-3h0m-17 22h0m13 0h0m-12 3h0m12 0h0m5 1h0m-21 7h0m18-1h0m2-2h0m-9 8h0m5 2h0m3-4h0m-23 13h0m18-1h0m6 11h0m9 11h0m3 3h0m3 3h0m2-3h0m13 4h0m-20 7h0m13 0h0m-5 8h0m8 1h0m6 6h0m0 4h0m8 3h0m-58 12h0m49 3h0m9 1h0m-31 4h0m0 5h0m11-5h0m5 3h0m14 0h0m-68 19h0m32 7h0m2 6h0m-1 10h0m-12 15h0m38 5h0m-42 1h0m19 0h0m14 4h0m17 0h0m-50 6h0m4-2h0m-13 11h0m30 37h0m8 3h0m-12 5h0m2 2h0m-12 8h0m3 0h0m6 1h0m7 0h0m-2 4h0m14 29h0m-10 10h0m5 4h0m9 21h0m6 12h0m4 7h0m5 6h0m-7 12h0m-1 6h0m-2 11h0m3 0h0m3-4h0m-1 14h0"/>
<path id="d15b" d="M528 354h0m13 0h0m-12 6h0m-4 9h0m6 2h0m-10 9h0m2 3h0m7 0h0m4-4h0m-9 7h0m16 18h0m8 5h0m4 12h0m9 13h0m-66 5h0m4 2h0m57-3h0m-59 8h0m55 3h0m-39 20h0m3 11h0m33 21h0m-8 8h0m2-3h0m7 2h0m-5 7h0m17 1h0m12 8h0m5 6h0m4 15h0m2 5h0m-6 3h0m0 7h0m1 4h0m-6 11h0m4-1h0m-11 6h0m1 7h0m6-4h0m-24 15h0m8 0h0m-32 4h0m0 3h0m14 6h0m-43 1h0m4 3h0m31-3h0m18 0h0m5 5h0m-53 4h0m64 14h0m0 28h0m7 1h0m-4 6h0m-10 6h0m3 2h0m4 0h0m2 5h0m22 4h0m-83 13h0m8 1h0m36-5h0m23 5h0m-54 1h0m2 2h0m16 23h0m13-1h0m12 9h0m3 0h0m8 18h0m3 17h0"/>
</defs>
<g fill="none" stroke-linecap="round">
<use href="#d2c" stroke="#200800" stroke-opacity=".22" stroke-width="7.900"/><use href="#d2c" stroke="#f5601a" stroke-width="7"/>
<use href="#d3c" stroke="#200800" stroke-opacity=".22" stroke-width="7.900"/><use href="#d3c" stroke="#f6771a" stroke-width="7"/>
<use href="#d15c" stroke="#200800" stroke-opacity=".22" stroke-width="7.900"/><use href="#d15c" stroke="#7faae0" stroke-width="7"/>
<use href="#d12c" stroke="#200800" stroke-opacity=".22" stroke-width="7.900"/><use href="#d12c" stroke="#b2debe" stroke-width="7"/>
<use href="#d16a" stroke="#200800" stroke-opacity=".22" stroke-width="7.900"/><use href="#d16a" stroke="#9284e2" stroke-width="7"/>
<use href="#d10c" stroke="#200800" stroke-opacity=".22" stroke-width="7.900"/><use href="#d10c" stroke="#e6da7c" stroke-width="7"/>
<use href="#d16b" stroke="#200800" stroke-opacity=".22" stroke-width="7.900"/><use href="#d16b" stroke="#9284e2" stroke-width="7"/>
<use href="#d12a" stroke="#200800" stroke-opacity=".22" stroke-width="7.900"/><use href="#d12a" stroke="#b2debe" stroke-width="7"/>
<use href="#d11b" stroke="#200800" stroke-opacity=".22" stroke-width="7.900"/><use href="#d11b" stroke="#ccdc9d" stroke-width="7"/>
<use href="#d8c" stroke="#200800" stroke-opacity=".22" stroke-width="7.900"/><use href="#d8c" stroke="#f4d236" stroke-width="7"/>
<use href="#d2b" stroke="#200800" stroke-opacity=".22" stroke-width="7.900"/><use href="#d2b" stroke="#f5601a" stroke-width="7"/>
<use href="#d0a" stroke="#200800" stroke-opacity=".22" stroke-width="7.900"/><use href="#d0a" stroke="#f02e1e" stroke-width="7"/>
<use href="#d6c" stroke="#200800" stroke-opacity=".22" stroke-width="7.900"/><use href="#d6c" stroke="#f9b626" stroke-width="7"/>
<use href="#d4a" stroke="#200800" stroke-opacity=".22" stroke-width="7.900"/><use href="#d4a" stroke="#f88e1a" stroke-width="7"/>
<use href="#d7a" stroke="#200800" stroke-opacity=".22" stroke-width="7.900"/><use href="#d7a" stroke="#f6c42e" stroke-width="7"/>
<use href="#d9c" stroke="#200800" stroke-opacity=".22" stroke-width="7.900"/><use href="#d9c" stroke="#edd659" stroke-width="7"/>
<use href="#d11a" stroke="#200800" stroke-opacity=".22" stroke-width="7.900"/><use href="#d11a" stroke="#ccdc9d" stroke-width="7"/>
<use href="#d9b" stroke="#200800" stroke-opacity=".22" stroke-width="7.900"/><use href="#d9b" stroke="#edd659" stroke-width="7"/>
<use href="#d3b" stroke="#200800" stroke-opacity=".22" stroke-width="7.900"/><use href="#d3b" stroke="#f6771a" stroke-width="7"/>
<use href="#d1c" stroke="#200800" stroke-opacity=".22" stroke-width="7.900"/><use href="#d1c" stroke="#f2471c" stroke-width="7"/>
<use href="#d13b" stroke="#200800" stroke-opacity=".22" stroke-width="7.900"/><use href="#d13b" stroke="#8fd7ce" stroke-width="7"/>
<use href="#d15a" stroke="#200800" stroke-opacity=".22" stroke-width="7.900"/><use href="#d15a" stroke="#7faae0" stroke-width="7"/>
<use href="#d10a" stroke="#200800" stroke-opacity=".22" stroke-width="7.900"/><use href="#d10a" stroke="#e6da7c" stroke-width="7"/>
<use href="#d6b" stroke="#200800" stroke-opacity=".22" stroke-width="7.900"/><use href="#d6b" stroke="#f9b626" stroke-width="7"/>
<use href="#d14a" stroke="#200800" stroke-opacity=".22" stroke-width="7.900"/><use href="#d14a" stroke="#6cd0de" stroke-width="7"/>
<use href="#d13a" stroke="#200800" stroke-opacity=".22" stroke-width="7.900"/><use href="#d13a" stroke="#8fd7ce" stroke-width="7"/>
<use href="#d10b" stroke="#200800" stroke-opacity=".22" stroke-width="7.900"/><use href="#d10b" stroke="#e6da7c" stroke-width="7"/>
<use href="#d1a" stroke="#200800" stroke-opacity=".22" stroke-width="7.900"/><use href="#d1a" stroke="#f2471c" stroke-width="7"/>
<use href="#d13c" stroke="#200800" stroke-opacity=".22" stroke-width="7.900"/><use href="#d13c" stroke="#8fd7ce" stroke-width="7"/>
<use href="#d5a" stroke="#200800" stroke-opacity=".22" stroke-width="7.900"/><use href="#d5a" stroke="#f8a220" stroke-width="7"/>
<use href="#d4b" stroke="#200800" stroke-opacity=".22" stroke-width="7.900"/><use href="#d4b" stroke="#f88e1a" stroke-width="7"/>
<use href="#d9a" stroke="#200800" stroke-opacity=".22" stroke-width="7.900"/><use href="#d9a" stroke="#edd659" stroke-width="7"/>
<use href="#d5c" stroke="#200800" stroke-opacity=".22" stroke-width="7.900"/><use href="#d5c" stroke="#f8a220" stroke-width="7"/>
<use href="#d6a" stroke="#200800" stroke-opacity=".22" stroke-width="7.900"/><use href="#d6a" stroke="#f9b626" stroke-width="7"/>
<use href="#d8b" stroke="#200800" stroke-opacity=".22" stroke-width="7.900"/><use href="#d8b" stroke="#f4d236" stroke-width="7"/>
<use href="#d17c" stroke="#200800" stroke-opacity=".22" stroke-width="7.900"/><use href="#d17c" stroke="#8153dc" stroke-width="7"/>
<use href="#d17a" stroke="#200800" stroke-opacity=".22" stroke-width="7.900"/><use href="#d17a" stroke="#8153dc" stroke-width="7"/>
<use href="#d4c" stroke="#200800" stroke-opacity=".22" stroke-width="7.900"/><use href="#d4c" stroke="#f88e1a" stroke-width="7"/>
<use href="#d11c" stroke="#200800" stroke-opacity=".22" stroke-width="7.900"/><use href="#d11c" stroke="#ccdc9d" stroke-width="7"/>
<use href="#d1b" stroke="#200800" stroke-opacity=".22" stroke-width="7.900"/><use href="#d1b" stroke="#f2471c" stroke-width="7"/>
<use href="#d14c" stroke="#200800" stroke-opacity=".22" stroke-width="7.900"/><use href="#d14c" stroke="#6cd0de" stroke-width="7"/>
<use href="#d7c" stroke="#200800" stroke-opacity=".22" stroke-width="7.900"/><use href="#d7c" stroke="#f6c42e" stroke-width="7"/>
<use href="#d16c" stroke="#200800" stroke-opacity=".22" stroke-width="7.900"/><use href="#d16c" stroke="#9284e2" stroke-width="7"/>
<use href="#d0c" stroke="#200800" stroke-opacity=".22" stroke-width="7.900"/><use href="#d0c" stroke="#f02e1e" stroke-width="7"/>
<use href="#d17b" stroke="#200800" stroke-opacity=".22" stroke-width="7.900"/><use href="#d17b" stroke="#8153dc" stroke-width="7"/>
<use href="#d12b" stroke="#200800" stroke-opacity=".22" stroke-width="7.900"/><use href="#d12b" stroke="#b2debe" stroke-width="7"/>
<use href="#d14b" stroke="#200800" stroke-opacity=".22" stroke-width="7.900"/><use href="#d14b" stroke="#6cd0de" stroke-width="7"/>
<use href="#d2a" stroke="#200800" stroke-opacity=".22" stroke-width="7.900"/><use href="#d2a" stroke="#f5601a" stroke-width="7"/>
<use href="#d3a" stroke="#200800" stroke-opacity=".22" stroke-width="7.900"/><use href="#d3a" stroke="#f6771a" stroke-width="7"/>
<use href="#d18b" stroke="#200800" stroke-opacity=".22" stroke-width="7.900"/><use href="#d18b" stroke="#7022d6" stroke-width="7"/>
<use href="#d7b" stroke="#200800" stroke-opacity=".22" stroke-width="7.900"/><use href="#d7b" stroke="#f6c42e" stroke-width="7"/>
<use href="#d18c" stroke="#200800" stroke-opacity=".22" stroke-width="7.900"/><use href="#d18c" stroke="#7022d6" stroke-width="7"/>
<use href="#d18a" stroke="#200800" stroke-opacity=".22" stroke-width="7.900"/><use href="#d18a" stroke="#7022d6" stroke-width="7"/>
<use href="#d8a" stroke="#200800" stroke-opacity=".22" stroke-width="7.900"/><use href="#d8a" stroke="#f4d236" stroke-width="7"/>
<use href="#d0b" stroke="#200800" stroke-opacity=".22" stroke-width="7.900"/><use href="#d0b" stroke="#f02e1e" stroke-width="7"/>
<use href="#d5b" stroke="#200800" stroke-opacity=".22" stroke-width="7.900"/><use href="#d5b" stroke="#f8a220" stroke-width="7"/>
<use href="#d15b" stroke="#200800" stroke-opacity=".22" stroke-width="7.900"/><use href="#d15b" stroke="#7faae0" stroke-width="7"/>
</g>

<g id="overlays">
<!-- point clusters: dark outline then red -->
<g fill="none" stroke-linecap="round" stroke-linejoin="round">
<defs><g id="cl" stroke-dasharray="0 3.400">
<path d="M433.600 356v55M433.600 398.700h37M434 434h38v9M438 454h28M462 456l6 6M479 466l3 5M483 472l6 2 2 6-6 1-3-5M480 487h7"/>
<path d="M509 378l1-10 6-7h12M514.800 366v43"/>
<path d="M537.700 369v13M537.700 390v20"/>
<path d="M400 622h4M411 622h64M404 614h0M409 628h0M434 625v38M519 625v80M476 665h60M479 668v20h14M526 668l8 8M525 734h20"/>
<path d="M562.800 628v30M406 766v22M473 793v33M436 828h69M434 832v45"/>
<path d="M399 672h12M400 680h10l2 6M400 688h4"/>
</g></defs>
<use href="#cl" stroke="#5a1008" stroke-opacity=".9" stroke-width="7.600"/>
<use href="#cl" stroke="#ea2a1e" stroke-width="6.200"/>
<defs><path id="clo" stroke-dasharray="0 3.400" d="M561 603h26M592 603h7M601.400 630v28M565 628l8 2 2 10M488 702h11M551 734h5"/></defs><use href="#clo" stroke="#6a2a08" stroke-opacity=".9" stroke-width="7"/><use href="#clo" stroke="#f57a1e" stroke-width="5.600"/>

<path stroke="#5a1808" stroke-opacity=".9" stroke-width="7.200" stroke-dasharray="0 3.400" d="M526 359.500h34"/><path stroke="#f0521f" stroke-width="5.800" stroke-dasharray="0 3.400" d="M526 359.500h34"/>
</g>
<g stroke="#7d1710" stroke-width=".8">
<g fill="#e3271b">
<circle cx="453.700" cy="497.400" r="3.300"/><circle cx="409" cy="510" r="3.300"/><circle cx="428.500" cy="517" r="4.300"/><circle cx="410" cy="526" r="3"/><circle cx="405" cy="526" r="3"/><circle cx="410" cy="543" r="3.300"/>
<circle cx="517.500" cy="537" r="3.300"/><circle cx="516" cy="545" r="3.300"/><circle cx="531" cy="542.500" r="3.500"/>
<circle cx="447" cy="569" r="3.300"/><circle cx="413.500" cy="574" r="3.300"/><circle cx="479" cy="575.500" r="3.300"/><circle cx="465.500" cy="583.500" r="3.300"/><circle cx="430" cy="577" r="3"/>
<circle cx="562" cy="612.500" r="3.300"/><circle cx="443" cy="652" r="3.300"/><circle cx="470" cy="681" r="3.300"/><circle cx="479" cy="700.500" r="3.500"/>
<circle cx="524" cy="743" r="3.300"/><circle cx="497" cy="839" r="3.800"/><circle cx="495" cy="845" r="3.500"/><circle cx="479" cy="874" r="3.800"/><circle cx="429" cy="759" r="3.500"/>
<circle cx="427" cy="806" r="3.300"/><circle cx="419" cy="819" r="3.300"/><circle cx="421" cy="829" r="3.300"/><circle cx="442" cy="841" r="3.500"/><circle cx="468" cy="778" r="3"/><circle cx="482" cy="776" r="3"/><circle cx="446" cy="890" r="0"/>
<circle cx="487.500" cy="476" r="4.500"/><circle cx="481" cy="488" r="4"/><circle cx="487" cy="489" r="3.500"/>
</g>
<g fill="#f4901f">
<circle cx="558.400" cy="378" r="3"/><circle cx="529.300" cy="433" r="3"/><circle cx="557" cy="515" r="3"/><circle cx="482.500" cy="440" r="3"/><circle cx="506.800" cy="720.600" r="3"/><circle cx="430.300" cy="707" r="3"/><circle cx="487" cy="741" r="3"/><circle cx="571" cy="617" r="3"/><circle cx="496" cy="803" r="3"/><circle cx="468" cy="715" r="0"/>
</g>
<g fill="#eed75c"><circle cx="524" cy="418" r="3.300"/><circle cx="552" cy="611" r="3.300"/><circle cx="547.500" cy="378" r="0"/></g>
</g>
<g stroke="#6a3a10" stroke-width=".8">
<g fill="#f4901f"><circle cx="529.300" cy="372" r="3"/><circle cx="529.300" cy="377.500" r="3"/><circle cx="529.300" cy="383" r="3"/><circle cx="529.300" cy="401" r="3"/><circle cx="548.600" cy="379.500" r="2.900"/><circle cx="548.600" cy="401" r="2.900"/></g>
<g fill="#eed75c"><circle cx="529.300" cy="394.500" r="3"/></g>
<g fill="#78d2d8"><circle cx="529.300" cy="388.500" r="2.900"/></g>
<g fill="#a5dcc0"><circle cx="548.600" cy="394.500" r="2.900"/></g>
<g fill="#e6da80"><circle cx="548.600" cy="373.500" r="2.900"/><circle cx="548.600" cy="386.500" r="2.900"/><circle cx="548.600" cy="408" r="2.900"/></g>
</g>
<!-- tiles -->
<g fill="none" stroke="#fa0f1e" stroke-width="1.700">
<rect x="398" y="354" width="102.500" height="106.500"/>
<rect x="504" y="355.500" width="105.500" height="103.500"/>
<rect x="400" y="460.500" width="99" height="104"/>
<rect x="499.500" y="459" width="105.500" height="105.500"/>
<rect x="400" y="564.500" width="101" height="104"/>
<rect x="504" y="564.500" width="101" height="104"/>
<rect x="395.500" y="668.500" width="105.500" height="103.500"/>
<rect x="505" y="668.500" width="104" height="104.500"/>
<rect x="398" y="773" width="107.500" height="106.500"/>
</g>
<!-- edge dots -->
<path d="M397 352.500h215.500v421h-107v106.500h-108.500z" fill="none" stroke="#1a1a3a" stroke-width="1.300" stroke-dasharray="1.500 2.500" stroke-opacity=".85"/>
</g>
<!-- nav -->
<g id="nav">
<g fill="#f6f6f3" stroke="#9a9a9a" stroke-width="1"><rect x="326.500" y="869.500" width="15" height="15"/><rect x="348.700" y="869.500" width="15" height="15"/><rect x="370.700" y="869.500" width="15" height="15"/></g>
<path d="M330.300 878.600l3.700-3.600 3.700 3.600" fill="none" stroke="#444" stroke-width="1.700"/>
<path d="M356.200 871.500v11M350.700 877h11M354.500 873.200l1.700-1.700 1.700 1.700M354.500 880.800l1.700 1.700 1.700-1.700M352.400 875.300l-1.700 1.700 1.700 1.700M360 875.300l1.700 1.700-1.700 1.700" fill="none" stroke="#555" stroke-width=".9"/>
<circle cx="378" cy="872.600" r="1.300" fill="#333"/>
<path d="M378 874v4.500l-2.500 4M378 878.500l2.200 1.500.5 2.500M378 875l-2.500 1.500M378 875l2 2.200" fill="none" stroke="#333" stroke-width="1.100"/>
<circle cx="363.500" cy="942.600" r="38.900" fill="#f8f8f6" stroke="#c4c4c4" stroke-width="1.500"/>
<path d="M357.400 913l6.100-14 6.100 14" fill="#fdfdfd" stroke="#b0b0b0" stroke-width="1"/>
<path d="M396.500 869.500h2v2h-2zM400 869.500h2.500v2.500h-2.500zM400 874h2.500v2.500h-2.500z" fill="#ddd" stroke="#444" stroke-width=".7"/>
</g>

</svg>
<!--/MAPCONTENT-->
</div>
<!--MAPTABS-->
<div class="a" style="left:307px;top:167px;width:84px;height:24px;background:#0c5aa6;border-radius:4px 4px 0 0"></div>
<div class="a" style="left:307px;top:188px;width:380px;height:3px;background:#0c5aa6"></div>
<svg style="left:300px;top:165px" width="200" height="26" viewBox="300 165 200 26">
<g transform="translate(294.300,76.200)"><path d="M19 109.800l3.300-5h9.600l3.300 5z" fill="#7cc47f" stroke="#58a35c" stroke-width=".6"/><path d="M22.900 107.200v-10.700q0-1.800 2.200-1.800t2.200 1.800v10.700z" fill="#fff" stroke="#444" stroke-width="1.100"/><path d="M28.900 107.200v-7.600q0-1.300 2.100-1.300t2.100 1.300v7.600zM31 98.300v-3.200M30 96.400h2" fill="#fff" stroke="#444" stroke-width="1.100"/></g>
<path d="M375 175.400l9.300 9.300M384.300 175.400l-9.300 9.300" stroke="#fff" stroke-width="1.300"/>
<path d="M401 172.500h6v2.500" fill="none" stroke="#3b97d3" stroke-width="1.300"/>
<rect x="397.500" y="174.500" width="14" height="10.500" fill="#3b97d3"/>
<rect x="398.500" y="177" width="12" height="7" fill="#e9f4fb"/>
<path d="M401 184l5.500-5 4 2.500v2.500z" fill="#a8d5a0"/>
</svg>
<div class="t" style="left:334.6px;top:171.7px;font-size:11.2px;letter-spacing:-0.33px;color:#fff;">Scene</div>
<div class="t" style="left:418.5px;top:171.7px;font-size:12.2px;letter-spacing:-0.30px;color:#222;">Catalog</div>

<!--/MAPTABS-->
</body></html>
